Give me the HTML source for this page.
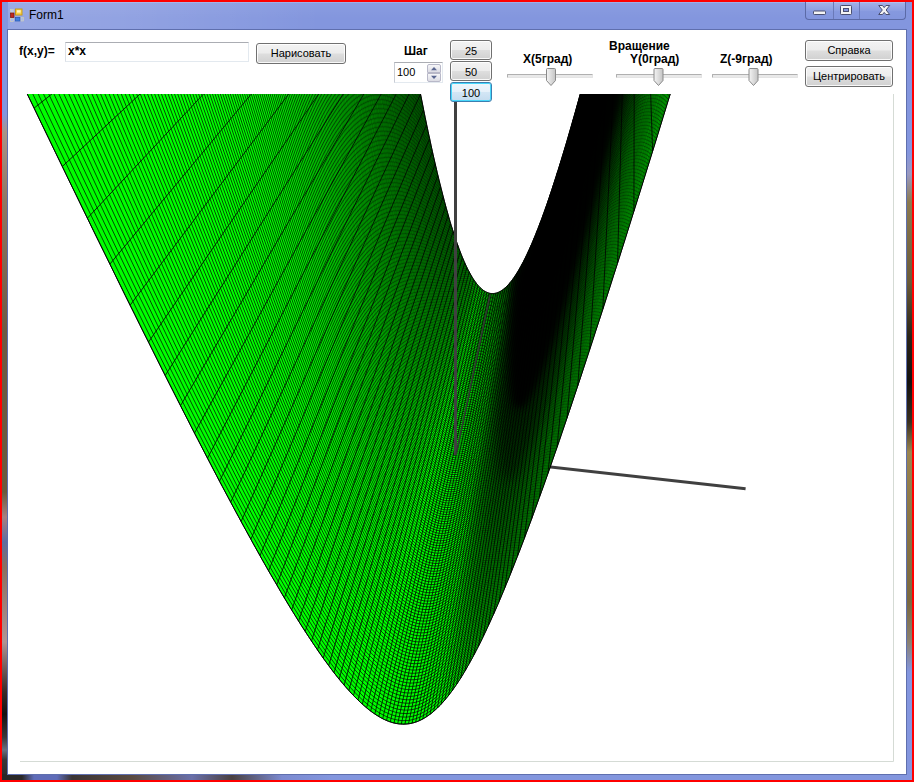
<!DOCTYPE html>
<html><head><meta charset="utf-8"><title>Form1</title>
<style>
html,body{margin:0;padding:0}
body{width:914px;height:782px;background:#ff0000;position:relative;overflow:hidden;font-family:"Liberation Sans",sans-serif;font-size:11px;color:#000}
div,span{position:absolute;box-sizing:border-box;white-space:nowrap}
#frame{left:2px;top:2px;width:910px;height:778px;background:#8396de;box-shadow:inset 0 0 0 1px rgba(255,255,255,.18)}
#fl{left:0;top:0;width:6px;height:778px;background:linear-gradient(180deg,#8396de 0,#8396de 112px,#a89488 130px,#8f7763 200px,#6d5a43 330px,#6a5a3c 490px,#a88080 515px,#5f6da0 540px,#8a7060 565px,#b09494 640px,#3a2a28 690px,#151010 712px,#3a3638 735px,#6a7080 748px,#3a3638 758px,#2a2828 778px)}
#fr{right:0;top:0;width:6px;height:778px;background:linear-gradient(180deg,#8396de 0,#8396de 150px,#9a9ac0 172px,#8c7a50 200px,#6a5a38 280px,#2a2418 335px,#141210 380px,#3a3020 420px,#9a8450 450px,#8a7444 520px,#7a6840 600px,#8a8070 640px,#8396de 670px,#8396de 778px)}
#fb{left:0;bottom:0;width:910px;height:6px;background:linear-gradient(90deg,#2a2828 0,#2a2828 20px,#5f6cb8 32px,#5f6cb8 55px,#3a3434 70px,#5a4a40 130px,#6a6fa8 190px,#4a4040 230px,#7c8ad0 280px,#8396de 330px,#8396de 910px)}
#tsh{left:0;top:0;width:910px;height:28px;background:linear-gradient(180deg,rgba(255,255,255,.06),rgba(255,255,255,0) 60%),linear-gradient(90deg,rgba(255,255,255,.16) 0,rgba(255,255,255,.12) 120px,rgba(255,255,255,0) 320px)}
#cb{left:6px;top:28px;width:898px;height:744px;background:#fff;outline:1px solid #5f6fae}
#title{left:27px;top:5px;font-size:12px;line-height:16px;color:#000}
.capg{left:803px;top:0;width:101px;height:18px;border:1px solid #5b6aa6;border-top:none;border-radius:0 0 4px 4px;background:linear-gradient(180deg,rgba(255,255,255,.22),rgba(255,255,255,.05) 50%,rgba(255,255,255,0) 52%)}
.capd{top:0;width:1px;height:17px;background:#6a79b8}
.btn{border:1px solid #707070;border-radius:3px;background:linear-gradient(180deg,#f3f3f3 0,#ececec 48%,#dedede 52%,#d0d0d0 100%);box-shadow:inset 0 0 0 1px rgba(255,255,255,.85);text-align:center;font-size:11px;line-height:19px}
.btn.f{border-color:#3c7fb1;box-shadow:inset 0 0 0 1px #48d8fb;background:linear-gradient(180deg,#f0f6fb 0,#e6f1fa 48%,#d3e6f5 52%,#c4dcef 100%)}
.b{font-weight:bold;font-size:12px;line-height:13px}
.track{height:4px;border:1px solid #b0b0b0;border-bottom-color:#e4e4e4;border-right-color:#e4e4e4;background:#e9e9e9;border-radius:1px}
</style></head><body>
<div id="frame"><div id="tsh"></div><div id="fl"></div><div id="fr"></div><div id="fb"></div>
<div id="cb"></div>
<svg style="position:absolute;left:8px;top:6px" width="14" height="14" viewBox="0 0 14 14"><rect x="0.5" y="1.5" width="3" height="3" fill="#b9c6f2" stroke="#d8d4b0" stroke-width=".6"/><rect x="0.5" y="5" width="3.5" height="4.5" fill="#c0281c" stroke="#7a1410" stroke-width=".7"/><rect x="0.5" y="10.5" width="3" height="3" fill="#a9b8ee" stroke="#d8d4b0" stroke-width=".6"/><rect x="5.5" y="1" width="6.5" height="6" fill="#f8d048" stroke="#c89a18" stroke-width="1"/><rect x="7" y="2.2" width="3.6" height="2.4" fill="#fff4c8"/><rect x="5.5" y="9.5" width="4.5" height="3.5" fill="#3f7ee0" stroke="#2a58b0" stroke-width=".7"/><rect x="11" y="9.5" width="2.5" height="3.5" fill="#a9b8ee" stroke="#d8d4b0" stroke-width=".6"/></svg>
<span id="title">Form1</span>
<div class="capg"></div><div class="capd" style="left:831px"></div><div class="capd" style="left:857px"></div>
<svg style="position:absolute;left:803px;top:0" width="102" height="18" viewBox="0 0 102 18">
<rect x="8.5" y="9" width="12" height="3.5" rx=".8" fill="#f4f4f4" stroke="#4a4f70" stroke-width="1"/>
<rect x="35.5" y="3.5" width="11" height="9" rx=".8" fill="#f4f4f4" stroke="#4a4f70" stroke-width="1"/><rect x="38.5" y="6.5" width="5" height="3" fill="#8396de" stroke="#4a4f70" stroke-width="1"/>
<path d="M73.70 3.50h3.8L79.20 5.62L80.90 3.50h3.8L81.10 8.00L84.70 12.50h-3.8L79.20 10.38L77.50 12.50h-3.8L77.30 8.00z" fill="#f4f4f4" stroke="#4a4f70" stroke-width="1" stroke-linejoin="round"/>
</svg>
</div>
<svg width="914" height="782" viewBox="0 0 914 782" style="position:absolute;left:0;top:0">
<defs><clipPath id="pb"><rect x="14" y="94" width="879" height="667"/></clipPath>
<clipPath id="sf"><path d="M-113.1 -200.7l12.6 26.6 12.1 25.5 11.6 24.5 11.2 23.6 10.7 22.6 10.4 21.8 10 21 9.6 20.2 9.3 19.4 9 18.8 8.7 18.2 8.4 17.5 8.1 16.9 7.8 16.4 7.7 15.8 7.3 15.3 7.2 14.8 6.9 14.4 6.8 13.9 6.5 13.6 6.4 13 6.2 12.8 6 12.3 5.8 12 5.7 11.6 5.6 11.3 5.4 11 5.2 10.7 5.1 10.4 5 10.2 4.9 9.8 4.8 9.6 4.6 9.4 4.5 9.1 4.5 8.8 4.3 8.7 4.2 8.4 4.1 8.2 4.1 8.1 3.9 7.8 3.9 7.6 3.8 7.5 3.7 7.3 3.6 7.1 3.6 6.9 3.4 6.8 3.4 6.6 3.4 6.5 3.3 6.4 3.2 6.2 3.1 6 3.1 5.9 3 5.8 3 5.7 2.9 5.6 2.9 5.4 2.8 5.3 2.8 5.2 2.7 5.1 2.7 5 2.6 4.9 2.6 4.7 2.5 4.7 2.5 4.6 2.5 4.5 2.4 4.4 2.4 4.3 2.3 4.3 2.3 4.1 2.3 4.1 2.2 3.9 2.2 4 2.2 3.8 2.1 3.7 2.1 3.7 2.1 3.6 2.1 3.6 2 3.4 2 3.4 1.9 3.4 1.9 3.3 1.9 3.2 1.9 3.1 1.9 3.1 1.8 3.1 1.8 2.9 1.8 3 1.8 2.8 1.7 2.8 1.7 2.8 1.7 2.7 1.7 2.7 1.6 2.6 1.7 2.5 1.6 2.5 1.6 2.5 1.6 2.4 1.5 2.4 1.6 2.3 1.5 2.3 1.5 2.2 1.5 2.2 1.5 2.2 1.4 2.1 1.5 2 1.4 2.1 1.4 2 1.4 1.9 1.4 1.9 1.4 1.9 1.3 1.8 1.4 1.9 1.3 1.7 1.3 1.8 1.3 1.7 1.3 1.6 1.3 1.7 1.3 1.6 1.2 1.5 1.3 1.6 1.2 1.5 1.3 1.4 1.2 1.5 1.2 1.4 1.2 1.4 1.2 1.3 1.2 1.3 1.1 1.3 1.2 1.3 1.1 1.2 1.2 1.2 1.1 1.2 1.1 1.1 1.2 1.1 1.1 1.1 1.1 1.1 1.1 1 1.1 1.1 1 .9 1.1 1 1.1 .9 1 .9 1.1 .9 1 .9 1.1 .8 1 .8 1 .8 1.1 .8 1 .7 1 .7 1 .7 1 .7 1 .6 1 .6 1 .6 1 .6 .9 .6 1 .5 1 .5 .9 .5 1 .4 1 .5 .9 .4 1 .4 .9 .3 .9 .4 1 .3 .9 .3 1 .3 .9 .3 .9 .2 .9 .2 1 .2 .9 .2 .9 .1 .9 .2 .9 .1 .9 0 .9 .1 .9 0 .9 .1 .9 0 .9-.1 .9 0 .9-.1 .9-.1 .9-.1 .9-.1 .9-.2 .9-.1 .9-.3 .9-.2 .9-.2 .9-.3 .9-.3 .9-.3 .9-.3 .9-.4 .9-.4 .9-.4 .8-.4 .9-.5 .9-.4 .9-.5 .9-.6 .9-.5 .9-.6 .9-.6 .9-.6 .9-.7 .9-.6 1-.7 .9-.7 .9-.8 .9-.8 .9-.8 .9-.8 .9-.9 1-.8 .9-.9 .9-1 1-.9 .9-1 .9-1 1-1.1 .9-1.1 1-1.1 .9-1.1 1-1.2 1-1.2 .9-1.2 1-1.3 1-1.3 1-1.3 .9-1.3 1-1.4 1-1.5 1-1.4 1.1-1.5 1-1.5 1-1.6 1-1.6 1.1-1.6 1-1.7 1.1-1.7 1-1.8 1.1-1.8 1.1-1.8 1-1.9 1.1-1.9 1.1-1.9 1.1-2 1.2-2.1 1.1-2 1.1-2.2 1.2-2.1 1.1-2.3 1.2-2.2 1.2-2.4 1.2-2.3 1.2-2.4 1.2-2.5 1.2-2.5 1.2-2.6 1.3-2.6 1.2-2.7 1.3-2.8 1.3-2.8 1.3-2.9 1.3-2.9 1.4-3 1.3-3 1.4-3.1 1.4-3.2 1.4-3.3 1.4-3.3 1.4-3.4 1.5-3.5 1.4-3.5 1.5-3.7 1.6-3.7 1.5-3.7 1.5-3.9 1.6-4 1.6-4 1.6-4.2 1.7-4.2 1.7-4.3 1.7-4.4 1.7-4.6 1.8-4.6 1.7-4.7 1.9-4.9 1.8-4.9 1.9-5.1 1.9-5.2 1.9-5.3 2-5.5 2-5.6 2.1-5.7 2.1-5.8 2.1-6 2.2-6.2 2.2-6.3 2.2-6.5 2.3-6.6 2.4-6.8 2.4-7 2.4-7.2 2.5-7.3 2.6-7.6 2.6-7.7 2.7-8 2.7-8.2 2.8-8.4 2.9-8.7 2.9-8.9 3-9.1 3.1-9.5 3.2-9.7 3.2-10 3.4-10.3 3.4-10.6 3.5-10.9 3.6-11.3 3.7-11.7 3.9-12 3.9-12.4 4.1-12.9 4.1-13.2 4.3-13.7 4.5-14.2 4.6-14.7 4.7-15.3 4.9-15.7 5.1-16.4 5.2-17 5.4-17.6 5.7-18.3 5.8-19.1 6-19.8 6.3-20.6 6.6-21.5 6.8-22.4 7.1-23.4 7.4-24.5 7.7-25.5 8-26.7 8.4-28.1 8.9-29.3-100.4-20.9-2.1 9.2-2.1 9-2 8.9-2.1 8.7-2 8.5-1.9 8.4-1.9 8.2-1.9 8-1.9 8-1.8 7.7-1.8 7.7-1.8 7.5-1.8 7.4-1.7 7.2-1.7 7.1-1.7 7-1.7 6.9-1.6 6.7-1.6 6.7-1.6 6.5-1.6 6.4-1.5 6.3-1.6 6.2-1.5 6.1-1.5 6-1.4 5.9-1.5 5.8-1.4 5.7-1.4 5.6-1.4 5.5-1.4 5.4-1.4 5.3-1.3 5.3-1.3 5.1-1.4 5.1-1.3 5-1.2 4.9-1.3 4.8-1.3 4.8-1.2 4.7-1.2 4.6-1.2 4.5-1.2 4.5-1.2 4.4-1.2 4.3-1.1 4.2-1.2 4.2-1.1 4.1-1.1 4.1-1.1 3.9-1.1 4-1.1 3.8-1.1 3.8-1.1 3.8-1 3.6-1.1 3.7-1 3.5-1 3.5-1 3.5-1 3.4-1 3.3-1 3.3-1 3.2-1 3.2-.9 3.2-1 3-.9 3.1-.9 3-1 2.9-.9 2.9-.9 2.8-.9 2.8-.9 2.8-.9 2.7-.8 2.7-.9 2.6-.9 2.6-.8 2.5-.9 2.5-.8 2.4-.8 2.4-.9 2.4-.8 2.3-.8 2.3-.8 2.3-.8 2.2-.8 2.2-.8 2.1-.8 2.1-.8 2-.8 2.1-.7 2-.8 1.9-.8 1.9-.7 1.9-.8 1.9-.7 1.8-.8 1.7-.7 1.8-.7 1.7-.7 1.7-.8 1.6-.7 1.6-.7 1.6-.7 1.6-.7 1.5-.7 1.5-.7 1.4-.7 1.5-.7 1.4-.7 1.3-.6 1.4-.7 1.3-.7 1.2-.7 1.3-.6 1.2-.7 1.2-.7 1.1-.6 1.2-.7 1.1-.6 1.1-.7 1-.6 1-.6 1-.7 1-.6 .9-.6 .9-.7 .9-.6 .9-.6 .8-.6 .8-.7 .8-.6 .7-.6 .8-.6 .7-.6 .6-.6 .7-.6 .6-.6 .6-.6 .6-.6 .5-.6 .5-.6 .5-.6 .5-.6 .5-.6 .4-.6 .4-.6 .4-.5 .3-.6 .3-.6 .3-.6 .3-.6 .3-.5 .2-.6 .2-.6 .2-.5 .1-.6 .1-.6 .1-.6 .1-.5 .1-.6 0-.5 0-.6 0-.6 0-.5-.1-.6-.1-.6-.1-.5-.1-.6-.2-.5-.2-.6-.2-.5-.2-.6-.3-.6-.2-.5-.3-.6-.4-.5-.3-.6-.4-.5-.4-.6-.4-.5-.5-.6-.4-.5-.5-.6-.6-.5-.5-.6-.6-.5-.6-.6-.6-.5-.7-.6-.6-.5-.7-.6-.8-.5-.7-.6-.8-.5-.8-.6-.8-.6-.9-.5-.8-.6-.9-.5-1-.6-.9-.5-1-.6-1-.5-1.1-.6-1-.6-1.1-.5-1.1-.6-1.2-.5-1.1-.6-1.2-.6-1.3-.5-1.2-.6-1.3-.6-1.3-.5-1.4-.6-1.3-.6-1.4-.6-1.5-.5-1.4-.6-1.5-.6-1.5-.6-1.6-.5-1.6-.6-1.6-.6-1.6-.6-1.7-.6-1.7-.6-1.8-.6-1.7-.6-1.8-.5-1.9-.6-1.8-.6-1.9-.6-2-.7-1.9-.6-2-.6-2.1-.6-2.1-.6-2.1-.6-2.1-.6-2.2-.6-2.2-.7-2.3-.6-2.3-.6-2.3-.7-2.4-.6-2.4-.6-2.4-.7-2.5-.6-2.6-.7-2.5-.6-2.6-.7-2.7-.7-2.7-.6-2.7-.7-2.8-.7-2.8-.6-2.9-.7-2.9-.7-3-.7-3-.7-3-.7-3.1-.7-3.2-.7-3.2-.7-3.2-.7-3.3-.7-3.4-.8-3.4-.7-3.4-.7-3.5-.8-3.6-.7-3.6-.8-3.7-.7-3.7-.8-3.8-.7-3.8-.8-3.9-.8-4-.8-4-.8-4.1-.8-4.1-.8-4.2-.8-4.3-.8-4.3-.9-4.4-.8-4.5-.8-4.6-.9-4.6-.9-4.7-.8-4.7-.9-4.9-.9-4.9-.9-5-.9-5-.9-5.2-.9-5.2-.9-5.3-1-5.4-.9-5.5-1-5.5-.9-5.7-1-5.7-1-5.9-1-5.9-1-6.1-1-6.1-1.1-6.2-1-6.4-1.1-6.4-1-6.5-1.1-6.7-1.1-6.8-1.1-6.8-1.1-7-1.2-7.2-1.1-7.2-1.2-7.4-1.2-7.4-1.2-7.7-1.2-7.7-1.2-7.9-1.3-8-1.2-8.2-1.3-8.3-1.3-8.5-1.3-8.6-1.3-8.7-1.4-9z"/></clipPath>
<filter id="bl" x="-30%" y="-10%" width="160%" height="120%"><feGaussianBlur stdDeviation="3.5"/></filter>
<filter id="bl2" x="-30%" y="-10%" width="160%" height="120%"><feGaussianBlur stdDeviation="6"/></filter></defs>
<path d="M20 761.5H893.5V94" fill="none" stroke="#d5dbd5" stroke-width="1"/>
<g clip-path="url(#pb)">
<path d="M456 456.5L745.6 488.7" stroke="#404040" stroke-width="3" fill="none"/>
<path d="M-113.1 -200.7l12.6 26.6 12.1 25.5 11.6 24.5 11.2 23.6 10.7 22.6 10.4 21.8 10 21 9.6 20.2 9.3 19.4 9 18.8 8.7 18.2 8.4 17.5 8.1 16.9 7.8 16.4 7.7 15.8 7.3 15.3 7.2 14.8 6.9 14.4 6.8 13.9 6.5 13.6 6.4 13 6.2 12.8 6 12.3 5.8 12 5.7 11.6 5.6 11.3 5.4 11 5.2 10.7 5.1 10.4 5 10.2 4.9 9.8 4.8 9.6 4.6 9.4 4.5 9.1 4.5 8.8 4.3 8.7 4.2 8.4 4.1 8.2 4.1 8.1 3.9 7.8 3.9 7.6 3.8 7.5 3.7 7.3 3.6 7.1 3.6 6.9 3.4 6.8 3.4 6.6 3.4 6.5 3.3 6.4 3.2 6.2 3.1 6 3.1 5.9 3 5.8 3 5.7 2.9 5.6 2.9 5.4 2.8 5.3 2.8 5.2 2.7 5.1 2.7 5 2.6 4.9 2.6 4.7 2.5 4.7 2.5 4.6 2.5 4.5 2.4 4.4 2.4 4.3 2.3 4.3 2.3 4.1 2.3 4.1 2.2 3.9 2.2 4 2.2 3.8 2.1 3.7 2.1 3.7 2.1 3.6 2.1 3.6 2 3.4 2 3.4 1.9 3.4 1.9 3.3 1.9 3.2 1.9 3.1 1.9 3.1 1.8 3.1 1.8 2.9 1.8 3 1.8 2.8 1.7 2.8 1.7 2.8 1.7 2.7 1.7 2.7 1.6 2.6 1.7 2.5 1.6 2.5 1.6 2.5 1.6 2.4 1.5 2.4 1.6 2.3 1.5 2.3 1.5 2.2 1.5 2.2 1.5 2.2 1.4 2.1 1.5 2 1.4 2.1 1.4 2 1.4 1.9 1.4 1.9 1.4 1.9 1.3 1.8 1.4 1.9 1.3 1.7 1.3 1.8 1.3 1.7 1.3 1.6 1.3 1.7 1.3 1.6 1.2 1.5 1.3 1.6 1.2 1.5 1.3 1.4 1.2 1.5 1.2 1.4 1.2 1.4 1.2 1.3 1.2 1.3 1.1 1.3 1.2 1.3 1.1 1.2 1.2 1.2 1.1 1.2 1.1 1.1 1.2 1.1 1.1 1.1 1.1 1.1 1.1 1 1.1 1.1 1 .9 1.1 1 1.1 .9 1 .9 1.1 .9 1 .9 1.1 .8 1 .8 1 .8 1.1 .8 1 .7 1 .7 1 .7 1 .7 1 .6 1 .6 1 .6 1 .6 .9 .6 1 .5 1 .5 .9 .5 1 .4 1 .5 .9 .4 1 .4 .9 .3 .9 .4 1 .3 .9 .3 1 .3 .9 .3 .9 .2 .9 .2 1 .2 .9 .2 .9 .1 .9 .2 .9 .1 .9 0 .9 .1 .9 0 .9 .1 .9 0 .9-.1 .9 0 .9-.1 .9-.1 .9-.1 .9-.1 .9-.2 .9-.1 .9-.3 .9-.2 .9-.2 .9-.3 .9-.3 .9-.3 .9-.3 .9-.4 .9-.4 .9-.4 .8-.4 .9-.5 .9-.4 .9-.5 .9-.6 .9-.5 .9-.6 .9-.6 .9-.6 .9-.7 .9-.6 1-.7 .9-.7 .9-.8 .9-.8 .9-.8 .9-.8 .9-.9 1-.8 .9-.9 .9-1 1-.9 .9-1 .9-1 1-1.1 .9-1.1 1-1.1 .9-1.1 1-1.2 1-1.2 .9-1.2 1-1.3 1-1.3 1-1.3 .9-1.3 1-1.4 1-1.5 1-1.4 1.1-1.5 1-1.5 1-1.6 1-1.6 1.1-1.6 1-1.7 1.1-1.7 1-1.8 1.1-1.8 1.1-1.8 1-1.9 1.1-1.9 1.1-1.9 1.1-2 1.2-2.1 1.1-2 1.1-2.2 1.2-2.1 1.1-2.3 1.2-2.2 1.2-2.4 1.2-2.3 1.2-2.4 1.2-2.5 1.2-2.5 1.2-2.6 1.3-2.6 1.2-2.7 1.3-2.8 1.3-2.8 1.3-2.9 1.3-2.9 1.4-3 1.3-3 1.4-3.1 1.4-3.2 1.4-3.3 1.4-3.3 1.4-3.4 1.5-3.5 1.4-3.5 1.5-3.7 1.6-3.7 1.5-3.7 1.5-3.9 1.6-4 1.6-4 1.6-4.2 1.7-4.2 1.7-4.3 1.7-4.4 1.7-4.6 1.8-4.6 1.7-4.7 1.9-4.9 1.8-4.9 1.9-5.1 1.9-5.2 1.9-5.3 2-5.5 2-5.6 2.1-5.7 2.1-5.8 2.1-6 2.2-6.2 2.2-6.3 2.2-6.5 2.3-6.6 2.4-6.8 2.4-7 2.4-7.2 2.5-7.3 2.6-7.6 2.6-7.7 2.7-8 2.7-8.2 2.8-8.4 2.9-8.7 2.9-8.9 3-9.1 3.1-9.5 3.2-9.7 3.2-10 3.4-10.3 3.4-10.6 3.5-10.9 3.6-11.3 3.7-11.7 3.9-12 3.9-12.4 4.1-12.9 4.1-13.2 4.3-13.7 4.5-14.2 4.6-14.7 4.7-15.3 4.9-15.7 5.1-16.4 5.2-17 5.4-17.6 5.7-18.3 5.8-19.1 6-19.8 6.3-20.6 6.6-21.5 6.8-22.4 7.1-23.4 7.4-24.5 7.7-25.5 8-26.7 8.4-28.1 8.9-29.3-100.4-20.9-2.1 9.2-2.1 9-2 8.9-2.1 8.7-2 8.5-1.9 8.4-1.9 8.2-1.9 8-1.9 8-1.8 7.7-1.8 7.7-1.8 7.5-1.8 7.4-1.7 7.2-1.7 7.1-1.7 7-1.7 6.9-1.6 6.7-1.6 6.7-1.6 6.5-1.6 6.4-1.5 6.3-1.6 6.2-1.5 6.1-1.5 6-1.4 5.9-1.5 5.8-1.4 5.7-1.4 5.6-1.4 5.5-1.4 5.4-1.4 5.3-1.3 5.3-1.3 5.1-1.4 5.1-1.3 5-1.2 4.9-1.3 4.8-1.3 4.8-1.2 4.7-1.2 4.6-1.2 4.5-1.2 4.5-1.2 4.4-1.2 4.3-1.1 4.2-1.2 4.2-1.1 4.1-1.1 4.1-1.1 3.9-1.1 4-1.1 3.8-1.1 3.8-1.1 3.8-1 3.6-1.1 3.7-1 3.5-1 3.5-1 3.5-1 3.4-1 3.3-1 3.3-1 3.2-1 3.2-.9 3.2-1 3-.9 3.1-.9 3-1 2.9-.9 2.9-.9 2.8-.9 2.8-.9 2.8-.9 2.7-.8 2.7-.9 2.6-.9 2.6-.8 2.5-.9 2.5-.8 2.4-.8 2.4-.9 2.4-.8 2.3-.8 2.3-.8 2.3-.8 2.2-.8 2.2-.8 2.1-.8 2.1-.8 2-.8 2.1-.7 2-.8 1.9-.8 1.9-.7 1.9-.8 1.9-.7 1.8-.8 1.7-.7 1.8-.7 1.7-.7 1.7-.8 1.6-.7 1.6-.7 1.6-.7 1.6-.7 1.5-.7 1.5-.7 1.4-.7 1.5-.7 1.4-.7 1.3-.6 1.4-.7 1.3-.7 1.2-.7 1.3-.6 1.2-.7 1.2-.7 1.1-.6 1.2-.7 1.1-.6 1.1-.7 1-.6 1-.6 1-.7 1-.6 .9-.6 .9-.7 .9-.6 .9-.6 .8-.6 .8-.7 .8-.6 .7-.6 .8-.6 .7-.6 .6-.6 .7-.6 .6-.6 .6-.6 .6-.6 .5-.6 .5-.6 .5-.6 .5-.6 .5-.6 .4-.6 .4-.6 .4-.5 .3-.6 .3-.6 .3-.6 .3-.6 .3-.5 .2-.6 .2-.6 .2-.5 .1-.6 .1-.6 .1-.6 .1-.5 .1-.6 0-.5 0-.6 0-.6 0-.5-.1-.6-.1-.6-.1-.5-.1-.6-.2-.5-.2-.6-.2-.5-.2-.6-.3-.6-.2-.5-.3-.6-.4-.5-.3-.6-.4-.5-.4-.6-.4-.5-.5-.6-.4-.5-.5-.6-.6-.5-.5-.6-.6-.5-.6-.6-.6-.5-.7-.6-.6-.5-.7-.6-.8-.5-.7-.6-.8-.5-.8-.6-.8-.6-.9-.5-.8-.6-.9-.5-1-.6-.9-.5-1-.6-1-.5-1.1-.6-1-.6-1.1-.5-1.1-.6-1.2-.5-1.1-.6-1.2-.6-1.3-.5-1.2-.6-1.3-.6-1.3-.5-1.4-.6-1.3-.6-1.4-.6-1.5-.5-1.4-.6-1.5-.6-1.5-.6-1.6-.5-1.6-.6-1.6-.6-1.6-.6-1.7-.6-1.7-.6-1.8-.6-1.7-.6-1.8-.5-1.9-.6-1.8-.6-1.9-.6-2-.7-1.9-.6-2-.6-2.1-.6-2.1-.6-2.1-.6-2.1-.6-2.2-.6-2.2-.7-2.3-.6-2.3-.6-2.3-.7-2.4-.6-2.4-.6-2.4-.7-2.5-.6-2.6-.7-2.5-.6-2.6-.7-2.7-.7-2.7-.6-2.7-.7-2.8-.7-2.8-.6-2.9-.7-2.9-.7-3-.7-3-.7-3-.7-3.1-.7-3.2-.7-3.2-.7-3.2-.7-3.3-.7-3.4-.8-3.4-.7-3.4-.7-3.5-.8-3.6-.7-3.6-.8-3.7-.7-3.7-.8-3.8-.7-3.8-.8-3.9-.8-4-.8-4-.8-4.1-.8-4.1-.8-4.2-.8-4.3-.8-4.3-.9-4.4-.8-4.5-.8-4.6-.9-4.6-.9-4.7-.8-4.7-.9-4.9-.9-4.9-.9-5-.9-5-.9-5.2-.9-5.2-.9-5.3-1-5.4-.9-5.5-1-5.5-.9-5.7-1-5.7-1-5.9-1-5.9-1-6.1-1-6.1-1.1-6.2-1-6.4-1.1-6.4-1-6.5-1.1-6.7-1.1-6.8-1.1-6.8-1.1-7-1.2-7.2-1.1-7.2-1.2-7.4-1.2-7.4-1.2-7.7-1.2-7.7-1.2-7.9-1.3-8-1.2-8.2-1.3-8.3-1.3-8.5-1.3-8.6-1.3-8.7-1.4-9z" fill="#00ff00" stroke="#000" stroke-width="1"/>
<path d="M26.3 92l7.8 16.1 28.2 58.4 25.1 51.7 22.5 45.9 20.2 41.1 18.4 36.9 16.7 33.4 15.3 30.2 14 27.4 13 25.1 12 23 11.2 21 10.4 19.3 9.8 17.8 9.1 16.4 8.6 15.2 8.2 14 7.6 13 7.3 12.1 6.9 11.1 6.6 10.3 6.3 9.6 6 8.9 5.7 8.2 5.5 7.5 5.3 7.1 5.1 6.4 5 6 4.8 5.4 4.6 5 4.5 4.5 4.3 4.1 4.3 3.7 4.1 3.3 4.1 2.9 4 2.5 3.9 2.2 3.8 1.8 3.8 1.4 3.7 1.1 3.7 .7 3.6 .4 3.6 0 3.6-.3 3.6-.7 3.6-1 3.6-1.4 3.5-1.7 3.6-2.2 3.6-2.5 3.7-3 3.7-3.3 3.7-3.8 3.8-4.3 3.8-4.7 3.9-5.2 4.1-5.8 4.1-6.3 4.2-7 4.3-7.5 4.5-8.3 4.7-9 4.8-9.7 5-10.7 5.3-11.6 5.5-12.6 5.7-13.7 6.1-15 6.5-16.4 6.9-17.9 7.3-19.6 7.8-21.6 8.5-23.7 9.1-26.2 9.9-29.1 10.8-32.3 11.9-36.2 13.2-40.6 14.7-45.9 16.4-52.2 18.7-59.9 18.2-59.2M31.9 92l6.1 13 27.9 58.2 24.8 51.5 22.2 45.8 20 41 18.1 36.9 16.6 33.3 15.1 30.2 13.9 27.4 12.9 25.1 11.9 22.9 11.1 21.1 10.3 19.3 9.7 17.8 9.1 16.5 8.5 15.1 8.1 14.1 7.6 13 7.2 12 6.9 11.2 6.5 10.3 6.2 9.6 6 8.9 5.7 8.2 5.5 7.6 5.3 7 5.1 6.5 4.9 6 4.7 5.4 4.6 5 4.5 4.6 4.3 4.1 4.3 3.7 4.1 3.3 4.1 2.9 3.9 2.5 3.9 2.2 3.8 1.8 3.8 1.4 3.7 1.1 3.7 .7 3.6 .4 3.6 0 3.6-.3 3.5-.7 3.6-1.1 3.6-1.4 3.5-1.7 3.6-2.2 3.6-2.5 3.7-3 3.6-3.4 3.8-3.8 3.7-4.3 3.9-4.7 3.9-5.3 4-5.8 4.1-6.3 4.2-7 4.3-7.6 4.5-8.2 4.7-9 4.8-9.9 5-10.6 5.2-11.7 5.5-12.6 5.8-13.8 6.1-15 6.4-16.4 6.9-17.9 7.3-19.7 7.8-21.6 8.4-23.7 9.1-26.3 9.9-29 10.7-32.3 11.9-36.2 13.1-40.5 14.6-45.9 16.3-52.1 18.6-59.7 17-55.4M37.3 92l4.6 9.9 27.5 58 24.5 51.3 21.9 45.7 19.8 41 18 36.8 16.4 33.2 14.9 30.2 13.8 27.4 12.8 25.1 11.8 22.9 11 21.1 10.2 19.3 9.6 17.8 9 16.5 8.5 15.2 8 14.1 7.5 13 7.2 12 6.8 11.2 6.5 10.4 6.2 9.6 5.9 8.9 5.7 8.2 5.5 7.6 5.2 7.1 5.1 6.4 4.9 6 4.7 5.5 4.6 5 4.4 4.5 4.3 4.2 4.3 3.7 4.1 3.3 4 2.9 3.9 2.5 3.9 2.2 3.8 1.7 3.8 1.5 3.7 1.1 3.6 .7 3.6 .3 3.6 .1 3.6-.4 3.6-.7 3.5-1 3.6-1.4 3.5-1.8 3.6-2.2 3.6-2.5 3.6-3 3.7-3.4 3.7-3.8 3.8-4.3 3.8-4.8 3.9-5.3 4-5.8 4.1-6.4 4.2-6.9 4.4-7.7 4.4-8.3 4.7-9 4.8-9.9 5-10.7 5.2-11.6 5.5-12.7 5.7-13.8 6.1-15.1 6.4-16.4 6.9-18 7.3-19.6 7.7-21.6 8.4-23.8 9.1-26.2 9.8-29.1 10.8-32.3 11.8-36.1 13-40.5 14.5-45.8 16.3-51.9 18.4-59.5 15.8-51.8M42.6 92l3.2 6.8 27.1 57.8 24.2 51.2 21.7 45.6 19.5 40.8 17.8 36.8 16.2 33.2 14.8 30.1 13.7 27.5 12.6 25 11.7 23 10.9 21 10.2 19.4 9.5 17.8 8.9 16.5 8.4 15.2 8 14.1 7.5 13 7.1 12.1 6.8 11.2 6.4 10.3 6.2 9.7 5.9 8.9 5.6 8.2 5.4 7.6 5.2 7.1 5.1 6.5 4.8 6 4.7 5.5 4.6 5 4.4 4.5 4.3 4.1 4.2 3.8 4.1 3.3 4 2.9 4 2.5 3.8 2.2 3.8 1.8 3.8 1.4 3.6 1.1 3.7 .7 3.6 .3 3.6 .1 3.5-.4 3.6-.7 3.5-1 3.6-1.5 3.5-1.8 3.6-2.1 3.6-2.6 3.6-3 3.7-3.4 3.7-3.9 3.7-4.3 3.9-4.8 3.9-5.3 4-5.8 4-6.4 4.2-7 4.4-7.6 4.4-8.4 4.7-9 4.8-9.9 5-10.8 5.2-11.6 5.4-12.8 5.8-13.8 6-15.1 6.5-16.4 6.8-18 7.2-19.7 7.8-21.7 8.4-23.7 9-26.3 9.8-29.1 10.7-32.3 11.7-36 13-40.5 14.4-45.6 16.2-51.9 18.2-59.3 14.7-48.1M47.8 92l1.8 3.8 26.8 57.6 23.9 51 21.4 45.5 19.3 40.8 17.6 36.7 16 33.1 14.7 30.1 13.6 27.4 12.5 25.1 11.6 22.9 10.7 21.1 10.1 19.3 9.5 17.9 8.8 16.5 8.4 15.2 7.8 14.1 7.5 13 7.1 12.1 6.7 11.2 6.4 10.4 6.1 9.7 5.9 8.9 5.6 8.2 5.4 7.7 5.2 7.1 5 6.5 4.8 6 4.7 5.4 4.5 5.1 4.4 4.5 4.3 4.2 4.2 3.7 4.1 3.3 4 2.9 3.9 2.5 3.8 2.2 3.8 1.8 3.7 1.4 3.7 1.1 3.6 .7 3.6 .4 3.6 0 3.6-.4 3.5-.7 3.5-1 3.6-1.5 3.5-1.8 3.6-2.2 3.6-2.6 3.6-3 3.6-3.4 3.7-3.9 3.8-4.3 3.8-4.8 3.9-5.3 4-5.9 4.1-6.4 4.2-7 4.3-7.7 4.4-8.4 4.6-9.1 4.8-9.9 5-10.7 5.2-11.7 5.5-12.8 5.7-13.9 6.1-15.1 6.4-16.5 6.8-18 7.2-19.7 7.8-21.6 8.3-23.8 9-26.3 9.7-29.1 10.7-32.3 11.7-36 12.9-40.4 14.3-45.5 16.1-51.7 18.1-59.1 13.5-44.6M53 92l.4 .8 26.4 57.4 23.6 50.9 21.2 45.4 19.1 40.6 17.4 36.7 15.8 33.1 14.6 30.1 13.4 27.4 12.4 25 11.5 22.9 10.7 21.1 10 19.4 9.3 17.8 8.8 16.5 8.3 15.2 7.8 14.1 7.4 13.1 7 12.1 6.7 11.2 6.4 10.4 6.1 9.7 5.8 8.9 5.6 8.3 5.3 7.7 5.2 7 5 6.6 4.8 6 4.6 5.5 4.5 5 4.4 4.6 4.3 4.1 4.2 3.7 4 3.3 4 3 3.9 2.5 3.8 2.2 3.8 1.7 3.7 1.5 3.7 1 3.6 .8 3.6 .3 3.5 0 3.6-.3 3.5-.7 3.5-1.1 3.6-1.5 3.5-1.8 3.6-2.2 3.5-2.6 3.6-3 3.7-3.5 3.7-3.8 3.7-4.4 3.8-4.8 3.9-5.4 4-5.8 4.1-6.5 4.2-7 4.3-7.7 4.4-8.4 4.6-9.1 4.8-10 5-10.8 5.2-11.7 5.4-12.8 5.8-13.9 6-15.1 6.4-16.5 6.8-18.1 7.2-19.7 7.7-21.7 8.3-23.8 9-26.3 9.7-29 10.6-32.3 11.6-36 12.9-40.3 14.2-45.5 16-51.6 18-58.9 12.4-41M58 92l25.2 55.1 23.3 50.7 20.9 45.2 18.9 40.6 17.2 36.6 15.7 33.1 14.4 30 13.3 27.4 12.3 25 11.4 23 10.6 21 9.9 19.4 9.3 17.9 8.7 16.5 8.2 15.2 7.8 14.1 7.3 13.1 7 12.1 6.6 11.3 6.4 10.4 6 9.6 5.8 9 5.5 8.3 5.4 7.7 5.1 7 5 6.6 4.7 6 4.7 5.5 4.5 5 4.3 4.6 4.3 4.2 4.1 3.7 4.1 3.3 3.9 2.9 3.9 2.6 3.8 2.1 3.8 1.8 3.7 1.5 3.6 1 3.6 .7 3.6 .4 3.6 0 3.5-.4 3.5-.7 3.5-1.1 3.6-1.4 3.5-1.9 3.5-2.2 3.6-2.6 3.6-3 3.6-3.5 3.7-3.9 3.8-4.4 3.8-4.8 3.8-5.4 4-5.9 4.1-6.4 4.2-7.1 4.3-7.7 4.4-8.4 4.6-9.2 4.8-9.9 5-10.9 5.1-11.7 5.5-12.8 5.7-14 6-15.1 6.4-16.6 6.7-18 7.2-19.8 7.7-21.7 8.3-23.8 9-26.3 9.6-29 10.6-32.3 11.6-36 12.7-40.2 14.2-45.4 15.9-51.4 17.9-58.7 11.3-37.6M63 92l23.5 52 23 50.5 20.7 45.2 18.7 40.5 17 36.5 15.6 33 14.2 30 13.2 27.4 12.1 25 11.3 22.9 10.6 21.1 9.8 19.4 9.2 17.8 8.7 16.6 8.1 15.2 7.7 14.2 7.3 13 7 12.2 6.5 11.2 6.3 10.5 6 9.6 5.8 9 5.5 8.3 5.3 7.7 5.1 7.1 4.9 6.5 4.8 6 4.6 5.6 4.5 5 4.3 4.6 4.2 4.1 4.2 3.8 4 3.3 3.9 2.9 3.9 2.6 3.8 2.1 3.8 1.8 3.6 1.5 3.7 1 3.6 .7 3.5 .4 3.6 0 3.5-.4 3.5-.7 3.5-1.1 3.5-1.5 3.6-1.8 3.5-2.2 3.6-2.7 3.5-3 3.7-3.5 3.7-3.9 3.7-4.4 3.8-4.9 3.9-5.3 3.9-6 4.1-6.5 4.2-7 4.3-7.8 4.4-8.4 4.6-9.2 4.8-10 4.9-10.8 5.2-11.8 5.4-12.9 5.7-13.9 6-15.2 6.4-16.6 6.7-18.1 7.2-19.8 7.7-21.7 8.2-23.8 8.9-26.3 9.7-29 10.5-32.3 11.5-35.9 12.7-40.2 14.1-45.3 15.8-51.3 17.8-58.5 10.2-34.1M67.9 92l21.9 48.9 22.7 50.4 20.5 45 18.5 40.4 16.8 36.5 15.4 33 14.1 30 13.1 27.3 12 25 11.2 22.9 10.4 21.1 9.8 19.4 9.1 17.9 8.6 16.5 8.1 15.3 7.7 14.1 7.2 13.1 6.9 12.1 6.5 11.3 6.3 10.5 6 9.6 5.7 9 5.5 8.3 5.2 7.7 5.1 7.1 4.9 6.6 4.7 6 4.6 5.5 4.5 5.1 4.3 4.6 4.2 4.2 4.1 3.7 4 3.3 4 2.9 3.8 2.6 3.8 2.2 3.7 1.7 3.7 1.5 3.6 1 3.6 .7 3.6 .4 3.5 0 3.5-.4 3.5-.7 3.5-1.1 3.5-1.5 3.5-1.8 3.6-2.3 3.5-2.6 3.6-3.1 3.6-3.5 3.7-3.9 3.7-4.4 3.8-4.9 3.9-5.4 3.9-5.9 4.1-6.6 4.2-7.1 4.2-7.7 4.5-8.5 4.6-9.2 4.7-10 5-10.9 5.1-11.8 5.5-12.9 5.6-13.9 6-15.3 6.4-16.6 6.7-18.1 7.2-19.8 7.6-21.7 8.2-23.8 8.9-26.3 9.6-29.1 10.5-32.2 11.5-35.9 12.6-40.1 14-45.2 15.7-51.1 17.7-58.3 9.2-30.8M72.7 92l20.3 45.9 22.5 50.2 20.2 44.9 18.3 40.4 16.7 36.3 15.2 33 14 29.9 12.9 27.4 12 24.9 11 23 10.4 21 9.7 19.4 9 17.9 8.6 16.5 8 15.3 7.6 14.2 7.2 13.1 6.8 12.1 6.5 11.3 6.2 10.5 6 9.7 5.7 9 5.4 8.3 5.2 7.7 5.1 7.1 4.9 6.6 4.7 6 4.5 5.6 4.5 5 4.3 4.6 4.2 4.2 4.1 3.7 4 3.4 3.9 2.9 3.8 2.5 3.8 2.2 3.7 1.8 3.7 1.4 3.6 1.1 3.5 .7 3.6 .3 3.5 0 3.5-.4 3.5-.7 3.5-1.1 3.5-1.5 3.5-1.9 3.5-2.2 3.6-2.7 3.5-3 3.7-3.5 3.6-4 3.7-4.4 3.8-4.9 3.9-5.4 3.9-6 4.1-6.5 4.1-7.2 4.3-7.8 4.4-8.4 4.6-9.3 4.8-10 4.9-10.9 5.2-11.9 5.4-12.8 5.7-14 5.9-15.3 6.4-16.6 6.7-18.1 7.1-19.9 7.7-21.7 8.2-23.8 8.8-26.3 9.6-29.1 10.4-32.1 11.4-35.9 12.6-40.1 13.9-45.1 15.6-51 17.5-58.1 8.2-27.4M77.4 92l18.9 42.9 22.2 50.1 19.9 44.8 18.1 40.2 16.5 36.3 15.1 32.9 13.9 29.9 12.7 27.3 11.9 25 11 22.9 10.2 21.1 9.6 19.4 9 17.9 8.5 16.5 8 15.3 7.5 14.2 7.2 13.1 6.8 12.2 6.4 11.2 6.2 10.5 5.9 9.7 5.6 9 5.4 8.4 5.3 7.7 5 7.1 4.8 6.6 4.7 6 4.6 5.6 4.4 5 4.3 4.7 4.1 4.1 4.1 3.8 4 3.3 3.9 2.9 3.8 2.6 3.8 2.2 3.7 1.8 3.6 1.4 3.6 1 3.6 .7 3.5 .4 3.5 0 3.5-.4 3.5-.8 3.5-1.1 3.5-1.5 3.5-1.8 3.5-2.3 3.5-2.7 3.6-3.1 3.6-3.5 3.6-4 3.8-4.4 3.7-4.9 3.9-5.4 3.9-6 4.1-6.6 4.1-7.1 4.3-7.8 4.4-8.6 4.6-9.2 4.7-10.1 5-10.9 5.1-11.9 5.4-12.9 5.7-14 5.9-15.3 6.4-16.6 6.6-18.2 7.2-19.8 7.6-21.8 8.2-23.8 8.8-26.3 9.5-29 10.4-32.2 11.4-35.8 12.5-40 13.8-45 15.5-50.8 17.4-57.9 7.2-24.2M82 92l17.4 39.9 22 50 19.7 44.6 17.9 40.2 16.4 36.2 14.9 32.9 13.7 29.9 12.7 27.3 11.7 24.9 10.9 22.9 10.2 21.1 9.5 19.4 8.9 17.9 8.4 16.5 7.9 15.3 7.5 14.2 7.1 13.1 6.8 12.2 6.4 11.3 6.1 10.5 5.9 9.7 5.6 9 5.4 8.4 5.2 7.7 5 7.1 4.8 6.6 4.6 6.1 4.6 5.5 4.4 5.1 4.2 4.6 4.2 4.2 4 3.8 4 3.3 3.9 2.9 3.8 2.6 3.7 2.1 3.7 1.8 3.6 1.5 3.6 1 3.6 .7 3.5 .4 3.5-.1 3.5-.3 3.5-.8 3.5-1.1 3.4-1.5 3.5-1.9 3.5-2.3 3.6-2.7 3.5-3.1 3.6-3.5 3.7-4 3.7-4.4 3.7-5 3.9-5.4 3.9-6 4.1-6.6 4.1-7.2 4.3-7.8 4.4-8.5 4.5-9.3 4.8-10.1 4.9-11 5.1-11.9 5.4-12.9 5.7-14 5.9-15.3 6.3-16.7 6.7-18.2 7.1-19.8 7.6-21.8 8.2-23.8 8.7-26.3 9.5-29 10.4-32.2 11.3-35.7 12.5-40 13.7-44.9 15.4-50.7 17.3-57.7 6.2-20.9M86.6 92l16 37 21.7 49.8 19.5 44.5 17.7 40.1 16.2 36.2 14.7 32.8 13.6 29.8 12.6 27.3 11.6 24.9 10.8 22.9 10.1 21.1 9.4 19.4 8.9 17.9 8.3 16.5 7.9 15.3 7.4 14.2 7.1 13.2 6.7 12.2 6.4 11.3 6 10.5 5.9 9.7 5.5 9 5.4 8.4 5.2 7.7 4.9 7.2 4.8 6.6 4.7 6 4.5 5.6 4.3 5.1 4.3 4.6 4.1 4.2 4.1 3.7 3.9 3.4 3.9 2.9 3.8 2.6 3.7 2.2 3.7 1.7 3.6 1.5 3.6 1 3.5 .7 3.5 .4 3.5-.1 3.5-.4 3.5-.7 3.4-1.2 3.5-1.5 3.5-1.9 3.5-2.2 3.5-2.7 3.5-3.2 3.6-3.5 3.7-4 3.7-4.5 3.8-4.9 3.8-5.5 3.9-6 4.1-6.6 4.1-7.2 4.2-7.9 4.4-8.5 4.6-9.3 4.7-10.1 4.9-11 5.2-11.9 5.3-13 5.7-14 5.9-15.4 6.3-16.6 6.7-18.2 7.1-19.9 7.5-21.8 8.1-23.8 8.8-26.3 9.5-29 10.3-32.1 11.2-35.7 12.4-39.9 13.7-44.8 15.3-50.6 17.2-57.5 5.3-17.7M91.1 92l14.6 34.1 21.4 49.6 19.3 44.5 17.5 39.9 16 36.2 14.7 32.7 13.4 29.8 12.5 27.3 11.5 24.9 10.7 22.9 10 21 9.4 19.4 8.7 17.9 8.3 16.6 7.8 15.3 7.4 14.2 7 13.2 6.7 12.2 6.3 11.3 6.1 10.5 5.7 9.7 5.6 9.1 5.3 8.4 5.1 7.7 5 7.2 4.8 6.6 4.6 6 4.5 5.6 4.3 5.1 4.2 4.6 4.2 4.2 4 3.8 3.9 3.3 3.9 3 3.7 2.5 3.8 2.2 3.6 1.8 3.6 1.4 3.6 1.1 3.5 .7 3.5 .3 3.5-.1 3.5-.4 3.4-.7 3.5-1.2 3.5-1.5 3.4-1.9 3.5-2.3 3.5-2.7 3.6-3.1 3.6-3.6 3.6-4 3.7-4.5 3.8-4.9 3.8-5.5 3.9-6.1 4-6.6 4.2-7.2 4.2-7.9 4.4-8.5 4.6-9.4 4.7-10.1 4.9-11 5.1-11.9 5.4-13 5.6-14.1 5.9-15.3 6.3-16.7 6.6-18.3 7.1-19.8 7.5-21.8 8.1-23.9 8.8-26.3 9.4-28.9 10.3-32.1 11.2-35.7 12.3-39.8 13.6-44.7 15.2-50.4 17.1-57.3 4.3-14.6M95.5 92l13.3 31.2 21.1 49.5 19.1 44.3 17.4 39.9 15.8 36.1 14.5 32.7 13.3 29.8 12.3 27.2 11.4 24.9 10.7 22.9 9.9 21 9.3 19.4 8.7 17.9 8.2 16.6 7.8 15.3 7.3 14.2 6.9 13.2 6.7 12.2 6.3 11.3 6 10.5 5.7 9.8 5.5 9 5.3 8.4 5.1 7.8 4.9 7.1 4.8 6.7 4.6 6 4.4 5.6 4.4 5.1 4.2 4.6 4.1 4.2 4 3.8 3.9 3.4 3.8 2.9 3.8 2.6 3.7 2.1 3.7 1.8 3.6 1.4 3.5 1.1 3.5 .7 3.5 .3 3.5 0 3.5-.4 3.4-.8 3.5-1.1 3.4-1.6 3.5-1.9 3.5-2.3 3.5-2.7 3.5-3.1 3.6-3.6 3.6-4 3.7-4.5 3.7-5 3.9-5.5 3.9-6.1 4-6.6 4.1-7.3 4.3-7.9 4.4-8.6 4.5-9.3 4.7-10.1 4.9-11.1 5.1-11.9 5.4-13 5.6-14.2 5.9-15.3 6.3-16.7 6.6-18.3 7-19.9 7.6-21.7 8-23.9 8.7-26.3 9.4-28.9 10.2-32.1 11.2-35.6 12.3-39.8 13.5-44.6 15.2-50.3 16.9-57.1 3.4-11.4M99.8 92l12 28.4 20.9 49.3 18.9 44.2 17.2 39.8 15.6 36 14.4 32.7 13.2 29.7 12.2 27.2 11.3 24.9 10.5 22.9 9.9 21 9.2 19.4 8.6 17.9 8.2 16.6 7.7 15.3 7.3 14.2 6.9 13.2 6.5 12.2 6.3 11.4 6 10.5 5.7 9.8 5.5 9 5.2 8.4 5.1 7.8 4.9 7.2 4.7 6.6 4.6 6.1 4.4 5.6 4.3 5.1 4.2 4.6 4.1 4.2 4 3.8 3.9 3.3 3.8 3 3.8 2.5 3.7 2.2 3.6 1.8 3.6 1.4 3.5 1.1 3.5 .7 3.5 .3 3.5-.1 3.4-.4 3.5-.8 3.4-1.1 3.5-1.5 3.4-2 3.5-2.3 3.5-2.7 3.5-3.2 3.6-3.6 3.6-4 3.7-4.5 3.7-5 3.9-5.5 3.9-6.1 4-6.6 4.1-7.3 4.2-7.9 4.4-8.6 4.5-9.4 4.7-10.2 4.9-11 5.1-12 5.4-13 5.6-14.2 5.9-15.3 6.2-16.8 6.6-18.2 7.1-19.9 7.5-21.8 8-23.9 8.7-26.3 9.3-28.9 10.2-32 11.1-35.6 12.2-39.7 13.5-44.5 15.1-50.1 16.8-56.9 2.5-8.4M104.1 92l10.7 25.6 20.7 49.2 18.7 44.1 16.9 39.7 15.5 35.9 14.2 32.6 13.1 29.7 12.1 27.2 11.2 24.9 10.5 22.8 9.7 21.1 9.2 19.3 8.6 18 8 16.5 7.7 15.4 7.2 14.2 6.9 13.2 6.5 12.2 6.2 11.4 6 10.5 5.6 9.8 5.5 9 5.2 8.4 5.1 7.8 4.8 7.2 4.7 6.6 4.6 6.1 4.4 5.6 4.3 5.1 4.2 4.7 4 4.2 4 3.7 3.9 3.4 3.8 3 3.7 2.5 3.7 2.2 3.6 1.8 3.6 1.4 3.5 1.1 3.5 .6 3.5 .4 3.5-.1 3.4-.4 3.4-.8 3.5-1.2 3.4-1.5 3.4-1.9 3.5-2.4 3.5-2.7 3.5-3.2 3.6-3.6 3.6-4 3.7-4.5 3.7-5.1 3.8-5.5 3.9-6.1 4-6.6 4.2-7.3 4.2-8 4.4-8.6 4.5-9.4 4.7-10.2 4.9-11 5-12.1 5.4-13 5.6-14.2 5.9-15.3 6.2-16.8 6.6-18.3 7-19.9 7.5-21.8 8-23.9 8.6-26.2 9.4-28.9 10.1-32 11.1-35.6 12.1-39.6 13.4-44.3 15-50.1 16.7-56.7 1.6-5.3M108.3 92l9.4 22.8 20.5 49.1 18.5 43.9 16.8 39.7 15.3 35.8 14.1 32.6 12.9 29.7 12 27.1 11.1 24.8 10.4 22.9 9.7 21 9.1 19.4 8.5 17.9 8 16.6 7.6 15.3 7.2 14.3 6.8 13.2 6.5 12.2 6.1 11.4 5.9 10.5 5.7 9.8 5.4 9.1 5.2 8.4 5 7.8 4.9 7.2 4.7 6.6 4.5 6.1 4.4 5.6 4.2 5.1 4.2 4.7 4 4.2 4 3.7 3.9 3.4 3.8 3 3.7 2.5 3.7 2.2 3.6 1.8 3.5 1.4 3.5 1.1 3.5 .6 3.5 .4 3.4-.1 3.5-.4 3.4-.8 3.4-1.2 3.4-1.5 3.5-2 3.4-2.3 3.5-2.8 3.5-3.1 3.6-3.6 3.6-4.1 3.7-4.5 3.7-5.1 3.8-5.5 3.9-6.1 4-6.7 4.1-7.3 4.2-8 4.4-8.6 4.5-9.4 4.7-10.3 4.9-11 5.1-12.1 5.3-13 5.6-14.2 5.8-15.4 6.2-16.8 6.6-18.3 7-19.9 7.5-21.8 8-23.9 8.6-26.2 9.3-28.9 10.1-32 11-35.5 12.1-39.5 13.3-44.3 14.9-49.8 16.6-56.6 .7-2.3M112.4 92l8.3 20.1 20.2 48.9 18.3 43.8 16.6 39.6 15.2 35.8 13.9 32.5 12.8 29.6 11.9 27.1 11.1 24.9 10.2 22.8 9.6 21 9 19.4 8.5 17.9 7.9 16.6 7.6 15.3 7.1 14.3 6.8 13.2 6.4 12.2 6.2 11.4 5.8 10.5 5.6 9.8 5.4 9.1 5.2 8.4 5 7.8 4.8 7.2 4.7 6.7 4.5 6.1 4.3 5.6 4.3 5.1 4.1 4.7 4.1 4.2 3.9 3.8 3.9 3.3 3.7 3 3.7 2.5 3.7 2.2 3.6 1.8 3.5 1.4 3.5 1.1 3.5 .7 3.5 .3 3.4-.1 3.4-.4 3.4-.8 3.5-1.2 3.4-1.5 3.4-2 3.5-2.3 3.4-2.8 3.6-3.2 3.5-3.6 3.6-4.1 3.7-4.5 3.7-5.1 3.8-5.6 3.9-6.1 4-6.7 4.1-7.3 4.2-8 4.3-8.7 4.5-9.4 4.7-10.2 4.9-11.1 5.1-12.1 5.3-13 5.5-14.2 5.9-15.5 6.2-16.7 6.6-18.3 6.9-20 7.5-21.8 7.9-23.9 8.6-26.2 9.3-28.9 10-31.9 11-35.4 12-39.5 13.3-44.2 14.8-49.7 16.3-55.7M116.5 92l7.1 17.4 20 48.7 18 43.8 16.5 39.4 15 35.7 13.8 32.5 12.7 29.6 11.8 27.1 10.9 24.8 10.2 22.8 9.6 21 8.9 19.4 8.4 17.9 7.9 16.6 7.5 15.3 7 14.3 6.8 13.2 6.4 12.3 6.1 11.3 5.8 10.6 5.6 9.8 5.3 9.1 5.2 8.4 5 7.8 4.7 7.2 4.7 6.7 4.5 6.1 4.3 5.6 4.2 5.1 4.1 4.7 4.1 4.2 3.9 3.8 3.8 3.4 3.8 2.9 3.7 2.6 3.6 2.2 3.6 1.8 3.5 1.4 3.5 1 3.5 .7 3.5 .3 3.4 0 3.4-.5 3.4-.8 3.4-1.2 3.4-1.5 3.4-2 3.5-2.4 3.5-2.7 3.5-3.2 3.5-3.7 3.6-4 3.7-4.6 3.7-5.1 3.8-5.6 3.8-6.1 4-6.7 4.1-7.4 4.2-7.9 4.4-8.7 4.5-9.5 4.6-10.2 4.9-11.2 5.1-12 5.3-13.1 5.5-14.2 5.9-15.5 6.1-16.8 6.6-18.3 6.9-19.9 7.5-21.8 7.9-23.9 8.5-26.2 9.3-28.9 10-31.9 10.9-35.4 12-39.4 13.2-44 14.7-49.6 15.4-52.6M120.5 92l5.9 14.7 19.8 48.6 17.9 43.6 16.3 39.4 14.8 35.6 13.7 32.4 12.6 29.6 11.7 27 10.8 24.9 10.1 22.8 9.5 21 8.8 19.3 8.4 18 7.8 16.5 7.4 15.4 7.1 14.2 6.6 13.2 6.4 12.3 6.1 11.4 5.8 10.6 5.5 9.8 5.3 9.1 5.2 8.4 4.9 7.8 4.8 7.3 4.6 6.6 4.4 6.1 4.4 5.7 4.2 5.1 4.1 4.7 4 4.2 3.9 3.8 3.8 3.3 3.7 3 3.7 2.6 3.7 2.1 3.5 1.8 3.6 1.4 3.4 1.1 3.5 .7 3.4 .3 3.4-.1 3.4-.4 3.4-.8 3.4-1.2 3.4-1.6 3.5-2 3.4-2.3 3.5-2.8 3.5-3.2 3.5-3.7 3.6-4.1 3.6-4.6 3.7-5 3.8-5.6 3.9-6.2 4-6.7 4.1-7.4 4.2-8 4.3-8.7 4.5-9.5 4.7-10.2 4.8-11.2 5.1-12.1 5.2-13.1 5.6-14.2 5.8-15.5 6.2-16.8 6.5-18.3 7-19.9 7.4-21.9 7.9-23.8 8.5-26.2 9.2-28.9 10-31.8 10.8-35.4 12-39.3 13.1-44 14.6-49.4 14.4-49.5M124.4 92l4.9 12.1 19.5 48.4 17.7 43.5 16.1 39.3 14.7 35.6 13.6 32.3 12.5 29.5 11.5 27.1 10.8 24.7 10 22.8 9.4 21 8.8 19.4 8.2 17.9 7.8 16.6 7.4 15.4 7 14.2 6.6 13.2 6.3 12.3 6.1 11.4 5.7 10.6 5.5 9.8 5.3 9.1 5.1 8.5 4.9 7.8 4.8 7.2 4.6 6.7 4.4 6.1 4.3 5.6 4.2 5.2 4.1 4.6 4 4.3 3.9 3.7 3.8 3.4 3.7 3 3.7 2.5 3.6 2.2 3.5 1.8 3.6 1.4 3.4 1.1 3.5 .6 3.4 .3 3.4 0 3.4-.5 3.4-.8 3.4-1.2 3.4-1.6 3.4-1.9 3.4-2.4 3.5-2.8 3.5-3.2 3.5-3.7 3.6-4.1 3.6-4.6 3.7-5.1 3.8-5.6 3.9-6.2 3.9-6.7 4.1-7.4 4.2-8 4.3-8.7 4.5-9.5 4.7-10.3 4.8-11.2 5-12.1 5.3-13.1 5.6-14.3 5.8-15.4 6.1-16.9 6.5-18.3 7-19.9 7.3-21.8 7.9-23.9 8.5-26.2 9.2-28.8 9.9-31.9 10.8-35.2 11.9-39.3 13.1-43.8 14.5-49.3 13.5-46.5M128.3 92l3.8 9.5 19.3 48.3 17.5 43.3 15.9 39.2 14.6 35.5 13.4 32.3 12.4 29.5 11.5 27 10.6 24.8 10 22.7 9.3 21 8.7 19.4 8.2 17.9 7.7 16.6 7.3 15.4 7 14.2 6.6 13.2 6.3 12.3 5.9 11.4 5.8 10.6 5.5 9.8 5.2 9.1 5.1 8.5 4.9 7.8 4.7 7.3 4.5 6.6 4.5 6.2 4.3 5.6 4.1 5.1 4.1 4.7 4 4.2 3.8 3.8 3.8 3.4 3.7 3 3.7 2.5 3.6 2.2 3.5 1.8 3.5 1.4 3.5 1.1 3.5 .6 3.4 .3 3.4 0 3.3-.5 3.4-.8 3.4-1.2 3.4-1.6 3.4-2 3.4-2.4 3.5-2.8 3.4-3.2 3.6-3.7 3.5-4.1 3.7-4.6 3.7-5.1 3.8-5.6 3.8-6.2 4-6.8 4-7.4 4.2-8 4.4-8.8 4.4-9.5 4.7-10.3 4.8-11.1 5-12.2 5.3-13.1 5.5-14.3 5.8-15.5 6.2-16.8 6.5-18.3 6.9-20 7.3-21.8 7.9-23.9 8.5-26.2 9.1-28.8 9.9-31.7 10.8-35.3 11.8-39.1 13-43.8 14.4-49.1 12.6-43.5M132.1 92l2.7 6.9 19.1 48.1 17.4 43.3 15.7 39.1 14.5 35.4 13.3 32.3 12.2 29.4 11.4 27 10.6 24.7 9.8 22.8 9.2 20.9 8.7 19.4 8.1 17.9 7.7 16.6 7.3 15.4 6.9 14.2 6.5 13.3 6.3 12.2 5.9 11.5 5.7 10.5 5.5 9.9 5.2 9.1 5 8.5 4.9 7.8 4.7 7.2 4.5 6.7 4.4 6.2 4.3 5.6 4.1 5.1 4.1 4.7 3.9 4.3 3.9 3.8 3.8 3.3 3.7 3 3.6 2.6 3.6 2.1 3.5 1.8 3.5 1.5 3.5 1 3.4 .7 3.4 .3 3.4-.1 3.4-.5 3.4-.8 3.3-1.2 3.4-1.6 3.4-2 3.4-2.4 3.5-2.8 3.4-3.2 3.6-3.7 3.5-4.2 3.6-4.6 3.7-5.1 3.8-5.7 3.9-6.2 3.9-6.7 4.1-7.4 4.2-8.1 4.3-8.8 4.4-9.5 4.7-10.3 4.8-11.2 5-12.1 5.3-13.2 5.5-14.3 5.8-15.5 6.1-16.8 6.5-18.3 6.9-20 7.3-21.8 7.8-23.9 8.5-26.2 9.1-28.7 9.8-31.8 10.8-35.2 11.7-39 13-43.7 14.3-49 11.7-40.5M135.9 92l1.7 4.3 18.9 48 17.1 43.2 15.6 39 14.3 35.3 13.2 32.2 12.1 29.4 11.3 27 10.5 24.7 9.8 22.7 9.1 21 8.6 19.3 8.1 18 7.6 16.5 7.2 15.4 6.9 14.3 6.5 13.2 6.2 12.3 5.9 11.4 5.6 10.6 5.5 9.9 5.2 9.1 5 8.5 4.8 7.8 4.7 7.2 4.5 6.7 4.4 6.2 4.2 5.6 4.2 5.2 4 4.7 3.9 4.2 3.9 3.8 3.7 3.4 3.7 2.9 3.6 2.6 3.6 2.2 3.5 1.8 3.5 1.4 3.5 1 3.4 .7 3.4 .3 3.4-.1 3.3-.4 3.4-.9 3.4-1.2 3.3-1.6 3.4-2 3.4-2.4 3.5-2.8 3.4-3.3 3.5-3.7 3.6-4.1 3.6-4.7 3.7-5.1 3.8-5.6 3.8-6.3 4-6.8 4-7.4 4.2-8 4.3-8.8 4.4-9.6 4.7-10.3 4.8-11.2 5-12.2 5.2-13.1 5.6-14.3 5.7-15.5 6.1-16.9 6.5-18.3 6.9-20 7.3-21.8 7.8-23.9 8.4-26.1 9.1-28.8 9.8-31.7 10.7-35.1 11.7-39 12.9-43.6 14.2-48.8 10.9-37.6M139.6 92l.7 1.8 18.7 47.8 16.9 43.1 15.5 38.9 14.2 35.3 13 32.1 12 29.4 11.2 26.9 10.4 24.7 9.7 22.7 9.1 21 8.5 19.3 8 17.9 7.6 16.6 7.2 15.4 6.8 14.2 6.4 13.3 6.2 12.3 5.9 11.4 5.6 10.6 5.4 9.9 5.1 9.1 5 8.5 4.8 7.8 4.7 7.3 4.5 6.7 4.3 6.1 4.3 5.7 4.1 5.1 4 4.7 3.9 4.2 3.8 3.8 3.8 3.4 3.7 3 3.6 2.6 3.5 2.2 3.5 1.7 3.5 1.5 3.4 1 3.5 .7 3.3 .2 3.4 0 3.4-.5 3.3-.8 3.4-1.3 3.3-1.6 3.4-2 3.4-2.4 3.4-2.8 3.5-3.3 3.5-3.7 3.6-4.2 3.6-4.6 3.7-5.1 3.7-5.7 3.9-6.2 3.9-6.9 4-7.4 4.2-8.1 4.3-8.8 4.5-9.5 4.6-10.4 4.8-11.2 5-12.2 5.2-13.2 5.5-14.3 5.8-15.5 6.1-16.9 6.4-18.3 6.9-20 7.3-21.8 7.8-23.9 8.3-26.1 9.1-28.7 9.7-31.7 10.7-35 11.6-39 12.8-43.4 14.2-48.7 10-34.7M143.2 92l18.3 47 16.7 42.9 15.3 38.8 14.1 35.3 12.9 32 11.9 29.4 11.1 26.8 10.3 24.7 9.6 22.7 9 21 8.5 19.3 7.9 17.9 7.6 16.6 7.1 15.4 6.7 14.2 6.4 13.3 6.2 12.3 5.8 11.4 5.6 10.6 5.4 9.9 5.1 9.1 5 8.5 4.7 7.8 4.7 7.3 4.4 6.7 4.4 6.2 4.2 5.6 4.1 5.2 4 4.7 3.9 4.2 3.8 3.8 3.7 3.4 3.7 3 3.6 2.5 3.5 2.2 3.5 1.8 3.5 1.4 3.4 1.1 3.4 .6 3.4 .3 3.3-.1 3.4-.4 3.3-.9 3.4-1.2 3.3-1.6 3.4-2 3.4-2.5 3.4-2.8 3.5-3.3 3.5-3.7 3.5-4.2 3.6-4.6 3.7-5.2 3.8-5.7 3.8-6.2 3.9-6.8 4.1-7.5 4.1-8.1 4.3-8.8 4.5-9.6 4.6-10.3 4.8-11.3 5-12.2 5.2-13.2 5.5-14.3 5.7-15.5 6.1-16.9 6.4-18.4 6.9-19.9 7.2-21.8 7.8-23.9 8.3-26.1 9-28.7 9.8-31.6 10.6-35 11.6-38.9 12.7-43.3 14.1-48.6 9.2-31.8M146.8 92l17.1 44.4 16.6 42.8 15.2 38.7 13.9 35.2 12.7 32 11.9 29.3 10.9 26.8 10.3 24.6 9.5 22.7 8.9 21 8.4 19.3 7.9 17.9 7.5 16.6 7.1 15.4 6.7 14.2 6.4 13.3 6 12.3 5.9 11.4 5.5 10.6 5.3 9.9 5.2 9.2 4.9 8.4 4.8 7.9 4.5 7.3 4.5 6.7 4.3 6.1 4.2 5.7 4.1 5.2 4 4.7 3.8 4.2 3.8 3.8 3.7 3.4 3.7 3 3.6 2.5 3.5 2.2 3.5 1.8 3.5 1.4 3.4 1.1 3.4 .6 3.3 .3 3.4-.1 3.3-.5 3.4-.8 3.3-1.2 3.3-1.7 3.4-2 3.4-2.4 3.4-2.9 3.5-3.3 3.4-3.7 3.6-4.2 3.6-4.6 3.7-5.2 3.7-5.7 3.8-6.3 3.9-6.8 4.1-7.5 4.1-8.1 4.3-8.8 4.5-9.6 4.6-10.4 4.7-11.2 5-12.2 5.2-13.2 5.5-14.4 5.8-15.5 6-16.9 6.4-18.4 6.8-20 7.3-21.8 7.7-23.8 8.4-26.1 8.9-28.7 9.7-31.6 10.6-34.9 11.5-38.8 12.7-43.2 14-48.4 8.3-29M150.4 92l15.9 41.8 16.5 42.7 15 38.6 13.7 35.1 12.7 32 11.7 29.2 10.9 26.8 10.1 24.6 9.5 22.7 8.9 20.9 8.3 19.4 7.8 17.8 7.5 16.6 7 15.4 6.6 14.3 6.4 13.2 6 12.3 5.8 11.5 5.5 10.6 5.3 9.9 5.1 9.1 4.9 8.5 4.7 7.9 4.6 7.2 4.4 6.8 4.3 6.1 4.2 5.7 4.1 5.2 3.9 4.7 3.9 4.2 3.8 3.8 3.7 3.4 3.6 3 3.6 2.6 3.5 2.1 3.5 1.8 3.4 1.4 3.4 1.1 3.4 .6 3.4 .3 3.3-.1 3.3-.5 3.4-.8 3.3-1.3 3.3-1.6 3.4-2 3.4-2.5 3.4-2.8 3.4-3.3 3.5-3.7 3.5-4.2 3.6-4.7 3.7-5.2 3.7-5.7 3.9-6.3 3.9-6.8 4-7.5 4.1-8.1 4.3-8.9 4.4-9.6 4.6-10.4 4.8-11.2 5-12.3 5.2-13.2 5.5-14.3 5.7-15.6 6-16.9 6.4-18.4 6.8-19.9 7.3-21.8 7.7-23.9 8.3-26 8.9-28.7 9.7-31.6 10.5-34.8 11.5-38.7 12.6-43.1 13.9-48.3 7.5-26.2M153.9 92l14.8 39.2 16.3 42.6 14.8 38.5 13.7 35 12.5 32 11.7 29.2 10.7 26.7 10.1 24.6 9.4 22.7 8.8 20.9 8.2 19.3 7.8 17.9 7.4 16.6 7 15.3 6.6 14.3 6.3 13.3 6 12.3 5.7 11.4 5.5 10.7 5.3 9.8 5.1 9.2 4.8 8.5 4.7 7.9 4.6 7.2 4.4 6.8 4.3 6.1 4.1 5.7 4.1 5.2 3.9 4.7 3.9 4.2 3.7 3.8 3.7 3.4 3.6 3 3.6 2.6 3.5 2.2 3.5 1.8 3.4 1.4 3.4 1 3.4 .7 3.3 .2 3.3-.1 3.4-.5 3.3-.8 3.3-1.3 3.3-1.6 3.4-2 3.4-2.5 3.4-2.8 3.4-3.3 3.5-3.8 3.5-4.2 3.6-4.7 3.6-5.2 3.8-5.7 3.8-6.3 3.9-6.9 4-7.4 4.1-8.2 4.3-8.8 4.4-9.7 4.6-10.4 4.8-11.3 5-12.2 5.2-13.2 5.4-14.4 5.7-15.5 6.1-16.9 6.3-18.4 6.8-20 7.2-21.8 7.7-23.8 8.3-26.1 8.9-28.6 9.6-31.5 10.5-34.8 11.4-38.6 12.6-43.1 13.9-48.1 6.6-23.4M157.3 92l13.8 36.7 16.1 42.4 14.7 38.5 13.5 34.9 12.5 31.9 11.5 29.1 10.7 26.8 9.9 24.5 9.3 22.7 8.8 20.9 8.2 19.3 7.7 17.9 7.3 16.5 6.9 15.4 6.6 14.3 6.3 13.2 5.9 12.4 5.8 11.4 5.4 10.7 5.3 9.8 5 9.2 4.8 8.5 4.7 7.9 4.6 7.3 4.3 6.7 4.3 6.2 4.1 5.6 4 5.2 4 4.7 3.8 4.3 3.8 3.8 3.6 3.4 3.6 3 3.6 2.5 3.5 2.2 3.5 1.8 3.4 1.4 3.4 1 3.3 .7 3.3 .3 3.4-.1 3.3-.5 3.3-.9 3.3-1.2 3.3-1.7 3.4-2 3.3-2.5 3.4-2.9 3.5-3.3 3.4-3.7 3.5-4.2 3.6-4.7 3.7-5.2 3.7-5.8 3.8-6.3 3.9-6.9 4-7.5 4.2-8.1 4.2-8.9 4.4-9.6 4.6-10.4 4.8-11.3 4.9-12.3 5.2-13.2 5.4-14.4 5.7-15.6 6.1-16.9 6.3-18.3 6.8-20 7.2-21.8 7.7-23.8 8.2-26.1 8.9-28.6 9.6-31.4 10.4-34.8 11.4-38.5 12.5-42.9 13.8-48.1 5.8-20.6M160.7 92l12.8 34.2 15.9 42.3 14.6 38.4 13.3 34.8 12.4 31.8 11.4 29.1 10.6 26.7 9.9 24.6 9.2 22.6 8.7 20.9 8.1 19.3 7.7 17.9 7.2 16.5 6.9 15.4 6.6 14.3 6.2 13.2 5.9 12.4 5.7 11.4 5.4 10.7 5.2 9.9 5 9.1 4.8 8.5 4.7 7.9 4.5 7.3 4.4 6.7 4.2 6.2 4.1 5.7 4 5.2 3.9 4.7 3.9 4.2 3.7 3.9 3.7 3.4 3.6 2.9 3.5 2.6 3.5 2.2 3.4 1.8 3.4 1.4 3.4 1 3.3 .7 3.4 .2 3.3-.1 3.3-.5 3.3-.8 3.3-1.3 3.3-1.6 3.4-2.1 3.3-2.5 3.4-2.8 3.4-3.4 3.5-3.7 3.5-4.3 3.6-4.7 3.6-5.2 3.7-5.7 3.8-6.3 3.9-6.9 4-7.5 4.2-8.2 4.2-8.9 4.4-9.6 4.6-10.5 4.7-11.3 5-12.2 5.1-13.3 5.5-14.4 5.7-15.6 6-16.9 6.3-18.4 6.8-19.9 7.1-21.8 7.7-23.8 8.2-26 8.8-28.6 9.6-31.4 10.4-34.7 11.3-38.5 12.4-42.8 13.8-47.9 5.1-17.9M164.1 92l11.7 31.7 15.8 42.2 14.4 38.3 13.2 34.8 12.2 31.7 11.4 29.1 10.5 26.6 9.8 24.6 9.1 22.6 8.6 20.8 8.1 19.3 7.6 17.9 7.3 16.6 6.8 15.3 6.5 14.3 6.2 13.3 5.8 12.3 5.7 11.5 5.4 10.6 5.2 9.9 4.9 9.2 4.8 8.5 4.7 7.9 4.5 7.3 4.3 6.7 4.2 6.2 4.1 5.7 4 5.1 3.9 4.8 3.8 4.2 3.7 3.8 3.7 3.4 3.6 3 3.5 2.6 3.5 2.2 3.4 1.8 3.4 1.4 3.3 1 3.4 .6 3.3 .3 3.3-.1 3.3-.5 3.3-.9 3.3-1.2 3.3-1.7 3.3-2.1 3.4-2.4 3.4-2.9 3.4-3.3 3.4-3.8 3.5-4.3 3.6-4.7 3.6-5.2 3.7-5.8 3.8-6.3 3.9-6.9 4-7.5 4.1-8.2 4.3-8.9 4.4-9.6 4.6-10.5 4.7-11.3 4.9-12.3 5.2-13.3 5.4-14.3 5.7-15.6 6-17 6.3-18.3 6.7-20 7.2-21.8 7.6-23.8 8.2-26 8.8-28.5 9.5-31.4 10.4-34.6 11.2-38.4 12.4-42.7 13.7-47.7 4.3-15.3M167.4 92l10.7 29.2 15.6 42.1 14.3 38.2 13.1 34.7 12.1 31.7 11.2 29 10.5 26.7 9.7 24.5 9.1 22.5 8.5 20.9 8 19.3 7.6 17.8 7.2 16.6 6.7 15.4 6.5 14.2 6.1 13.3 5.9 12.3 5.6 11.5 5.4 10.6 5.1 9.9 5 9.2 4.7 8.5 4.7 7.9 4.4 7.3 4.3 6.8 4.2 6.2 4.1 5.6 4 5.2 3.8 4.7 3.8 4.3 3.7 3.8 3.7 3.4 3.6 3 3.5 2.6 3.4 2.2 3.5 1.8 3.3 1.4 3.4 1 3.3 .6 3.3 .3 3.3-.1 3.3-.5 3.3-.9 3.3-1.3 3.3-1.6 3.3-2.1 3.3-2.5 3.4-2.9 3.4-3.3 3.5-3.8 3.5-4.2 3.5-4.8 3.7-5.2 3.7-5.8 3.8-6.3 3.8-6.9 4-7.6 4.1-8.2 4.3-8.9 4.4-9.6 4.5-10.5 4.8-11.3 4.9-12.3 5.1-13.3 5.4-14.4 5.7-15.6 6-16.9 6.3-18.4 6.7-20 7.1-21.7 7.6-23.8 8.2-26 8.8-28.5 9.5-31.3 10.2-34.6 11.3-38.3 12.3-42.6 13.6-47.6 3.5-12.6M170.6 92l9.8 26.8 15.4 42 14.2 38 13 34.7 12 31.6 11.1 29 10.3 26.6 9.7 24.5 9 22.5 8.5 20.9 7.9 19.3 7.5 17.8 7.2 16.6 6.7 15.3 6.4 14.3 6.1 13.3 5.8 12.3 5.6 11.5 5.3 10.6 5.1 9.9 5 9.2 4.7 8.5 4.6 7.9 4.5 7.3 4.3 6.8 4.1 6.2 4.1 5.6 3.9 5.2 3.9 4.8 3.8 4.2 3.7 3.9 3.6 3.4 3.5 2.9 3.5 2.6 3.5 2.2 3.4 1.8 3.4 1.4 3.3 1 3.3 .6 3.3 .3 3.3-.1 3.3-.5 3.3-.9 3.3-1.3 3.3-1.6 3.3-2.1 3.3-2.5 3.4-2.9 3.4-3.3 3.4-3.8 3.5-4.3 3.6-4.7 3.6-5.3 3.7-5.8 3.8-6.3 3.8-6.9 4-7.6 4.1-8.2 4.3-8.9 4.3-9.7 4.6-10.5 4.7-11.3 4.9-12.3 5.2-13.3 5.4-14.4 5.6-15.6 6-16.9 6.3-18.4 6.7-20 7.1-21.8 7.6-23.7 8.1-26 8.7-28.4 9.5-31.3 10.2-34.6 11.2-38.2 12.3-42.5 13.5-47.4 2.8-10M173.8 92l8.8 24.3 15.3 41.9 14 38 12.9 34.6 11.9 31.6 11 28.9 10.3 26.6 9.5 24.4 9 22.6 8.4 20.8 7.9 19.2 7.5 17.9 7 16.5 6.7 15.4 6.4 14.3 6.1 13.3 5.7 12.3 5.6 11.4 5.3 10.7 5.1 9.9 4.9 9.2 4.7 8.5 4.6 7.9 4.4 7.3 4.3 6.8 4.1 6.2 4.1 5.7 3.9 5.2 3.8 4.7 3.8 4.3 3.7 3.8 3.6 3.4 3.5 3 3.5 2.6 3.5 2.1 3.4 1.8 3.3 1.4 3.4 1 3.3 .7 3.3 .2 3.2-.1 3.3-.5 3.3-.9 3.3-1.3 3.2-1.6 3.3-2.1 3.4-2.5 3.3-2.9 3.4-3.4 3.5-3.8 3.4-4.2 3.6-4.8 3.6-5.3 3.7-5.8 3.8-6.3 3.8-6.9 4-7.6 4.1-8.2 4.2-9 4.4-9.6 4.5-10.5 4.8-11.4 4.9-12.3 5.1-13.3 5.4-14.4 5.6-15.6 6-16.9 6.3-18.4 6.6-20 7.1-21.8 7.6-23.7 8.1-25.9 8.7-28.5 9.4-31.2 10.2-34.5 11.2-38.1 12.1-42.4 13.5-47.3 2.1-7.4M177 92l7.9 22 15.1 41.7 13.9 37.9 12.7 34.5 11.8 31.6 11 28.8 10.1 26.6 9.5 24.4 8.9 22.5 8.3 20.8 7.9 19.3 7.4 17.8 7 16.6 6.7 15.3 6.3 14.3 6 13.3 5.8 12.3 5.5 11.5 5.2 10.6 5.1 9.9 4.9 9.2 4.7 8.5 4.5 8 4.4 7.3 4.3 6.7 4.1 6.2 4 5.7 4 5.2 3.8 4.7 3.7 4.3 3.7 3.8 3.6 3.4 3.5 3 3.5 2.6 3.4 2.2 3.4 1.8 3.4 1.4 3.3 1 3.3 .6 3.3 .3 3.2-.1 3.3-.6 3.3-.8 3.2-1.3 3.3-1.7 3.3-2.1 3.3-2.5 3.4-2.9 3.4-3.4 3.4-3.8 3.5-4.3 3.5-4.7 3.6-5.3 3.7-5.8 3.8-6.4 3.8-6.9 4-7.6 4.1-8.2 4.2-9 4.4-9.7 4.5-10.5 4.7-11.3 4.9-12.3 5.1-13.4 5.4-14.4 5.6-15.6 6-16.9 6.2-18.4 6.7-20 7.1-21.7 7.5-23.7 8.1-26 8.7-28.4 9.3-31.2 10.2-34.4 11.1-38 12.1-42.3 13.4-47.1 1.4-4.9M180.1 92l7 19.6 15 41.6 13.7 37.8 12.7 34.5 11.6 31.5 10.9 28.8 10.1 26.5 9.4 24.4 8.8 22.5 8.3 20.8 7.8 19.2 7.3 17.8 7 16.6 6.6 15.3 6.3 14.3 6 13.3 5.7 12.3 5.4 11.5 5.3 10.6 5 10 4.9 9.2 4.7 8.5 4.5 7.9 4.3 7.3 4.3 6.8 4.1 6.2 4 5.7 3.9 5.2 3.8 4.7 3.8 4.3 3.6 3.8 3.6 3.4 3.5 3 3.5 2.6 3.4 2.2 3.4 1.7 3.3 1.4 3.3 1.1 3.3 .6 3.3 .2 3.2-.1 3.3-.5 3.2-.9 3.3-1.3 3.3-1.7 3.3-2.1 3.3-2.5 3.3-2.9 3.4-3.4 3.4-3.8 3.5-4.3 3.5-4.8 3.6-5.2 3.7-5.8 3.8-6.4 3.8-7 4-7.6 4.1-8.2 4.2-9 4.3-9.7 4.6-10.5 4.7-11.4 4.9-12.3 5.1-13.3 5.3-14.4 5.6-15.7 6-16.9 6.2-18.4 6.6-19.9 7.1-21.8 7.5-23.7 8.1-25.9 8.6-28.3 9.4-31.2 10.1-34.3 11-38 12.1-42.2 13.3-47 .7-2.3M183.2 92l6.1 17.2 14.8 41.6 13.6 37.7 12.6 34.4 11.5 31.4 10.8 28.8 10 26.4 9.3 24.4 8.8 22.5 8.2 20.7 7.7 19.3 7.3 17.8 6.9 16.5 6.6 15.4 6.2 14.2 6 13.3 5.7 12.3 5.4 11.5 5.2 10.7 5 9.9 4.9 9.2 4.6 8.5 4.5 8 4.4 7.3 4.2 6.7 4.1 6.2 4 5.7 3.9 5.2 3.8 4.8 3.7 4.3 3.6 3.8 3.6 3.4 3.5 3 3.4 2.6 3.4 2.1 3.4 1.8 3.3 1.4 3.3 1 3.3 .7 3.3 .2 3.2-.1 3.3-.5 3.2-.9 3.3-1.3 3.2-1.7 3.3-2.1 3.3-2.5 3.4-3 3.3-3.3 3.5-3.9 3.4-4.3 3.6-4.8 3.5-5.2 3.7-5.9 3.8-6.4 3.8-6.9 4-7.6 4.1-8.3 4.2-8.9 4.3-9.8 4.5-10.5 4.7-11.4 4.9-12.3 5.1-13.3 5.3-14.5 5.6-15.6 5.9-16.9 6.3-18.4 6.6-20 7-21.7 7.5-23.7 8-25.8 8.7-28.4 9.3-31.1 10.1-34.3 11-37.9 12-42 13.2-46.7M186.2 92l5.3 14.9 14.7 41.4 13.4 37.7 12.4 34.3 11.5 31.3 10.7 28.8 9.9 26.4 9.3 24.3 8.6 22.5 8.2 20.7 7.7 19.2 7.2 17.9 6.9 16.5 6.5 15.3 6.2 14.3 5.9 13.3 5.7 12.3 5.4 11.5 5.2 10.7 5 9.9 4.8 9.2 4.6 8.5 4.5 7.9 4.3 7.4 4.2 6.7 4.1 6.2 3.9 5.7 3.9 5.2 3.8 4.8 3.7 4.2 3.6 3.9 3.6 3.4 3.5 3 3.4 2.6 3.4 2.1 3.3 1.8 3.4 1.4 3.3 1 3.2 .7 3.3 .2 3.2-.1 3.3-.5 3.2-1 3.3-1.3 3.2-1.7 3.3-2.1 3.3-2.5 3.3-2.9 3.4-3.4 3.4-3.8 3.4-4.3 3.6-4.8 3.6-5.3 3.6-5.9 3.8-6.4 3.8-6.9 4-7.7 4-8.2 4.2-9 4.4-9.7 4.5-10.6 4.6-11.4 4.9-12.3 5.1-13.3 5.3-14.5 5.6-15.6 5.9-16.9 6.3-18.4 6.5-20 7.1-21.7 7.4-23.7 8-25.8 8.6-28.3 9.3-31.1 10-34.2 11-37.8 12-41.9 12.4-44.1M189.2 92l4.4 12.6 14.6 41.3 13.3 37.6 12.3 34.2 11.4 31.3 10.6 28.7 9.8 26.4 9.2 24.3 8.6 22.4 8.1 20.7 7.6 19.2 7.2 17.8 6.8 16.6 6.5 15.3 6.2 14.3 5.9 13.3 5.6 12.3 5.3 11.5 5.2 10.6 5 10 4.7 9.2 4.6 8.5 4.5 7.9 4.3 7.4 4.2 6.7 4 6.2 4 5.7 3.8 5.2 3.8 4.8 3.7 4.3 3.6 3.8 3.5 3.4 3.5 3 3.5 2.6 3.3 2.2 3.4 1.7 3.3 1.4 3.3 1.1 3.2 .6 3.3 .2 3.2-.1 3.2-.5 3.3-1 3.2-1.3 3.3-1.7 3.2-2.1 3.3-2.5 3.3-3 3.4-3.3 3.4-3.9 3.5-4.3 3.5-4.8 3.6-5.3 3.6-5.9 3.8-6.4 3.8-7 3.9-7.6 4.1-8.3 4.2-8.9 4.3-9.8 4.5-10.5 4.7-11.4 4.8-12.4 5.1-13.3 5.3-14.4 5.6-15.7 5.9-16.9 6.2-18.4 6.6-20 7-21.7 7.4-23.6 8-25.8 8.6-28.3 9.2-31 10-34.2 10.9-37.7 11.9-41.8 11.7-41.5M192.2 92l3.5 10.3 14.5 41.2 13.2 37.5 12.2 34.1 11.2 31.3 10.5 28.6 9.8 26.4 9.1 24.2 8.5 22.5 8.1 20.7 7.5 19.2 7.2 17.8 6.8 16.5 6.4 15.3 6.1 14.3 5.9 13.2 5.6 12.4 5.3 11.5 5.1 10.6 5 10 4.7 9.2 4.6 8.5 4.4 7.9 4.3 7.4 4.2 6.7 4 6.2 3.9 5.8 3.9 5.2 3.7 4.7 3.7 4.3 3.6 3.8 3.5 3.4 3.5 3 3.4 2.6 3.4 2.2 3.3 1.8 3.3 1.4 3.3 1 3.2 .6 3.3 .2 3.2-.1 3.2-.5 3.2-.9 3.3-1.4 3.2-1.7 3.3-2.1 3.3-2.5 3.3-3 3.3-3.4 3.4-3.8 3.5-4.3 3.5-4.8 3.6-5.4 3.6-5.8 3.7-6.4 3.9-7 3.9-7.7 4.1-8.3 4.1-9 4.4-9.7 4.5-10.5 4.6-11.5 4.9-12.3 5-13.4 5.4-14.4 5.5-15.6 5.9-17 6.2-18.4 6.5-19.9 7-21.7 7.4-23.6 8-25.8 8.5-28.3 9.2-30.9 10-34.1 10.8-37.6 11.9-41.8 10.9-38.9M195.1 92l2.7 8.1 14.3 41.1 13.1 37.3 12.1 34.1 11.2 31.2 10.4 28.6 9.6 26.3 9.1 24.2 8.5 22.4 7.9 20.7 7.6 19.2 7.1 17.8 6.7 16.5 6.4 15.3 6.1 14.3 5.8 13.3 5.5 12.3 5.3 11.5 5.1 10.7 4.9 9.9 4.8 9.2 4.5 8.5 4.4 8 4.3 7.3 4.1 6.8 4.1 6.2 3.9 5.7 3.8 5.2 3.7 4.8 3.7 4.2 3.6 3.9 3.5 3.4 3.5 3 3.4 2.6 3.3 2.1 3.3 1.8 3.3 1.4 3.3 1 3.2 .6 3.3 .3 3.2-.2 3.2-.5 3.2-.9 3.2-1.3 3.3-1.7 3.2-2.2 3.3-2.5 3.3-3 3.4-3.4 3.3-3.8 3.5-4.4 3.5-4.8 3.6-5.3 3.6-5.9 3.7-6.4 3.9-7 3.9-7.6 4-8.3 4.2-9 4.3-9.8 4.5-10.6 4.7-11.4 4.8-12.3 5.1-13.4 5.3-14.4 5.5-15.7 5.9-16.9 6.1-18.4 6.6-19.9 6.9-21.7 7.4-23.6 8-25.8 8.5-28.2 9.1-30.9 10-34 10.8-37.6 11.8-41.6 10.1-36.4M197.9 92l2 5.8 14.2 41 13 37.3 11.9 34 11.1 31.1 10.3 28.6 9.6 26.2 9 24.3 8.4 22.3 7.9 20.7 7.5 19.2 7 17.7 6.7 16.5 6.4 15.4 6 14.2 5.8 13.3 5.5 12.3 5.3 11.5 5.1 10.7 4.8 9.9 4.7 9.2 4.6 8.6 4.4 7.9 4.2 7.3 4.1 6.8 4 6.2 3.9 5.8 3.8 5.2 3.8 4.7 3.6 4.3 3.6 3.8 3.5 3.5 3.4 3 3.4 2.5 3.4 2.2 3.3 1.8 3.3 1.4 3.2 1 3.2 .6 3.3 .2 3.2-.1 3.2-.5 3.2-1 3.2-1.3 3.2-1.7 3.3-2.1 3.2-2.6 3.3-2.9 3.4-3.5 3.4-3.8 3.4-4.4 3.5-4.8 3.6-5.3 3.6-5.9 3.7-6.4 3.8-7.1 4-7.6 4-8.3 4.2-9 4.3-9.8 4.4-10.6 4.7-11.4 4.8-12.3 5.1-13.4 5.3-14.5 5.5-15.6 5.8-17 6.2-18.3 6.5-19.9 7-21.7 7.3-23.6 7.9-25.8 8.5-28.1 9.2-30.9 9.8-33.9 10.8-37.5 11.7-41.5 9.5-33.9M200.8 92l1.2 3.6 14 40.9 12.9 37.2 11.8 33.9 11 31.1 10.2 28.5 9.6 26.2 8.9 24.2 8.3 22.3 7.9 20.7 7.4 19.2 7 17.7 6.6 16.5 6.3 15.3 6.1 14.3 5.7 13.3 5.5 12.3 5.2 11.5 5.1 10.6 4.8 10 4.7 9.2 4.5 8.5 4.4 8 4.2 7.3 4.1 6.8 4 6.2 3.9 5.7 3.8 5.2 3.7 4.8 3.6 4.3 3.5 3.8 3.5 3.4 3.5 3 3.4 2.6 3.3 2.2 3.3 1.8 3.3 1.4 3.2 1 3.2 .6 3.2 .2 3.2-.1 3.2-.6 3.2-.9 3.2-1.3 3.3-1.8 3.2-2.1 3.3-2.5 3.3-3 3.3-3.4 3.4-3.9 3.4-4.4 3.5-4.8 3.5-5.3 3.7-5.9 3.7-6.5 3.8-7 3.9-7.6 4.1-8.4 4.1-9 4.3-9.8 4.5-10.5 4.6-11.5 4.8-12.3 5.1-13.4 5.2-14.5 5.6-15.6 5.8-17 6.2-18.3 6.5-19.9 6.9-21.7 7.3-23.6 7.9-25.7 8.5-28.1 9.1-30.8 9.8-33.9 10.7-37.4 11.7-41.4 8.8-31.4M203.6 92l.5 1.4 13.8 40.8 12.8 37.1 11.7 33.8 10.9 31 10.1 28.5 9.5 26.2 8.8 24.2 8.3 22.3 7.8 20.6 7.4 19.2 6.9 17.7 6.6 16.5 6.3 15.3 6 14.3 5.7 13.2 5.4 12.4 5.3 11.4 5 10.7 4.8 9.9 4.6 9.3 4.5 8.5 4.4 8 4.2 7.3 4.1 6.8 3.9 6.2 3.9 5.7 3.8 5.2 3.7 4.8 3.6 4.3 3.5 3.8 3.5 3.4 3.4 3 3.4 2.6 3.3 2.2 3.3 1.8 3.3 1.4 3.2 1 3.2 .6 3.2 .2 3.2-.1 3.2-.6 3.2-.9 3.2-1.4 3.2-1.7 3.2-2.1 3.3-2.6 3.3-3 3.3-3.4 3.4-3.9 3.4-4.3 3.5-4.9 3.5-5.3 3.7-5.9 3.7-6.5 3.8-7 3.9-7.7 4-8.3 4.2-9 4.3-9.8 4.4-10.6 4.6-11.4 4.8-12.4 5.1-13.4 5.2-14.4 5.6-15.7 5.8-16.9 6.1-18.4 6.5-19.9 6.9-21.6 7.3-23.6 7.9-25.7 8.4-28.1 9.1-30.7 9.8-33.9 10.6-37.3 11.7-41.3 8-28.9M206.3 92l13.5 39.9 12.6 37 11.7 33.8 10.8 30.9 10 28.5 9.4 26.1 8.8 24.1 8.2 22.3 7.8 20.7 7.3 19.1 6.9 17.7 6.5 16.5 6.3 15.3 5.9 14.3 5.7 13.2 5.4 12.3 5.2 11.5 5 10.7 4.8 9.9 4.6 9.3 4.5 8.5 4.3 8 4.2 7.3 4 6.8 4 6.2 3.8 5.7 3.8 5.2 3.7 4.8 3.6 4.3 3.5 3.8 3.5 3.4 3.4 3 3.3 2.6 3.3 2.2 3.3 1.8 3.3 1.4 3.2 1 3.2 .6 3.2 .2 3.2-.1 3.2-.6 3.1-.9 3.2-1.4 3.2-1.7 3.3-2.1 3.2-2.6 3.3-3 3.3-3.4 3.4-3.9 3.4-4.4 3.5-4.8 3.5-5.4 3.6-5.9 3.7-6.4 3.8-7.1 3.9-7.7 4.1-8.3 4.1-9 4.3-9.8 4.4-10.6 4.7-11.5 4.8-12.4 5-13.3 5.2-14.5 5.5-15.6 5.8-17 6.2-18.3 6.4-19.9 6.9-21.7 7.3-23.5 7.9-25.7 8.3-28 9.1-30.7 9.8-33.8 10.6-37.2 11.5-41.2 7.4-26.5M209.1 92l12.6 37.6 12.5 37 11.6 33.7 10.7 30.9 9.9 28.3 9.3 26.1 8.7 24.1 8.2 22.3 7.7 20.6 7.2 19.1 6.9 17.7 6.5 16.5 6.2 15.3 5.9 14.3 5.6 13.2 5.4 12.4 5.2 11.4 5 10.7 4.7 9.9 4.6 9.3 4.5 8.5 4.3 8 4.1 7.3 4.1 6.8 3.9 6.2 3.9 5.7 3.7 5.3 3.7 4.7 3.5 4.3 3.6 3.9 3.4 3.4 3.4 3 3.4 2.6 3.3 2.1 3.2 1.8 3.3 1.4 3.2 1 3.2 .6 3.2 .2 3.2-.1 3.1-.6 3.2-.9 3.2-1.4 3.2-1.7 3.2-2.2 3.2-2.5 3.3-3 3.3-3.5 3.4-3.9 3.4-4.3 3.5-4.9 3.5-5.3 3.6-6 3.7-6.4 3.8-7.1 3.9-7.7 4-8.3 4.1-9.1 4.3-9.7 4.5-10.6 4.6-11.5 4.8-12.4 5-13.4 5.2-14.4 5.5-15.7 5.8-16.9 6.1-18.4 6.5-19.9 6.8-21.6 7.3-23.5 7.8-25.6 8.4-28 9-30.7 9.7-33.7 10.6-37.1 11.5-41.1 6.7-24.1M211.8 92l11.8 35.4 12.4 36.8 11.4 33.7 10.6 30.8 9.9 28.3 9.2 26.1 8.7 24 8.1 22.3 7.6 20.6 7.2 19.1 6.8 17.7 6.5 16.5 6.2 15.3 5.8 14.2 5.6 13.2 5.4 12.4 5.1 11.5 4.9 10.6 4.8 10 4.6 9.2 4.4 8.6 4.3 7.9 4.1 7.3 4 6.8 4 6.3 3.8 5.7 3.7 5.2 3.6 4.8 3.6 4.3 3.5 3.8 3.5 3.4 3.3 3 3.4 2.6 3.3 2.2 3.2 1.8 3.3 1.3 3.2 1 3.2 .6 3.1 .3 3.2-.2 3.2-.6 3.1-.9 3.2-1.3 3.2-1.8 3.2-2.1 3.3-2.6 3.2-3 3.3-3.5 3.4-3.9 3.4-4.3 3.5-4.9 3.5-5.4 3.6-5.9 3.7-6.5 3.8-7 3.9-7.7 4-8.4 4.1-9 4.3-9.8 4.4-10.6 4.6-11.5 4.8-12.4 5-13.4 5.2-14.5 5.5-15.6 5.8-16.9 6-18.4 6.5-19.9 6.8-21.6 7.3-23.5 7.8-25.6 8.3-27.9 9-30.6 9.7-33.7 10.5-37 11.5-41 6-21.7M214.4 92l11 33.2 12.3 36.7 11.3 33.6 10.6 30.7 9.8 28.3 9.1 26.1 8.6 24 8 22.2 7.6 20.6 7.2 19.1 6.8 17.7 6.4 16.4 6.1 15.3 5.8 14.2 5.6 13.3 5.3 12.3 5.1 11.5 4.9 10.7 4.7 9.9 4.6 9.2 4.4 8.6 4.3 7.9 4.1 7.4 4 6.8 3.9 6.2 3.8 5.7 3.7 5.3 3.6 4.7 3.6 4.3 3.5 3.9 3.4 3.4 3.4 3 3.3 2.6 3.3 2.1 3.2 1.8 3.3 1.4 3.2 1 3.1 .6 3.2 .2 3.2-.2 3.1-.5 3.2-1 3.2-1.3 3.1-1.8 3.2-2.1 3.3-2.6 3.2-3 3.3-3.5 3.4-3.9 3.4-4.3 3.4-4.9 3.6-5.4 3.6-5.9 3.6-6.5 3.8-7.1 3.9-7.7 4-8.3 4.1-9.1 4.3-9.8 4.4-10.6 4.6-11.5 4.8-12.4 5-13.4 5.2-14.5 5.5-15.6 5.7-16.9 6.1-18.4 6.4-19.8 6.8-21.6 7.3-23.5 7.7-25.6 8.3-27.9 9-30.6 9.6-33.5 10.5-37 11.4-40.9 5.4-19.3M217.1 92l10.1 31 12.2 36.6 11.3 33.5 10.4 30.7 9.7 28.2 9.1 26 8.5 24 8 22.2 7.5 20.6 7.1 19 6.8 17.7 6.3 16.5 6.1 15.3 5.8 14.2 5.5 13.2 5.3 12.4 5.1 11.5 4.9 10.6 4.7 10 4.5 9.2 4.4 8.6 4.2 7.9 4.1 7.3 4 6.8 3.9 6.3 3.8 5.7 3.7 5.2 3.6 4.8 3.6 4.3 3.4 3.8 3.5 3.4 3.3 3 3.3 2.6 3.3 2.2 3.3 1.8 3.2 1.4 3.2 1 3.1 .6 3.2 .2 3.1-.2 3.2-.6 3.1-.9 3.2-1.4 3.2-1.7 3.2-2.2 3.2-2.6 3.2-3 3.3-3.4 3.4-4 3.4-4.3 3.4-4.9 3.5-5.4 3.6-5.9 3.7-6.5 3.8-7.1 3.9-7.7 3.9-8.4 4.2-9.1 4.2-9.8 4.4-10.6 4.6-11.5 4.8-12.4 5-13.4 5.2-14.4 5.4-15.7 5.8-16.9 6-18.3 6.4-19.9 6.8-21.6 7.3-23.4 7.7-25.6 8.3-27.8 8.9-30.6 9.6-33.5 10.4-36.9 11.4-40.7 4.7-17M219.7 92l9.4 28.8 12 36.5 11.2 33.5 10.3 30.6 9.7 28.2 9 26 8.4 23.9 7.9 22.2 7.5 20.5 7.1 19.1 6.7 17.6 6.3 16.5 6 15.3 5.8 14.2 5.5 13.2 5.3 12.3 5 11.5 4.9 10.7 4.6 9.9 4.5 9.3 4.4 8.5 4.2 8 4.1 7.3 4 6.8 3.8 6.3 3.8 5.7 3.7 5.2 3.6 4.8 3.5 4.3 3.5 3.8 3.4 3.4 3.3 3 3.4 2.6 3.2 2.2 3.2 1.8 3.3 1.3 3.1 1 3.2 .6 3.1 .3 3.2-.2 3.1-.6 3.2-.9 3.1-1.4 3.2-1.8 3.2-2.1 3.2-2.6 3.3-3 3.2-3.5 3.4-3.9 3.4-4.4 3.4-4.9 3.5-5.4 3.6-5.9 3.7-6.5 3.7-7.1 3.9-7.7 4-8.4 4.1-9.1 4.2-9.8 4.4-10.6 4.6-11.5 4.8-12.4 4.9-13.4 5.2-14.5 5.5-15.6 5.7-17 6.1-18.3 6.4-19.8 6.7-21.6 7.3-23.4 7.7-25.5 8.2-27.9 8.9-30.4 9.6-33.5 10.4-36.8 11.3-40.6 4-14.7M222.2 92l8.7 26.6 11.9 36.5 11.1 33.3 10.2 30.6 9.6 28.2 8.9 25.9 8.4 23.9 7.9 22.2 7.4 20.5 7 19 6.7 17.7 6.3 16.4 6 15.3 5.7 14.2 5.4 13.2 5.3 12.3 5 11.5 4.8 10.7 4.7 9.9 4.5 9.3 4.3 8.5 4.2 8 4.1 7.3 3.9 6.8 3.9 6.3 3.7 5.7 3.7 5.2 3.6 4.8 3.5 4.3 3.4 3.8 3.4 3.4 3.4 3 3.3 2.6 3.2 2.2 3.2 1.8 3.2 1.3 3.2 1 3.2 .6 3.1 .2 3.1-.1 3.2-.6 3.1-1 3.2-1.3 3.1-1.8 3.2-2.2 3.2-2.5 3.3-3.1 3.2-3.4 3.4-4 3.3-4.4 3.5-4.9 3.5-5.4 3.6-5.9 3.6-6.5 3.8-7.1 3.8-7.7 4-8.4 4.1-9.1 4.3-9.8 4.4-10.7 4.5-11.4 4.8-12.5 4.9-13.4 5.2-14.4 5.5-15.7 5.7-16.9 6-18.3 6.4-19.8 6.7-21.6 7.2-23.4 7.7-25.5 8.2-27.8 8.9-30.4 9.5-33.4 10.4-36.7 11.2-40.5 3.4-12.4M224.7 92l7.9 24.5 11.9 36.4 11 33.2 10.1 30.6 9.5 28 8.9 25.9 8.3 23.9 7.8 22.1 7.4 20.5 6.9 19 6.6 17.7 6.3 16.4 6 15.3 5.6 14.2 5.5 13.2 5.2 12.3 5 11.5 4.8 10.7 4.6 9.9 4.5 9.3 4.3 8.5 4.2 8 4 7.3 3.9 6.8 3.9 6.3 3.7 5.7 3.7 5.2 3.5 4.8 3.5 4.3 3.5 3.8 3.4 3.5 3.3 3 3.3 2.5 3.2 2.2 3.2 1.8 3.2 1.4 3.2 .9 3.1 .6 3.2 .3 3.1-.2 3.1-.6 3.1-1 3.2-1.3 3.1-1.8 3.2-2.2 3.2-2.6 3.3-3 3.2-3.5 3.3-3.9 3.4-4.4 3.5-4.9 3.4-5.4 3.6-6 3.7-6.5 3.7-7.1 3.9-7.7 4-8.4 4-9.1 4.3-9.8 4.4-10.7 4.5-11.5 4.8-12.4 4.9-13.4 5.2-14.4 5.4-15.7 5.7-16.9 6-18.3 6.4-19.8 6.7-21.6 7.2-23.3 7.7-25.5 8.2-27.8 8.8-30.3 9.5-33.3 10.3-36.7 11.2-40.4 2.8-10.1M227.2 92l7.2 22.4 11.8 36.2 10.8 33.2 10.1 30.5 9.4 28 8.8 25.9 8.3 23.9 7.7 22.1 7.4 20.4 6.9 19 6.5 17.7 6.2 16.4 6 15.2 5.6 14.2 5.4 13.3 5.2 12.3 5 11.4 4.7 10.7 4.6 9.9 4.5 9.3 4.3 8.6 4.1 7.9 4.1 7.4 3.9 6.7 3.8 6.3 3.7 5.7 3.7 5.3 3.5 4.7 3.5 4.3 3.4 3.9 3.4 3.4 3.3 3 3.3 2.6 3.2 2.1 3.2 1.8 3.2 1.4 3.1 1 3.2 .6 3.1 .2 3.1-.2 3.1-.6 3.2-.9 3.1-1.4 3.2-1.8 3.1-2.2 3.2-2.6 3.2-3 3.3-3.5 3.3-3.9 3.4-4.4 3.4-5 3.5-5.4 3.6-5.9 3.6-6.5 3.8-7.2 3.8-7.7 4-8.4 4.1-9.1 4.2-9.8 4.4-10.7 4.5-11.5 4.8-12.4 4.9-13.4 5.2-14.4 5.4-15.7 5.7-16.9 6-18.3 6.3-19.8 6.7-21.5 7.2-23.4 7.6-25.4 8.2-27.7 8.8-30.3 9.4-33.3 10.3-36.5 11.2-40.4 2.1-7.8M229.7 92l6.5 20.3 11.6 36.1 10.8 33.2 10 30.4 9.3 28 8.8 25.8 8.1 23.8 7.7 22.1 7.3 20.4 6.9 19 6.5 17.6 6.2 16.4 5.9 15.3 5.6 14.2 5.3 13.2 5.2 12.3 4.9 11.5 4.8 10.7 4.6 9.9 4.4 9.2 4.2 8.6 4.2 7.9 4 7.4 3.9 6.8 3.8 6.2 3.7 5.8 3.6 5.2 3.6 4.8 3.5 4.3 3.4 3.8 3.3 3.4 3.3 3 3.3 2.6 3.2 2.2 3.2 1.8 3.2 1.3 3.1 1 3.1 .6 3.2 .2 3.1-.2 3.1-.5 3.1-1 3.1-1.4 3.2-1.8 3.1-2.2 3.2-2.6 3.2-3 3.3-3.5 3.3-3.9 3.4-4.5 3.4-4.9 3.5-5.4 3.5-6 3.7-6.5 3.7-7.1 3.9-7.7 3.9-8.4 4.1-9.1 4.2-9.9 4.4-10.6 4.5-11.5 4.7-12.5 5-13.4 5.1-14.4 5.4-15.7 5.7-16.9 6-18.3 6.3-19.8 6.7-21.4 7.1-23.4 7.7-25.4 8.1-27.7 8.8-30.2 9.4-33.2 10.2-36.5 11.1-40.2 1.6-5.6M232.2 92l5.7 18.2 11.5 36.1 10.7 33 10 30.4 9.2 27.9 8.7 25.8 8.1 23.8 7.7 22 7.2 20.4 6.8 19 6.5 17.6 6.1 16.4 5.8 15.2 5.6 14.2 5.4 13.3 5.1 12.3 4.9 11.4 4.7 10.7 4.6 9.9 4.4 9.3 4.2 8.5 4.1 8 4 7.3 3.9 6.8 3.8 6.3 3.7 5.7 3.6 5.3 3.5 4.7 3.5 4.3 3.4 3.9 3.3 3.4 3.3 3 3.3 2.6 3.2 2.1 3.2 1.8 3.1 1.4 3.2 1 3.1 .6 3.1 .2 3.1-.2 3.1-.6 3.1-1 3.1-1.4 3.2-1.7 3.1-2.2 3.2-2.6 3.2-3.1 3.3-3.5 3.3-3.9 3.3-4.5 3.5-4.9 3.4-5.4 3.6-6 3.6-6.5 3.8-7.1 3.8-7.8 3.9-8.4 4.1-9.1 4.2-9.8 4.4-10.7 4.5-11.5 4.7-12.4 4.9-13.4 5.2-14.5 5.4-15.6 5.6-16.9 6-18.3 6.3-19.8 6.7-21.5 7.1-23.3 7.6-25.3 8.1-27.7 8.7-30.2 9.4-33.1 10.2-36.4 11.1-40.1 .9-3.4M234.6 92l5 16.1 11.5 36 10.6 33 9.8 30.3 9.2 27.9 8.6 25.7 8.1 23.8 7.5 22 7.2 20.4 6.8 18.9 6.4 17.6 6.1 16.4 5.8 15.2 5.6 14.2 5.3 13.2 5.1 12.3 4.9 11.5 4.7 10.7 4.5 9.9 4.4 9.2 4.2 8.6 4.1 8 4 7.3 3.8 6.8 3.8 6.3 3.7 5.7 3.6 5.2 3.5 4.8 3.4 4.3 3.4 3.8 3.4 3.5 3.2 3 3.3 2.5 3.2 2.2 3.2 1.8 3.1 1.4 3.1 .9 3.1 .6 3.1 .2 3.1-.2 3.1-.5 3.1-1 3.2-1.4 3.1-1.8 3.1-2.2 3.2-2.6 3.2-3.1 3.3-3.5 3.3-3.9 3.3-4.4 3.4-5 3.5-5.4 3.5-6 3.7-6.5 3.7-7.1 3.8-7.8 4-8.4 4-9.1 4.2-9.9 4.4-10.6 4.5-11.5 4.7-12.5 4.9-13.4 5.1-14.4 5.4-15.7 5.7-16.9 5.9-18.2 6.3-19.8 6.7-21.5 7.1-23.2 7.5-25.4 8.1-27.6 8.7-30.1 9.4-33.1 10.1-36.3 11.1-40 .3-1.2M236.9 92l4.4 14 11.4 36 10.5 32.9 9.7 30.2 9.2 27.9 8.5 25.6 8 23.8 7.5 22 7.1 20.3 6.8 19 6.4 17.6 6 16.3 5.8 15.2 5.5 14.2 5.3 13.2 5.1 12.3 4.8 11.5 4.7 10.7 4.5 9.9 4.3 9.2 4.3 8.6 4 7.9 4 7.4 3.8 6.8 3.8 6.2 3.7 5.8 3.5 5.2 3.5 4.8 3.5 4.3 3.4 3.8 3.3 3.5 3.3 2.9 3.2 2.6 3.2 2.2 3.1 1.8 3.2 1.3 3.1 1 3.1 .6 3.1 .2 3.1-.2 3.1-.6 3.1-1 3.1-1.3 3.1-1.8 3.1-2.2 3.2-2.7 3.2-3 3.2-3.5 3.3-4 3.4-4.4 3.4-4.9 3.4-5.5 3.6-6 3.6-6.5 3.7-7.1 3.8-7.8 4-8.4 4-9.1 4.2-9.9 4.4-10.7 4.5-11.5 4.7-12.4 4.9-13.4 5.1-14.5 5.4-15.6 5.6-16.9 6-18.2 6.2-19.8 6.7-21.4 7.1-23.3 7.5-25.3 8.1-27.6 8.6-30.1 9.3-32.9 10.1-36.3 10.8-38.9M239.3 92l3.7 12 11.3 35.9 10.4 32.8 9.7 30.2 9 27.7 8.5 25.7 7.9 23.7 7.5 22 7.1 20.3 6.7 18.9 6.3 17.6 6 16.3 5.8 15.3 5.5 14.1 5.2 13.2 5 12.3 4.9 11.5 4.6 10.7 4.5 9.9 4.3 9.2 4.2 8.6 4.1 7.9 3.9 7.4 3.9 6.8 3.7 6.2 3.6 5.8 3.6 5.2 3.5 4.8 3.4 4.3 3.4 3.8 3.3 3.5 3.3 3 3.2 2.5 3.2 2.2 3.1 1.8 3.1 1.3 3.1 1 3.1 .6 3.1 .2 3.1-.2 3.1-.6 3.1-1 3.1-1.4 3.1-1.7 3.1-2.3 3.2-2.6 3.2-3 3.2-3.6 3.3-3.9 3.3-4.5 3.4-4.9 3.5-5.5 3.5-5.9 3.6-6.6 3.8-7.1 3.8-7.8 3.9-8.4 4-9.1 4.2-9.9 4.4-10.7 4.5-11.5 4.7-12.4 4.8-13.4 5.2-14.5 5.3-15.6 5.6-16.9 6-18.2 6.2-19.8 6.7-21.4 7-23.2 7.5-25.3 8.1-27.5 8.6-30.1 9.3-32.9 10.1-36.1 10-36.7M241.6 92l3.1 10 11.1 35.7 10.4 32.8 9.6 30.1 9 27.8 8.4 25.6 7.9 23.6 7.4 22 7 20.3 6.6 18.9 6.3 17.6 6 16.3 5.7 15.2 5.5 14.2 5.2 13.2 5 12.3 4.8 11.4 4.6 10.7 4.5 9.9 4.3 9.2 4.2 8.6 4 8 3.9 7.3 3.9 6.8 3.7 6.3 3.6 5.7 3.6 5.2 3.4 4.8 3.5 4.3 3.3 3.9 3.3 3.4 3.3 3 3.2 2.5 3.1 2.2 3.2 1.8 3.1 1.4 3.1 .9 3.1 .6 3.1 .2 3-.2 3.1-.6 3.1-1 3.1-1.4 3.1-1.8 3.1-2.2 3.2-2.6 3.2-3.1 3.2-3.5 3.3-4 3.3-4.4 3.4-4.9 3.4-5.5 3.6-6 3.6-6.6 3.7-7.1 3.8-7.8 3.9-8.4 4.1-9.1 4.1-9.9 4.4-10.7 4.5-11.5 4.6-12.4 4.9-13.4 5.1-14.5 5.4-15.6 5.6-16.9 5.9-18.2 6.2-19.7 6.6-21.4 7.1-23.2 7.5-25.3 8-27.4 8.6-30 9.2-32.9 10.1-36 9.4-34.5M243.9 92l2.5 8 11 35.7 10.3 32.7 9.5 30 8.9 27.7 8.3 25.6 7.9 23.6 7.3 21.9 7 20.3 6.6 18.9 6.3 17.5 5.9 16.3 5.7 15.2 5.4 14.2 5.2 13.2 5 12.3 4.7 11.4 4.6 10.7 4.5 9.9 4.3 9.3 4.1 8.5 4 8 4 7.3 3.8 6.8 3.7 6.3 3.6 5.7 3.5 5.3 3.5 4.7 3.4 4.3 3.3 3.9 3.3 3.4 3.2 3 3.2 2.6 3.2 2.1 3.1 1.8 3.2 1.4 3 1 3.1 .5 3.1 .2 3.1-.2 3-.6 3.1-1 3.1-1.4 3.1-1.8 3.1-2.2 3.2-2.6 3.1-3.1 3.3-3.5 3.2-4 3.4-4.4 3.3-5 3.5-5.4 3.5-6 3.6-6.6 3.7-7.2 3.8-7.7 3.9-8.5 4.1-9.1 4.1-9.9 4.4-10.6 4.4-11.5 4.7-12.5 4.9-13.4 5.1-14.4 5.3-15.7 5.6-16.8 5.9-18.3 6.2-19.7 6.6-21.3 7-23.2 7.5-25.2 8-27.5 8.6-29.9 9.2-32.8 10-36 8.8-32.2M246.2 92l1.8 6 11 35.6 10.1 32.6 9.5 30 8.8 27.6 8.3 25.6 7.8 23.6 7.3 21.8 6.9 20.3 6.6 18.9 6.2 17.5 5.9 16.3 5.6 15.2 5.4 14.2 5.2 13.2 4.9 12.2 4.8 11.5 4.6 10.6 4.4 10 4.2 9.2 4.2 8.6 4 7.9 3.9 7.4 3.8 6.8 3.6 6.2 3.6 5.8 3.6 5.2 3.4 4.8 3.4 4.3 3.3 3.8 3.3 3.4 3.2 3 3.2 2.6 3.2 2.2 3.1 1.7 3.1 1.4 3.1 1 3.1 .6 3 .2 3.1-.2 3-.6 3.1-1 3.1-1.4 3.1-1.8 3.1-2.3 3.1-2.6 3.2-3.1 3.2-3.5 3.3-4 3.3-4.4 3.4-5 3.4-5.5 3.5-6 3.6-6.5 3.7-7.2 3.8-7.8 3.9-8.4 4.1-9.1 4.1-9.9 4.3-10.7 4.5-11.5 4.7-12.4 4.8-13.4 5.1-14.5 5.3-15.6 5.6-16.9 5.9-18.2 6.2-19.7 6.6-21.3 7-23.2 7.4-25.2 8-27.4 8.5-29.9 9.2-32.7 10-35.9 8.2-30M248.4 92l1.2 4 10.9 35.5 10.1 32.6 9.4 29.9 8.7 27.6 8.2 25.5 7.8 23.6 7.2 21.8 6.9 20.3 6.5 18.8 6.2 17.5 5.9 16.3 5.6 15.2 5.3 14.1 5.2 13.2 4.9 12.3 4.7 11.4 4.6 10.7 4.4 9.9 4.2 9.3 4.1 8.5 4 8 3.9 7.3 3.7 6.8 3.7 6.3 3.6 5.7 3.5 5.3 3.5 4.7 3.3 4.3 3.3 3.9 3.3 3.4 3.2 3 3.2 2.6 3.2 2.1 3.1 1.8 3.1 1.4 3 .9 3.1 .6 3 .2 3.1-.2 3-.6 3.1-1 3.1-1.4 3.1-1.8 3.1-2.2 3.1-2.7 3.2-3.1 3.2-3.5 3.3-4 3.3-4.4 3.3-5 3.5-5.5 3.5-6 3.6-6.5 3.7-7.2 3.7-7.8 3.9-8.4 4.1-9.2 4.1-9.9 4.3-10.6 4.5-11.6 4.6-12.4 4.9-13.4 5.1-14.4 5.3-15.6 5.5-16.9 5.9-18.2 6.2-19.7 6.6-21.3 6.9-23.2 7.5-25.1 7.9-27.3 8.5-29.9 9.2-32.6 9.9-35.8 7.6-27.9M250.6 92l.7 2.1 10.7 35.4 10 32.5 9.3 29.9 8.7 27.5 8.2 25.4 7.7 23.6 7.2 21.8 6.8 20.2 6.5 18.8 6.1 17.5 5.8 16.3 5.6 15.2 5.3 14.1 5.1 13.2 4.9 12.3 4.7 11.4 4.6 10.7 4.3 9.9 4.3 9.2 4.1 8.6 3.9 7.9 3.9 7.4 3.7 6.8 3.7 6.2 3.6 5.8 3.5 5.2 3.4 4.8 3.3 4.3 3.4 3.9 3.2 3.4 3.2 3 3.2 2.5 3.1 2.2 3.1 1.8 3.1 1.3 3.1 1 3 .6 3.1 .2 3-.2 3.1-.7 3-1 3.1-1.4 3-1.8 3.2-2.2 3.1-2.6 3.1-3.1 3.3-3.6 3.2-4 3.3-4.4 3.4-5 3.4-5.5 3.5-6 3.6-6.6 3.7-7.1 3.8-7.8 3.8-8.5 4.1-9.1 4.1-9.9 4.3-10.7 4.5-11.5 4.6-12.4 4.8-13.4 5.1-14.5 5.3-15.6 5.6-16.8 5.8-18.2 6.2-19.7 6.5-21.3 7-23.1 7.4-25.1 7.9-27.3 8.5-29.8 9.1-32.6 9.9-35.7 7-25.7M252.8 92l.1 .2 10.6 35.3 10 32.4 9.2 29.8 8.6 27.5 8.1 25.4 7.6 23.5 7.2 21.8 6.8 20.2 6.4 18.8 6.1 17.5 5.8 16.3 5.6 15.1 5.2 14.1 5.1 13.2 4.9 12.3 4.7 11.4 4.5 10.7 4.3 9.9 4.2 9.2 4.1 8.6 3.9 7.9 3.9 7.4 3.7 6.8 3.7 6.2 3.5 5.8 3.5 5.2 3.4 4.8 3.4 4.3 3.3 3.8 3.2 3.5 3.2 2.9 3.2 2.6 3.1 2.2 3.1 1.7 3.1 1.4 3 1 3.1 .6 3 .1 3-.2 3.1-.6 3-1 3.1-1.4 3-1.8 3.1-2.2 3.2-2.7 3.1-3.1 3.2-3.5 3.3-4 3.3-4.5 3.3-5 3.4-5.4 3.5-6.1 3.6-6.5 3.7-7.2 3.8-7.8 3.8-8.5 4.1-9.1 4.1-9.9 4.3-10.7 4.4-11.5 4.7-12.4 4.8-13.4 5-14.5 5.3-15.6 5.6-16.8 5.8-18.2 6.2-19.6 6.5-21.3 6.9-23.1 7.4-25.1 7.9-27.2 8.5-29.8 9.1-32.5 9.8-35.6 6.4-23.6M255 92l10.1 33.5 9.8 32.3 9.1 29.8 8.6 27.4 8 25.4 7.6 23.4 7.1 21.8 6.8 20.2 6.3 18.8 6.1 17.4 5.8 16.3 5.5 15.1 5.2 14.2 5.1 13.1 4.8 12.3 4.7 11.4 4.5 10.7 4.3 9.9 4.2 9.2 4 8.6 4 7.9 3.8 7.4 3.7 6.8 3.6 6.2 3.6 5.8 3.4 5.2 3.4 4.8 3.4 4.3 3.3 3.8 3.2 3.4 3.2 3 3.1 2.6 3.1 2.2 3.1 1.7 3.1 1.4 3 1 3.1 .5 3 .2 3-.2 3.1-.6 3-1 3-1.4 3.1-1.8 3.1-2.3 3.1-2.6 3.2-3.1 3.2-3.6 3.2-4 3.3-4.4 3.4-5 3.4-5.5 3.5-6 3.5-6.6 3.7-7.2 3.8-7.8 3.8-8.4 4-9.2 4.2-9.9 4.3-10.7 4.4-11.5 4.6-12.4 4.9-13.4 5-14.5 5.3-15.5 5.5-16.9 5.8-18.1 6.2-19.7 6.5-21.2 6.9-23.1 7.4-25 7.8-27.3 8.4-29.6 9.1-32.5 9.8-35.5 5.8-21.5M257.1 92l9.4 31.5 9.8 32.2 9.1 29.7 8.5 27.4 8 25.4 7.5 23.4 7 21.7 6.7 20.2 6.4 18.8 6 17.4 5.7 16.3 5.5 15.1 5.2 14.1 5 13.2 4.9 12.2 4.6 11.4 4.4 10.7 4.4 9.9 4.1 9.2 4 8.6 4 7.9 3.8 7.4 3.7 6.8 3.6 6.2 3.5 5.8 3.5 5.2 3.4 4.8 3.3 4.3 3.3 3.8 3.2 3.5 3.1 2.9 3.2 2.6 3.1 2.2 3.1 1.7 3 1.4 3.1 1 3 .5 3 .2 3-.2 3.1-.6 3-1 3-1.4 3.1-1.9 3.1-2.2 3.1-2.7 3.1-3.1 3.2-3.5 3.3-4 3.2-4.5 3.4-5 3.4-5.5 3.5-6 3.6-6.6 3.6-7.2 3.8-7.8 3.8-8.4 4-9.2 4.2-9.9 4.2-10.6 4.5-11.6 4.6-12.4 4.8-13.4 5-14.4 5.3-15.6 5.5-16.8 5.8-18.2 6.2-19.6 6.5-21.3 6.8-23 7.4-25 7.8-27.2 8.4-29.6 9-32.4 9.8-35.4 5.2-19.4M259.3 92l8.7 29.5 9.7 32.2 9 29.6 8.5 27.4 7.9 25.3 7.4 23.4 7 21.7 6.7 20.1 6.3 18.8 6 17.4 5.7 16.2 5.4 15.1 5.2 14.1 5 13.2 4.8 12.3 4.6 11.4 4.4 10.6 4.3 9.9 4.2 9.2 4 8.6 3.9 8 3.8 7.3 3.6 6.8 3.6 6.3 3.6 5.7 3.4 5.2 3.4 4.8 3.3 4.3 3.2 3.9 3.3 3.4 3.1 3 3.2 2.5 3 2.2 3.1 1.8 3.1 1.3 3 1 3 .6 3 .1 3-.2 3.1-.6 3-1 3-1.4 3.1-1.9 3-2.2 3.2-2.7 3.1-3.1 3.2-3.5 3.2-4 3.3-4.5 3.3-5 3.4-5.5 3.5-6 3.6-6.6 3.6-7.2 3.8-7.8 3.8-8.5 4-9.1 4.1-9.9 4.3-10.7 4.4-11.5 4.6-12.5 4.8-13.3 5.1-14.5 5.2-15.6 5.5-16.8 5.8-18.1 6.1-19.6 6.5-21.2 6.9-23 7.3-25 7.8-27.1 8.4-29.6 9-32.3 9.7-35.4 4.7-17.3M261.4 92l8.1 27.6 9.6 32.1 8.9 29.6 8.4 27.2 7.9 25.3 7.4 23.3 6.9 21.7 6.6 20.2 6.3 18.7 5.9 17.4 5.7 16.2 5.4 15.1 5.2 14.1 5 13.2 4.7 12.2 4.6 11.4 4.4 10.7 4.3 9.9 4.1 9.2 4 8.6 3.9 7.9 3.7 7.3 3.7 6.8 3.6 6.3 3.5 5.7 3.4 5.3 3.4 4.7 3.3 4.3 3.2 3.9 3.2 3.4 3.2 3 3.1 2.6 3.1 2.1 3.1 1.8 3 1.3 3 1 3 .6 3 .2 3-.3 3.1-.6 3-1 3-1.4 3-1.8 3.1-2.3 3.1-2.7 3.2-3.1 3.1-3.5 3.2-4 3.3-4.5 3.4-5 3.4-5.5 3.4-6 3.6-6.6 3.6-7.2 3.8-7.8 3.8-8.5 4-9.2 4.1-9.9 4.3-10.7 4.4-11.5 4.6-12.4 4.8-13.4 5-14.4 5.2-15.6 5.5-16.8 5.8-18.1 6.1-19.6 6.5-21.2 6.8-23 7.3-24.9 7.8-27.1 8.3-29.5 9-32.3 9.7-35.3 4.1-15.2M263.4 92l7.6 25.6 9.5 32.1 8.8 29.5 8.4 27.2 7.8 25.2 7.3 23.4 6.9 21.6 6.6 20.1 6.2 18.7 5.9 17.4 5.6 16.2 5.4 15.1 5.2 14.1 4.9 13.1 4.7 12.3 4.6 11.4 4.4 10.6 4.2 9.9 4.1 9.2 4 8.6 3.9 7.9 3.7 7.4 3.7 6.8 3.5 6.2 3.5 5.8 3.5 5.2 3.3 4.8 3.3 4.3 3.2 3.8 3.2 3.5 3.2 2.9 3.1 2.6 3 2.2 3.1 1.7 3 1.4 3 1 3.1 .5 2.9 .2 3-.2 3-.7 3.1-1 3-1.4 3-1.8 3.1-2.3 3.1-2.6 3.1-3.2 3.2-3.5 3.2-4 3.3-4.5 3.3-5 3.4-5.5 3.4-6.1 3.6-6.6 3.6-7.2 3.8-7.8 3.8-8.4 4-9.2 4.1-9.9 4.3-10.7 4.4-11.5 4.5-12.4 4.8-13.4 5-14.5 5.3-15.5 5.4-16.8 5.8-18.1 6.1-19.6 6.4-21.2 6.9-22.9 7.2-24.9 7.8-27.1 8.3-29.4 8.9-32.2 9.7-35.2 3.5-13.2M265.5 92l6.9 23.7 9.4 32 8.8 29.4 8.3 27.2 7.7 25.2 7.3 23.3 6.9 21.6 6.5 20.1 6.2 18.6 5.9 17.4 5.6 16.2 5.3 15.1 5.1 14.1 4.9 13.1 4.7 12.3 4.6 11.4 4.3 10.6 4.3 9.9 4.1 9.2 3.9 8.6 3.9 7.9 3.7 7.4 3.6 6.8 3.6 6.2 3.5 5.7 3.4 5.3 3.3 4.7 3.3 4.4 3.2 3.8 3.2 3.4 3.1 3 3.1 2.6 3.1 2.1 3 1.8 3.1 1.3 3 1 3 .6 3 .1 2.9-.2 3-.6 3-1 3.1-1.5 3-1.8 3-2.2 3.1-2.7 3.2-3.1 3.1-3.6 3.2-4 3.3-4.5 3.3-5 3.4-5.5 3.5-6.1 3.5-6.6 3.6-7.2 3.8-7.8 3.8-8.5 4-9.1 4.1-9.9 4.2-10.7 4.4-11.5 4.6-12.4 4.8-13.4 5-14.5 5.2-15.5 5.4-16.8 5.8-18.1 6.1-19.6 6.4-21.1 6.8-22.9 7.3-24.9 7.7-27 8.3-29.4 8.9-32.1 9.6-35.1 3-11.2M267.5 92l6.3 21.8 9.4 31.9 8.7 29.4 8.2 27.1 7.7 25.1 7.3 23.3 6.8 21.6 6.5 20 6.1 18.7 5.8 17.4 5.6 16.2 5.3 15 5.1 14.1 4.9 13.1 4.7 12.2 4.5 11.5 4.3 10.6 4.2 9.9 4.1 9.2 3.9 8.5 3.8 8 3.8 7.3 3.6 6.8 3.5 6.3 3.5 5.7 3.4 5.3 3.3 4.7 3.3 4.3 3.2 3.9 3.2 3.4 3.1 3 3.1 2.5 3 2.2 3.1 1.8 3 1.3 3 1 3 .5 3 .2 2.9-.2 3-.7 3-1 3-1.4 3.1-1.8 3-2.3 3.1-2.7 3.1-3.1 3.2-3.6 3.2-4 3.2-4.5 3.3-5 3.4-5.5 3.5-6 3.5-6.7 3.6-7.2 3.8-7.8 3.8-8.4 4-9.2 4-9.9 4.3-10.7 4.4-11.5 4.5-12.4 4.8-13.4 5-14.5 5.2-15.5 5.4-16.8 5.8-18.1 6.1-19.5 6.4-21.1 6.8-22.9 7.2-24.8 7.7-27 8.2-29.4 8.9-32 9.6-35.1 2.4-9.1M269.5 92l5.8 19.9 9.2 31.8 8.7 29.4 8.1 27.1 7.7 25 7.2 23.3 6.8 21.5 6.4 20 6.1 18.7 5.8 17.3 5.5 16.2 5.3 15.1 5.1 14 4.8 13.1 4.7 12.3 4.4 11.4 4.4 10.6 4.2 9.9 4 9.2 3.9 8.5 3.8 8 3.7 7.3 3.7 6.8 3.5 6.3 3.4 5.7 3.4 5.2 3.3 4.8 3.3 4.3 3.2 3.9 3.1 3.4 3.1 3 3.1 2.5 3.1 2.2 3 1.7 3 1.4 3 .9 3 .6 3 .2 2.9-.3 3-.6 3-1 3-1.4 3-1.9 3.1-2.2 3-2.7 3.1-3.1 3.2-3.6 3.2-4 3.2-4.5 3.4-5 3.3-5.6 3.5-6 3.5-6.6 3.6-7.2 3.8-7.9 3.8-8.4 3.9-9.2 4.1-9.9 4.2-10.7 4.4-11.5 4.6-12.4 4.7-13.4 5-14.4 5.2-15.6 5.4-16.7 5.8-18.1 6-19.5 6.4-21.1 6.8-22.9 7.2-24.8 7.7-26.9 8.2-29.3 8.8-32 9.6-35 1.9-7.1M271.5 92l5.2 18 9.2 31.8 8.6 29.3 8.1 27 7.5 25 7.2 23.2 6.7 21.5 6.4 20.1 6.1 18.6 5.7 17.3 5.5 16.2 5.3 15 5 14.1 4.8 13.1 4.7 12.2 4.4 11.4 4.3 10.6 4.2 9.9 4 9.2 3.9 8.5 3.8 8 3.7 7.3 3.6 6.8 3.5 6.3 3.4 5.7 3.4 5.2 3.3 4.8 3.3 4.3 3.1 3.9 3.2 3.4 3.1 3 3.1 2.5 3 2.2 3 1.7 3 1.4 3 .9 3 .6 2.9 .2 3-.3 3-.6 3-1 3-1.5 3-1.8 3-2.3 3.1-2.7 3.1-3.1 3.1-3.6 3.2-4 3.3-4.5 3.3-5 3.3-5.5 3.5-6.1 3.5-6.6 3.6-7.2 3.7-7.8 3.9-8.5 3.9-9.2 4.1-9.9 4.2-10.7 4.4-11.5 4.5-12.4 4.8-13.4 4.9-14.4 5.2-15.5 5.4-16.8 5.8-18 6-19.5 6.4-21.1 6.7-22.9 7.2-24.7 7.7-26.9 8.2-29.2 8.8-31.9 9.5-34.9 1.4-5.2M273.5 92l4.6 16.1 9.1 31.7 8.6 29.3 8 27 7.5 24.9 7.1 23.2 6.7 21.5 6.3 20 6 18.6 5.8 17.3 5.4 16.1 5.3 15.1 5 14 4.7 13.1 4.7 12.2 4.4 11.4 4.3 10.6 4.1 9.9 4 9.2 3.9 8.6 3.8 7.9 3.7 7.3 3.5 6.8 3.5 6.3 3.5 5.7 3.3 5.3 3.3 4.7 3.2 4.3 3.2 3.9 3.2 3.4 3 3 3.1 2.5 3 2.2 3.1 1.7 2.9 1.4 3 .9 3 .6 2.9 .2 3-.3 3-.6 2.9-1 3-1.5 3-1.8 3.1-2.3 3-2.7 3.1-3.1 3.2-3.6 3.2-4 3.2-4.5 3.3-5 3.4-5.6 3.4-6 3.5-6.6 3.6-7.3 3.7-7.8 3.8-8.5 4-9.1 4-9.9 4.3-10.7 4.3-11.5 4.6-12.5 4.7-13.3 4.9-14.4 5.2-15.6 5.4-16.7 5.7-18 6.1-19.5 6.3-21.1 6.8-22.8 7.1-24.7 7.7-26.8 8.1-29.2 8.8-31.9 9.5-34.8 .8-3.2M275.4 92l4.1 14.3 9 31.6 8.5 29.2 8 26.9 7.4 25 7.1 23.1 6.6 21.5 6.3 19.9 6 18.6 5.7 17.3 5.4 16.1 5.2 15 5 14.1 4.8 13.1 4.5 12.2 4.5 11.3 4.2 10.7 4.1 9.8 4 9.2 3.9 8.6 3.8 7.9 3.6 7.4 3.6 6.8 3.5 6.2 3.4 5.7 3.3 5.3 3.3 4.7 3.2 4.3 3.2 3.9 3.1 3.4 3.1 3 3 2.6 3.1 2.1 3 1.8 3 1.3 2.9 1 3 .5 2.9 .2 3-.3 2.9-.6 3-1 3-1.5 3-1.8 3-2.3 3.1-2.7 3.1-3.1 3.1-3.6 3.2-4 3.2-4.6 3.3-5 3.4-5.5 3.4-6.1 3.5-6.6 3.6-7.2 3.7-7.8 3.8-8.5 4-9.2 4-9.9 4.2-10.7 4.4-11.5 4.5-12.4 4.7-13.4 5-14.4 5.1-15.5 5.4-16.7 5.7-18 6-19.5 6.4-21.1 6.7-22.7 7.1-24.7 7.6-26.8 8.2-29.1 8.7-31.8 9.5-34.7 .3-1.3M277.3 92l3.5 12.5 9 31.5 8.4 29.1 7.9 26.9 7.5 24.9 6.9 23.1 6.7 21.4 6.2 20 6 18.5 5.6 17.3 5.4 16.1 5.2 15 4.9 14.1 4.8 13 4.5 12.2 4.4 11.4 4.3 10.6 4.1 9.9 3.9 9.2 3.9 8.5 3.7 8 3.7 7.3 3.5 6.8 3.5 6.2 3.4 5.8 3.3 5.2 3.3 4.8 3.2 4.3 3.2 3.8 3.1 3.4 3 3 3.1 2.6 3 2.1 3 1.8 3 1.3 2.9 1 3 .5 2.9 .2 3-.3 2.9-.6 3-1 3-1.5 3-1.8 3-2.3 3-2.7 3.1-3.1 3.1-3.6 3.2-4 3.2-4.6 3.3-5 3.4-5.5 3.4-6.1 3.5-6.6 3.6-7.2 3.7-7.9 3.8-8.4 3.9-9.2 4.1-9.9 4.2-10.7 4.3-11.5 4.5-12.4 4.8-13.4 4.9-14.4 5.1-15.5 5.4-16.7 5.7-18 6-19.5 6.3-21 6.7-22.7 7.1-24.7 7.6-26.7 8.2-29.1 8.7-31.7 9.2-34M279.2 92l3 10.6 8.9 31.5 8.4 29.1 7.8 26.8 7.4 24.9 6.9 23 6.6 21.4 6.2 19.9 5.9 18.6 5.6 17.2 5.4 16.1 5.1 15 5 14 4.7 13.1 4.5 12.2 4.4 11.4 4.2 10.6 4.1 9.9 3.9 9.1 3.9 8.6 3.7 7.9 3.6 7.4 3.6 6.7 3.4 6.3 3.4 5.7 3.3 5.3 3.3 4.7 3.2 4.3 3.1 3.9 3.1 3.4 3.1 3 3 2.5 3 2.2 3 1.7 3 1.4 2.9 .9 3 .6 2.9 .1 2.9-.2 3-.7 2.9-1 3-1.4 3-1.9 3-2.3 3.1-2.7 3-3.1 3.2-3.6 3.1-4 3.3-4.6 3.2-5 3.4-5.5 3.4-6.1 3.5-6.6 3.6-7.2 3.7-7.9 3.8-8.5 3.9-9.1 4-9.9 4.2-10.7 4.4-11.5 4.5-12.4 4.7-13.4 4.9-14.4 5.1-15.5 5.4-16.7 5.7-18 6-19.4 6.3-21 6.6-22.7 7.1-24.6 7.6-26.7 8.1-29.1 8.7-31.6 8.6-32M281.1 92l2.5 8.8 8.8 31.4 8.3 29 7.8 26.8 7.3 24.8 6.9 23.1 6.5 21.3 6.2 19.9 5.9 18.5 5.6 17.3 5.3 16.1 5.1 15 4.9 13.9 4.7 13.1 4.5 12.2 4.3 11.4 4.2 10.6 4.1 9.8 3.9 9.2 3.9 8.6 3.7 7.9 3.6 7.3 3.5 6.8 3.4 6.3 3.4 5.7 3.3 5.2 3.3 4.8 3.1 4.3 3.2 3.8 3.1 3.4 3 3 3.1 2.6 2.9 2.1 3 1.8 3 1.3 2.9 1 3 .5 2.9 .2 2.9-.3 3-.6 2.9-1.1 3-1.4 3-1.9 3-2.2 3-2.7 3.1-3.2 3.1-3.6 3.1-4 3.3-4.5 3.2-5.1 3.4-5.5 3.4-6.1 3.5-6.6 3.6-7.2 3.7-7.9 3.7-8.5 3.9-9.1 4.1-9.9 4.2-10.7 4.3-11.5 4.5-12.4 4.7-13.4 4.9-14.4 5.1-15.5 5.4-16.6 5.7-18 5.9-19.5 6.3-20.9 6.7-22.7 7.1-24.6 7.5-26.6 8.1-29 8.6-31.6 8.1-30M283 92l1.9 7 8.8 31.4 8.2 28.9 7.7 26.7 7.3 24.8 6.9 23 6.4 21.4 6.2 19.8 5.8 18.5 5.6 17.2 5.3 16.1 5 15 4.9 14 4.7 13 4.5 12.2 4.3 11.4 4.2 10.5 4 9.9 3.9 9.2 3.8 8.5 3.7 8 3.6 7.3 3.5 6.8 3.5 6.2 3.3 5.8 3.3 5.2 3.2 4.8 3.2 4.2 3.1 3.9 3.1 3.4 3.1 3 3 2.5 3 2.2 2.9 1.7 3 1.4 2.9 .9 2.9 .6 3 .1 2.9-.2 2.9-.7 3-1 2.9-1.5 3-1.8 3-2.3 3-2.7 3.1-3.1 3.1-3.6 3.2-4.1 3.2-4.5 3.2-5 3.4-5.6 3.4-6.1 3.5-6.6 3.5-7.2 3.7-7.9 3.8-8.4 3.9-9.2 4-9.9 4.2-10.7 4.3-11.5 4.5-12.4 4.7-13.4 4.9-14.3 5.1-15.5 5.4-16.7 5.6-18 6-19.4 6.3-20.9 6.6-22.7 7.1-24.5 7.5-26.6 8-28.9 8.6-31.5 7.6-28.1M284.8 92l1.4 5.2 8.8 31.3 8.1 28.9 7.7 26.7 7.2 24.7 6.8 23 6.4 21.3 6.1 19.8 5.8 18.5 5.6 17.2 5.2 16.1 5.1 14.9 4.8 14 4.7 13 4.4 12.2 4.3 11.4 4.2 10.5 4 9.9 3.9 9.2 3.8 8.5 3.7 8 3.6 7.3 3.5 6.8 3.4 6.2 3.3 5.7 3.3 5.3 3.2 4.7 3.2 4.3 3.1 3.9 3.1 3.4 3 3 3 2.5 3 2.2 2.9 1.7 3 1.4 2.9 .9 2.9 .5 2.9 .2 3-.3 2.9-.6 2.9-1 3-1.5 2.9-1.9 3-2.2 3.1-2.7 3-3.2 3.1-3.6 3.2-4 3.2-4.6 3.2-5 3.4-5.5 3.4-6.1 3.5-6.7 3.5-7.2 3.7-7.8 3.8-8.5 3.9-9.2 4-9.9 4.2-10.7 4.3-11.5 4.5-12.4 4.6-13.3 4.9-14.4 5.1-15.5 5.4-16.6 5.6-18 5.9-19.4 6.3-20.9 6.6-22.6 7.1-24.5 7.5-26.6 8-28.8 8.6-31.5 7-26.1M286.6 92l1 3.5 8.6 31.2 8.1 28.8 7.6 26.6 7.2 24.7 6.8 22.9 6.4 21.3 6 19.8 5.8 18.5 5.5 17.2 5.2 16 5 15 4.8 13.9 4.7 13.1 4.4 12.1 4.3 11.4 4.1 10.6 4 9.8 3.9 9.2 3.8 8.5 3.6 8 3.6 7.3 3.5 6.8 3.4 6.2 3.3 5.7 3.3 5.3 3.2 4.7 3.1 4.3 3.1 3.9 3.1 3.4 3 3 3 2.5 3 2.2 2.9 1.7 3 1.3 2.9 1 2.9 .5 2.9 .2 2.9-.3 3-.6 2.9-1.1 2.9-1.4 3-1.9 3-2.3 3-2.7 3.1-3.1 3.1-3.6 3.1-4.1 3.2-4.5 3.2-5.1 3.4-5.5 3.4-6.1 3.4-6.6 3.6-7.2 3.7-7.9 3.7-8.5 3.9-9.2 4-9.9 4.2-10.7 4.3-11.5 4.5-12.4 4.7-13.3 4.8-14.3 5.1-15.5 5.4-16.7 5.6-17.9 5.9-19.4 6.2-20.9 6.6-22.5 7.1-24.5 7.4-26.5 8-28.8 8.6-31.4 6.5-24.2M288.4 92l.5 1.7 8.6 31.2 8 28.7 7.6 26.6 7.1 24.7 6.7 22.8 6.3 21.3 6.1 19.8 5.7 18.4 5.5 17.2 5.2 16 5 14.9 4.7 14 4.6 13 4.5 12.2 4.2 11.3 4.1 10.6 4 9.9 3.9 9.1 3.7 8.6 3.7 7.9 3.5 7.3 3.5 6.8 3.4 6.2 3.3 5.7 3.3 5.3 3.2 4.7 3.1 4.3 3.1 3.9 3 3.4 3.1 3 2.9 2.5 3 2.2 3 1.7 2.9 1.3 2.9 1 2.9 .5 2.9 .2 2.9-.3 2.9-.6 2.9-1.1 3-1.4 2.9-1.9 3-2.3 3-2.7 3.1-3.2 3.1-3.6 3.1-4 3.2-4.6 3.2-5 3.4-5.5 3.4-6.1 3.4-6.7 3.6-7.2 3.6-7.8 3.8-8.5 3.9-9.2 4-9.9 4.1-10.7 4.3-11.5 4.5-12.4 4.7-13.3 4.8-14.4 5.1-15.4 5.3-16.7 5.6-17.9 5.9-19.3 6.3-20.9 6.6-22.6 7-24.4 7.4-26.5 8-28.7 8.5-31.3 6-22.3M290.2 92l8.5 31.1 8 28.6 7.5 26.6 7.1 24.6 6.6 22.8 6.3 21.3 6 19.7 5.7 18.4 5.4 17.2 5.2 16 5 14.9 4.7 14 4.6 13 4.4 12.1 4.3 11.4 4 10.5 4 9.9 3.9 9.2 3.7 8.5 3.6 7.9 3.6 7.3 3.4 6.8 3.4 6.2 3.3 5.8 3.2 5.2 3.2 4.8 3.1 4.2 3.1 3.9 3.1 3.4 3 3 3 2.5 2.9 2.2 3 1.7 2.9 1.3 2.9 1 2.9 .5 2.9 .2 2.9-.3 2.9-.6 2.9-1.1 2.9-1.4 3-1.9 2.9-2.3 3.1-2.7 3-3.2 3.1-3.6 3.1-4 3.2-4.6 3.2-5 3.4-5.6 3.3-6.1 3.5-6.6 3.6-7.2 3.6-7.9 3.8-8.5 3.8-9.2 4-9.9 4.2-10.6 4.3-11.5 4.4-12.4 4.7-13.4 4.8-14.3 5.1-15.4 5.3-16.7 5.6-17.9 5.9-19.3 6.2-20.8 6.6-22.6 7-24.3 7.4-26.5 7.9-28.7 8.5-31.2 5.5-20.4M292 92l8 29.3 7.9 28.6 7.4 26.5 7 24.6 6.7 22.8 6.2 21.2 6 19.7 5.6 18.4 5.4 17.1 5.2 16 4.9 14.9 4.7 13.9 4.6 13.1 4.4 12.1 4.2 11.3 4.1 10.6 3.9 9.8 3.8 9.2 3.7 8.5 3.7 7.9 3.5 7.4 3.4 6.7 3.4 6.3 3.3 5.7 3.2 5.2 3.2 4.8 3.1 4.3 3.1 3.8 3 3.4 3 3 3 2.5 2.9 2.2 3 1.7 2.9 1.4 2.9 .9 2.8 .5 2.9 .2 2.9-.3 2.9-.6 2.9-1.1 3-1.4 2.9-1.9 3-2.3 3-2.7 3-3.2 3.1-3.6 3.1-4.1 3.2-4.5 3.2-5 3.3-5.6 3.4-6.1 3.5-6.6 3.5-7.3 3.7-7.8 3.7-8.5 3.9-9.2 4-9.9 4.1-10.7 4.3-11.5 4.5-12.3 4.6-13.4 4.8-14.3 5.1-15.4 5.3-16.6 5.6-17.9 5.8-19.3 6.2-20.8 6.6-22.5 7-24.4 7.4-26.4 7.9-28.6 8.4-31.2 5-18.5M293.7 92l7.5 27.5 7.8 28.5 7.4 26.5 7 24.5 6.6 22.8 6.2 21.2 5.9 19.7 5.6 18.3 5.4 17.1 5.1 16 4.9 14.9 4.7 13.9 4.6 13 4.3 12.2 4.2 11.3 4.1 10.6 3.9 9.8 3.8 9.2 3.7 8.5 3.6 7.9 3.5 7.3 3.4 6.8 3.4 6.2 3.3 5.7 3.2 5.3 3.1 4.7 3.2 4.3 3 3.9 3 3.4 3 2.9 3 2.6 2.9 2.1 2.9 1.8 2.9 1.3 2.9 .9 2.9 .6 2.9 .1 2.9-.3 2.9-.6 2.9-1.1 2.9-1.4 2.9-1.9 3-2.3 3-2.7 3-3.2 3.1-3.6 3.1-4.1 3.2-4.5 3.2-5 3.3-5.6 3.4-6.1 3.5-6.6 3.5-7.3 3.6-7.8 3.8-8.5 3.8-9.2 4-9.9 4.2-10.7 4.2-11.5 4.5-12.3 4.6-13.4 4.8-14.3 5.1-15.4 5.3-16.6 5.5-17.9 5.9-19.3 6.2-20.7 6.5-22.5 7-24.3 7.3-26.4 7.9-28.6 8.5-31.1 4.4-16.6M295.4 92l7 25.7 7.8 28.5 7.3 26.4 7 24.5 6.5 22.7 6.2 21.2 5.9 19.7 5.5 18.3 5.4 17.1 5.1 15.9 4.8 14.9 4.7 14 4.5 12.9 4.3 12.2 4.2 11.3 4.1 10.5 3.9 9.9 3.8 9.1 3.7 8.5 3.5 7.9 3.5 7.4 3.4 6.7 3.4 6.3 3.2 5.7 3.3 5.2 3.1 4.8 3.1 4.3 3.1 3.8 3 3.4 3 3 2.9 2.5 2.9 2.2 2.9 1.7 2.9 1.3 2.9 1 2.9 .5 2.9 .1 2.8-.2 2.9-.7 2.9-1 2.9-1.5 3-1.9 2.9-2.3 3-2.7 3-3.2 3.1-3.6 3.1-4 3.2-4.6 3.2-5 3.3-5.6 3.4-6.1 3.4-6.6 3.6-7.3 3.6-7.8 3.7-8.5 3.9-9.2 4-9.9 4.1-10.7 4.3-11.5 4.4-12.3 4.6-13.3 4.8-14.4 5.1-15.4 5.3-16.5 5.5-17.9 5.8-19.3 6.2-20.7 6.5-22.5 6.9-24.2 7.4-26.3 7.9-28.6 8.4-31 3.9-14.8M297.2 92l6.4 23.9 7.7 28.5 7.3 26.4 6.9 24.4 6.5 22.7 6.1 21.1 5.9 19.7 5.5 18.3 5.3 17.1 5.1 15.9 4.9 14.9 4.6 13.9 4.5 12.9 4.3 12.2 4.1 11.3 4.1 10.5 3.9 9.9 3.7 9.1 3.7 8.5 3.6 7.9 3.4 7.3 3.4 6.8 3.4 6.2 3.2 5.8 3.2 5.2 3.2 4.7 3 4.3 3.1 3.9 3 3.4 3 2.9 2.9 2.6 2.9 2.1 2.9 1.8 2.9 1.3 2.9 .9 2.9 .6 2.8 .1 2.9-.3 2.9-.6 2.9-1.1 2.9-1.5 2.9-1.8 3-2.3 2.9-2.8 3.1-3.1 3-3.6 3.1-4.1 3.2-4.6 3.2-5 3.3-5.6 3.4-6.1 3.4-6.6 3.5-7.3 3.7-7.8 3.7-8.5 3.8-9.2 4-9.9 4.1-10.7 4.3-11.4 4.4-12.4 4.6-13.3 4.8-14.3 5.1-15.4 5.2-16.6 5.6-17.8 5.8-19.3 6.1-20.7 6.5-22.4 6.9-24.3 7.4-26.2 7.8-28.5 8.4-31 3.5-12.9M298.9 92l5.9 22.2 7.7 28.4 7.2 26.3 6.8 24.4 6.5 22.7 6.1 21 5.8 19.7 5.5 18.3 5.3 17 5 16 4.9 14.8 4.6 13.9 4.4 13 4.3 12.1 4.2 11.3 4 10.5 3.8 9.8 3.8 9.2 3.6 8.5 3.6 7.9 3.5 7.3 3.3 6.8 3.4 6.2 3.2 5.7 3.2 5.3 3.1 4.7 3.1 4.3 3 3.8 3 3.4 3 3 2.9 2.5 2.9 2.2 2.9 1.7 2.9 1.3 2.9 1 2.8 .5 2.9 .1 2.8-.2 2.9-.7 2.9-1 2.9-1.5 2.9-1.9 3-2.3 3-2.7 3-3.2 3-3.6 3.1-4.1 3.2-4.5 3.2-5.1 3.3-5.5 3.3-6.1 3.5-6.7 3.5-7.2 3.6-7.9 3.7-8.5 3.9-9.2 3.9-9.9 4.1-10.6 4.3-11.5 4.4-12.4 4.6-13.3 4.8-14.3 5-15.4 5.3-16.5 5.5-17.8 5.8-19.2 6.2-20.8 6.4-22.3 6.9-24.2 7.4-26.2 7.8-28.5 8.3-30.9 3-11.1M300.5 92l5.5 20.5 7.6 28.3 7.2 26.3 6.8 24.3 6.4 22.6 6.1 21.1 5.7 19.6 5.5 18.3 5.3 17 5 15.9 4.8 14.9 4.6 13.8 4.4 13 4.2 12.1 4.2 11.3 3.9 10.5 3.9 9.9 3.7 9.1 3.7 8.5 3.5 7.9 3.5 7.3 3.3 6.8 3.3 6.2 3.3 5.7 3.1 5.2 3.2 4.8 3 4.3 3.1 3.8 2.9 3.4 3 3 2.9 2.5 2.9 2.2 2.9 1.7 2.9 1.3 2.8 1 2.9 .5 2.8 .1 2.9-.2 2.9-.7 2.8-1.1 2.9-1.4 3-1.9 2.9-2.3 3-2.8 3-3.1 3-3.7 3.1-4 3.2-4.6 3.2-5 3.3-5.6 3.3-6.1 3.4-6.7 3.6-7.2 3.6-7.8 3.7-8.5 3.8-9.2 4-9.9 4.1-10.7 4.2-11.5 4.4-12.3 4.6-13.3 4.8-14.3 5-15.4 5.3-16.5 5.5-17.8 5.8-19.2 6.1-20.7 6.5-22.4 6.8-24.1 7.3-26.2 7.8-28.4 8.3-30.8 2.5-9.3M302.2 92l5 18.8 7.5 28.2 7.2 26.2 6.7 24.3 6.4 22.6 6 21.1 5.7 19.5 5.5 18.3 5.2 17 5 15.9 4.7 14.8 4.6 13.9 4.4 12.9 4.3 12.1 4.1 11.3 3.9 10.6 3.9 9.8 3.7 9.1 3.6 8.5 3.5 7.9 3.5 7.3 3.3 6.8 3.3 6.2 3.2 5.7 3.2 5.2 3.1 4.8 3.1 4.3 3 3.8 3 3.4 2.9 3 2.9 2.5 2.9 2.2 2.9 1.7 2.8 1.3 2.9 .9 2.8 .6 2.9 .1 2.8-.3 2.9-.6 2.9-1.1 2.9-1.5 2.9-1.9 2.9-2.3 3-2.7 3-3.2 3-3.6 3.1-4.1 3.2-4.5 3.2-5.1 3.2-5.5 3.4-6.1 3.4-6.7 3.5-7.2 3.6-7.9 3.7-8.5 3.9-9.2 3.9-9.9 4.1-10.6 4.2-11.5 4.4-12.4 4.6-13.2 4.8-14.3 5-15.4 5.2-16.5 5.5-17.8 5.8-19.2 6.1-20.6 6.5-22.4 6.8-24.1 7.3-26.1 7.7-28.3 8.3-30.8 2-7.5M303.8 92l4.5 17 7.6 28.3 7 26.1 6.7 24.3 6.4 22.5 5.9 21 5.7 19.6 5.5 18.2 5.1 17 5 15.9 4.7 14.8 4.6 13.9 4.4 12.9 4.2 12.1 4.1 11.3 3.9 10.5 3.8 9.8 3.7 9.1 3.6 8.5 3.6 7.9 3.4 7.3 3.3 6.8 3.3 6.2 3.2 5.7 3.2 5.3 3 4.7 3.1 4.3 3 3.8 3 3.4 2.9 3 2.9 2.5 2.9 2.1 2.9 1.8 2.8 1.3 2.9 .9 2.8 .6 2.8 .1 2.9-.3 2.8-.6 2.9-1.1 2.9-1.5 2.9-1.9 2.9-2.3 3-2.7 3-3.2 3-3.6 3.1-4.1 3.1-4.6 3.2-5 3.3-5.6 3.3-6.1 3.5-6.6 3.5-7.3 3.6-7.8 3.7-8.5 3.8-9.2 3.9-9.9 4.1-10.7 4.2-11.4 4.4-12.4 4.6-13.3 4.8-14.2 5-15.4 5.2-16.5 5.5-17.8 5.8-19.1 6-20.7 6.5-22.2 6.8-24.1 7.3-26.1 7.7-28.3 8.3-30.7 1.5-5.7M305.5 92l4 15.3 7.5 28.2 7 26.1 6.6 24.2 6.3 22.6 6 20.9 5.6 19.6 5.4 18.2 5.2 16.9 4.9 15.9 4.7 14.8 4.6 13.8 4.3 13 4.2 12 4.1 11.3 3.9 10.5 3.8 9.8 3.7 9.2 3.6 8.5 3.5 7.9 3.4 7.3 3.3 6.7 3.3 6.2 3.2 5.8 3.1 5.2 3.1 4.7 3 4.3 3 3.8 3 3.4 2.9 3 2.9 2.5 2.9 2.2 2.8 1.7 2.9 1.3 2.8 .9 2.9 .6 2.8 .1 2.8-.3 2.9-.7 2.8-1 2.9-1.5 2.9-1.9 2.9-2.3 3-2.7 3-3.2 3-3.6 3.1-4.1 3.1-4.6 3.2-5 3.3-5.6 3.3-6.1 3.4-6.7 3.5-7.2 3.6-7.9 3.7-8.5 3.8-9.1 4-9.9 4-10.7 4.3-11.5 4.3-12.3 4.6-13.3 4.8-14.2 5-15.4 5.2-16.5 5.4-17.7 5.8-19.2 6.1-20.6 6.4-22.2 6.8-24.1 7.2-26 7.7-28.2 8.3-30.7 1-3.9M307.1 92l3.5 13.7 7.5 28.1 7 26 6.6 24.2 6.2 22.5 5.9 20.9 5.6 19.5 5.4 18.2 5.1 17 4.9 15.8 4.7 14.8 4.5 13.8 4.3 13 4.2 12 4.1 11.3 3.9 10.5 3.8 9.8 3.6 9.1 3.6 8.5 3.5 7.9 3.4 7.3 3.3 6.8 3.2 6.2 3.2 5.7 3.2 5.2 3 4.7 3.1 4.3 2.9 3.8 3 3.4 2.9 3 2.9 2.5 2.9 2.2 2.8 1.7 2.9 1.3 2.8 .9 2.8 .6 2.8 .1 2.9-.3 2.8-.6 2.9-1.1 2.8-1.5 2.9-1.9 2.9-2.3 3-2.7 3-3.2 3-3.6 3.1-4.1 3.1-4.6 3.2-5.1 3.3-5.5 3.3-6.1 3.4-6.7 3.5-7.2 3.6-7.9 3.7-8.5 3.8-9.1 3.9-9.9 4.1-10.7 4.2-11.5 4.4-12.3 4.5-13.3 4.8-14.2 4.9-15.3 5.2-16.5 5.5-17.8 5.7-19.1 6.1-20.6 6.4-22.2 6.8-24 7.2-26 7.7-28.1 8.2-30.6 .6-2.2M308.7 92l3.1 12 7.4 28 6.9 26.1 6.6 24.1 6.2 22.4 5.8 20.9 5.6 19.5 5.4 18.2 5 16.9 4.9 15.8 4.7 14.8 4.5 13.8 4.3 12.9 4.1 12.1 4.1 11.3 3.8 10.5 3.8 9.8 3.7 9.1 3.5 8.5 3.5 7.8 3.4 7.4 3.3 6.7 3.2 6.2 3.2 5.7 3.1 5.2 3.1 4.8 3 4.3 3 3.8 2.9 3.4 2.9 2.9 2.9 2.6 2.9 2.1 2.8 1.7 2.8 1.3 2.9 1 2.8 .5 2.8 .1 2.8-.3 2.8-.6 2.9-1.1 2.9-1.5 2.8-1.9 3-2.3 2.9-2.7 3-3.2 3-3.6 3.1-4.1 3.1-4.6 3.2-5.1 3.2-5.5 3.3-6.1 3.4-6.7 3.5-7.2 3.6-7.9 3.7-8.5 3.8-9.1 3.9-9.9 4.1-10.7 4.2-11.4 4.4-12.4 4.5-13.2 4.7-14.3 5-15.3 5.2-16.5 5.4-17.7 5.8-19.1 6-20.5 6.4-22.2 6.8-24 7.1-25.9 7.7-28.1 8.2-30.6 .1-.4M310.3 92l2.6 10.3 7.4 28 6.8 26 6.6 24.1 6.1 22.4 5.9 20.9 5.5 19.4 5.3 18.1 5.1 17 4.8 15.8 4.6 14.8 4.5 13.8 4.3 12.8 4.1 12.1 4 11.2 3.9 10.5 3.8 9.8 3.6 9.2 3.5 8.4 3.5 7.9 3.4 7.3 3.3 6.8 3.2 6.2 3.1 5.7 3.1 5.2 3.1 4.7 3 4.3 3 3.8 2.9 3.4 2.9 3 2.9 2.5 2.8 2.1 2.9 1.8 2.8 1.3 2.8 .9 2.8 .5 2.8 .1 2.9-.2 2.8-.7 2.8-1.1 2.9-1.5 2.9-1.9 2.9-2.3 2.9-2.7 3-3.2 3-3.6 3.1-4.1 3.1-4.6 3.2-5 3.2-5.6 3.3-6.1 3.4-6.7 3.5-7.2 3.6-7.9 3.6-8.5 3.8-9.1 3.9-9.9 4.1-10.7 4.2-11.4 4.4-12.4 4.5-13.2 4.7-14.2 5-15.3 5.1-16.5 5.5-17.7 5.7-19.1 6-20.5 6.4-22.2 6.7-23.9 7.2-25.9 7.6-28 7.9-29.2M311.8 92l2.3 8.7 7.2 27.9 6.9 25.9 6.4 24.1 6.2 22.4 5.8 20.8 5.5 19.4 5.3 18.1 5 16.9 4.8 15.8 4.6 14.8 4.5 13.8 4.2 12.9 4.1 12 4 11.2 3.9 10.5 3.7 9.8 3.6 9.1 3.6 8.5 3.4 7.9 3.4 7.3 3.2 6.7 3.2 6.2 3.2 5.7 3.1 5.2 3 4.8 3 4.3 3 3.8 2.9 3.4 2.9 2.9 2.9 2.6 2.8 2.1 2.8 1.7 2.9 1.3 2.8 .9 2.8 .6 2.8 .1 2.8-.3 2.8-.7 2.8-1 2.9-1.5 2.9-1.9 2.9-2.3 2.9-2.8 3-3.2 3-3.6 3-4.1 3.2-4.6 3.1-5 3.3-5.6 3.3-6.1 3.4-6.7 3.4-7.2 3.6-7.9 3.7-8.4 3.7-9.2 4-9.9 4-10.6 4.2-11.5 4.4-12.3 4.5-13.3 4.7-14.2 4.9-15.3 5.2-16.4 5.4-17.7 5.7-19 6-20.6 6.4-22.1 6.7-23.9 7.2-25.8 7.6-28 7.3-27.4M313.4 92l1.8 7 7.2 27.9 6.8 25.9 6.4 24 6.1 22.3 5.8 20.9 5.5 19.3 5.2 18.1 5 16.9 4.8 15.8 4.6 14.7 4.4 13.8 4.2 12.9 4.1 12 4 11.3 3.8 10.4 3.7 9.8 3.7 9.1 3.5 8.5 3.4 7.9 3.3 7.3 3.3 6.7 3.2 6.2 3.1 5.7 3.1 5.2 3.1 4.7 2.9 4.3 3 3.8 2.9 3.4 2.9 3 2.8 2.5 2.9 2.2 2.8 1.7 2.8 1.3 2.8 .9 2.8 .5 2.8 .1 2.8-.2 2.8-.7 2.9-1.1 2.8-1.5 2.9-1.9 2.9-2.3 2.9-2.7 3-3.2 3-3.7 3-4.1 3.1-4.5 3.2-5.1 3.2-5.6 3.3-6.1 3.4-6.6 3.5-7.3 3.5-7.8 3.7-8.5 3.8-9.2 3.9-9.9 4-10.6 4.2-11.5 4.3-12.3 4.6-13.2 4.7-14.2 4.9-15.3 5.2-16.4 5.4-17.7 5.7-19 5.9-20.5 6.4-22.1 6.7-23.8 7.1-25.8 7.6-28 6.9-25.6M314.9 92l1.4 5.4 7.2 27.8 6.7 25.9 6.4 23.9 6 22.3 5.8 20.8 5.4 19.4 5.2 18 5 16.9 4.8 15.8 4.5 14.7 4.4 13.8 4.3 12.8 4 12 4 11.3 3.8 10.4 3.7 9.8 3.6 9.1 3.5 8.5 3.4 7.9 3.3 7.2 3.3 6.8 3.2 6.2 3.1 5.7 3.1 5.2 3 4.7 3 4.3 2.9 3.8 2.9 3.4 2.9 3 2.8 2.5 2.9 2.1 2.8 1.7 2.8 1.4 2.8 .9 2.8 .5 2.8 .1 2.7-.3 2.9-.7 2.8-1 2.8-1.5 2.9-1.9 2.9-2.3 2.9-2.8 2.9-3.2 3-3.6 3.1-4.1 3.1-4.6 3.2-5 3.2-5.6 3.3-6.1 3.4-6.7 3.4-7.2 3.6-7.9 3.6-8.5 3.8-9.1 3.9-9.9 4-10.7 4.2-11.4 4.3-12.3 4.6-13.2 4.7-14.2 4.9-15.3 5.1-16.4 5.4-17.7 5.7-19 6-20.4 6.3-22.1 6.7-23.8 7.1-25.8 7.5-27.8 6.4-23.9M316.4 92l1 3.8 7.1 27.8 6.7 25.7 6.4 24 6 22.2 5.7 20.8 5.4 19.3 5.2 18.1 4.9 16.8 4.7 15.8 4.6 14.7 4.4 13.7 4.2 12.9 4 12 3.9 11.2 3.8 10.5 3.7 9.7 3.6 9.1 3.5 8.5 3.4 7.9 3.3 7.3 3.2 6.7 3.2 6.2 3.1 5.7 3.1 5.2 3 4.7 3 4.3 2.9 3.8 2.9 3.4 2.9 2.9 2.8 2.6 2.8 2.1 2.8 1.7 2.8 1.3 2.8 .9 2.8 .6 2.8 .1 2.8-.3 2.8-.7 2.8-1.1 2.8-1.5 2.9-1.9 2.9-2.3 2.9-2.7 2.9-3.2 3-3.7 3.1-4.1 3.1-4.5 3.1-5.1 3.2-5.6 3.3-6.1 3.4-6.6 3.5-7.3 3.5-7.8 3.7-8.5 3.7-9.2 3.9-9.9 4-10.6 4.2-11.4 4.3-12.3 4.5-13.2 4.7-14.2 4.9-15.3 5.2-16.4 5.4-17.6 5.6-19 6-20.4 6.3-22.1 6.6-23.7 7.1-25.8 7.6-27.8 5.9-22.1M318 92l.5 2.2 7.1 27.7 6.6 25.7 6.3 23.9 6 22.3 5.7 20.7 5.4 19.3 5.1 18 4.9 16.8 4.7 15.8 4.5 14.7 4.4 13.7 4.2 12.8 4 12 3.9 11.2 3.8 10.5 3.7 9.8 3.5 9.1 3.5 8.4 3.4 7.9 3.3 7.3 3.2 6.7 3.2 6.2 3.1 5.7 3 5.2 3 4.7 3 4.3 2.9 3.8 2.9 3.4 2.8 2.9 2.9 2.6 2.8 2.1 2.8 1.7 2.8 1.3 2.8 .9 2.7 .5 2.8 .2 2.8-.3 2.8-.7 2.8-1.1 2.8-1.5 2.9-1.9 2.9-2.3 2.9-2.8 2.9-3.2 3-3.6 3-4.1 3.1-4.6 3.2-5 3.2-5.6 3.3-6.1 3.3-6.7 3.5-7.2 3.5-7.9 3.7-8.5 3.7-9.1 3.9-9.9 4-10.6 4.2-11.5 4.3-12.2 4.5-13.2 4.7-14.2 4.9-15.3 5.1-16.4 5.4-17.6 5.6-18.9 6-20.4 6.3-22 6.6-23.8 7.1-25.6 7.5-27.8 5.4-20.4M319.4 92l.2 .6 7 27.7 6.6 25.6 6.3 23.9 5.9 22.2 5.6 20.7 5.4 19.3 5.1 18 4.9 16.8 4.7 15.7 4.5 14.6 4.3 13.8 4.2 12.8 4 12 3.9 11.2 3.7 10.5 3.7 9.7 3.5 9.1 3.5 8.5 3.4 7.8 3.2 7.3 3.3 6.7 3.1 6.2 3.1 5.7 3 5.2 3 4.7 3 4.3 2.9 3.8 2.9 3.4 2.8 2.9 2.9 2.6 2.8 2.1 2.7 1.7 2.8 1.3 2.8 .9 2.8 .5 2.7 .2 2.8-.3 2.8-.7 2.8-1.1 2.8-1.5 2.9-1.9 2.9-2.3 2.9-2.8 2.9-3.2 3-3.6 3-4.1 3.1-4.6 3.1-5.1 3.3-5.5 3.2-6.1 3.4-6.7 3.4-7.2 3.6-7.9 3.6-8.5 3.8-9.1 3.8-9.9 4-10.6 4.2-11.5 4.3-12.2 4.5-13.2 4.7-14.2 4.9-15.3 5.1-16.3 5.3-17.6 5.7-18.9 5.9-20.4 6.3-22 6.6-23.7 7-25.6 7.5-27.7 5-18.7M320.9 92l6.8 26.6 6.5 25.6 6.2 23.9 5.9 22.1 5.6 20.7 5.4 19.2 5 18 4.9 16.8 4.7 15.7 4.4 14.7 4.3 13.7 4.2 12.8 4 12 3.8 11.2 3.8 10.4 3.6 9.8 3.5 9 3.5 8.5 3.3 7.8 3.3 7.3 3.2 6.7 3.2 6.2 3 5.7 3.1 5.2 3 4.7 2.9 4.3 2.9 3.8 2.9 3.4 2.8 3 2.8 2.5 2.8 2.1 2.8 1.7 2.8 1.3 2.7 .9 2.8 .5 2.8 .2 2.7-.3 2.8-.7 2.8-1.1 2.8-1.5 2.9-1.9 2.9-2.3 2.9-2.8 2.9-3.2 3-3.6 3-4.1 3.1-4.6 3.1-5.1 3.2-5.6 3.3-6.1 3.3-6.6 3.5-7.3 3.5-7.8 3.6-8.5 3.8-9.2 3.8-9.8 4-10.6 4.2-11.5 4.3-12.2 4.5-13.2 4.6-14.2 4.9-15.2 5.1-16.4 5.4-17.5 5.6-18.9 5.9-20.4 6.3-21.9 6.6-23.7 7-25.6 7.5-27.6 4.5-17M322.4 92l6.3 25 6.5 25.6 6.2 23.7 5.8 22.2 5.6 20.6 5.3 19.2 5 18 4.9 16.7 4.6 15.7 4.5 14.7 4.2 13.7 4.2 12.8 3.9 11.9 3.9 11.2 3.7 10.5 3.6 9.7 3.6 9.1 3.4 8.4 3.3 7.9 3.3 7.3 3.2 6.7 3.1 6.2 3.1 5.7 3 5.2 3 4.7 2.9 4.2 2.9 3.8 2.8 3.4 2.9 3 2.8 2.5 2.8 2.1 2.8 1.7 2.7 1.3 2.8 .9 2.7 .6 2.8 .1 2.8-.3 2.7-.7 2.8-1.1 2.8-1.5 2.9-1.9 2.8-2.3 2.9-2.8 3-3.2 2.9-3.6 3.1-4.1 3-4.6 3.2-5.1 3.2-5.6 3.2-6.1 3.4-6.6 3.4-7.3 3.5-7.8 3.7-8.5 3.7-9.2 3.9-9.8 4-10.6 4.1-11.5 4.3-12.2 4.5-13.2 4.6-14.2 4.9-15.2 5.1-16.3 5.3-17.6 5.6-18.8 5.9-20.4 6.2-21.9 6.6-23.6 7-25.5 7.5-27.6 4.1-15.3M323.9 92l5.8 23.4 6.5 25.5 6.1 23.7 5.8 22.1 5.6 20.6 5.2 19.2 5.1 18 4.8 16.7 4.6 15.7 4.4 14.6 4.2 13.7 4.1 12.8 4 11.9 3.8 11.2 3.8 10.4 3.6 9.8 3.5 9.1 3.4 8.4 3.3 7.8 3.2 7.3 3.2 6.7 3.1 6.2 3.1 5.7 3 5.2 3 4.7 2.9 4.3 2.9 3.8 2.8 3.4 2.9 2.9 2.8 2.5 2.7 2.2 2.8 1.7 2.8 1.3 2.7 .9 2.8 .5 2.7 .1 2.8-.3 2.8-.7 2.7-1.1 2.8-1.5 2.9-1.9 2.8-2.3 2.9-2.8 2.9-3.2 3-3.6 3-4.1 3.1-4.6 3.1-5.1 3.2-5.6 3.3-6.1 3.3-6.6 3.4-7.3 3.6-7.8 3.6-8.5 3.7-9.1 3.9-9.9 4-10.6 4.1-11.4 4.3-12.3 4.4-13.2 4.7-14.1 4.8-15.2 5.1-16.3 5.3-17.6 5.6-18.8 5.9-20.3 6.2-21.9 6.6-23.6 7-25.5 7.4-27.5 3.6-13.6M325.3 92l5.4 21.8 6.5 25.5 6.1 23.6 5.7 22.1 5.5 20.6 5.3 19.1 5 17.9 4.7 16.8 4.6 15.6 4.4 14.6 4.3 13.7 4 12.8 4 11.9 3.8 11.2 3.7 10.4 3.6 9.8 3.5 9 3.4 8.5 3.3 7.8 3.2 7.3 3.2 6.7 3.1 6.2 3 5.7 3 5.1 3 4.8 2.9 4.2 2.9 3.8 2.8 3.4 2.8 2.9 2.8 2.6 2.8 2.1 2.8 1.7 2.7 1.3 2.8 .9 2.7 .5 2.7 .1 2.8-.3 2.8-.7 2.7-1.1 2.8-1.5 2.9-1.9 2.8-2.3 2.9-2.8 2.9-3.2 3-3.6 3-4.1 3.1-4.6 3.1-5.1 3.2-5.5 3.2-6.1 3.3-6.7 3.5-7.3 3.5-7.8 3.6-8.5 3.7-9.1 3.9-9.9 3.9-10.6 4.2-11.4 4.3-12.2 4.4-13.2 4.6-14.1 4.9-15.2 5.1-16.3 5.3-17.5 5.5-18.9 5.9-20.3 6.2-21.8 6.6-23.5 6.9-25.5 7.5-27.5 3.1-11.9M326.7 92l5 20.2 6.4 25.4 6.1 23.7 5.7 22 5.5 20.5 5.2 19.2 5 17.8 4.7 16.8 4.6 15.6 4.3 14.6 4.3 13.6 4 12.8 3.9 12 3.8 11.1 3.7 10.4 3.6 9.8 3.5 9 3.3 8.4 3.3 7.9 3.3 7.2 3.1 6.8 3.1 6.1 3.1 5.7 2.9 5.2 3 4.7 2.9 4.3 2.9 3.8 2.8 3.4 2.8 2.9 2.8 2.5 2.7 2.1 2.8 1.7 2.7 1.3 2.8 .9 2.7 .6 2.8 .1 2.7-.3 2.8-.7 2.7-1.1 2.8-1.5 2.9-1.9 2.8-2.4 2.9-2.7 2.9-3.2 2.9-3.7 3.1-4.1 3-4.6 3.1-5 3.2-5.6 3.3-6.1 3.3-6.7 3.4-7.2 3.5-7.9 3.6-8.4 3.7-9.2 3.9-9.8 3.9-10.6 4.2-11.4 4.2-12.3 4.5-13.1 4.6-14.2 4.8-15.1 5.1-16.3 5.3-17.5 5.6-18.8 5.8-20.3 6.2-21.8 6.6-23.5 6.9-25.4 7.4-27.5 2.7-10.2M328.1 92l4.6 18.6 6.4 25.4 6 23.6 5.7 22 5.4 20.5 5.2 19.1 4.9 17.9 4.8 16.6 4.5 15.6 4.4 14.6 4.2 13.7 4 12.7 3.9 12 3.8 11.1 3.6 10.4 3.6 9.8 3.5 9 3.3 8.4 3.3 7.9 3.2 7.2 3.2 6.7 3.1 6.2 3 5.7 3 5.2 2.9 4.7 2.9 4.2 2.8 3.8 2.9 3.4 2.8 3 2.7 2.5 2.8 2.1 2.7 1.7 2.8 1.3 2.7 .9 2.8 .5 2.7 .1 2.7-.3 2.8-.7 2.7-1.1 2.8-1.5 2.8-1.9 2.9-2.3 2.9-2.8 2.9-3.2 2.9-3.6 3-4.1 3.1-4.6 3.1-5.1 3.1-5.6 3.3-6.1 3.3-6.7 3.4-7.2 3.5-7.8 3.6-8.5 3.7-9.1 3.9-9.9 3.9-10.6 4.1-11.4 4.3-12.2 4.4-13.2 4.7-14.1 4.8-15.1 5-16.3 5.3-17.5 5.6-18.8 5.8-20.2 6.2-21.8 6.5-23.5 6.9-25.3 7.4-27.4 2.3-8.6M329.5 92l4.2 17 6.3 25.4 6 23.5 5.7 22 5.4 20.4 5.1 19.1 4.9 17.9 4.7 16.6 4.5 15.6 4.4 14.6 4.1 13.6 4.1 12.8 3.9 11.9 3.7 11.1 3.7 10.5 3.5 9.7 3.4 9 3.4 8.4 3.3 7.9 3.2 7.2 3.1 6.7 3.1 6.2 3 5.7 3 5.2 2.9 4.7 2.9 4.2 2.8 3.8 2.8 3.4 2.8 2.9 2.8 2.6 2.8 2.1 2.7 1.7 2.7 1.3 2.7 .9 2.8 .5 2.7 .1 2.7-.3 2.8-.7 2.7-1.1 2.8-1.5 2.8-1.9 2.9-2.4 2.8-2.7 2.9-3.2 3-3.7 3-4.1 3-4.6 3.1-5.1 3.2-5.5 3.2-6.1 3.4-6.7 3.4-7.2 3.4-7.9 3.6-8.5 3.8-9.1 3.8-9.8 3.9-10.6 4.1-11.4 4.3-12.3 4.4-13.1 4.6-14.1 4.8-15.1 5.1-16.3 5.2-17.4 5.6-18.8 5.8-20.2 6.2-21.7 6.5-23.5 6.9-25.3 7.3-27.3 1.9-7M330.9 92l3.8 15.5 6.3 25.3 5.9 23.5 5.7 21.9 5.3 20.4 5.1 19.1 4.9 17.8 4.7 16.7 4.5 15.5 4.3 14.6 4.1 13.6 4 12.7 3.9 12 3.8 11.1 3.6 10.4 3.5 9.7 3.4 9 3.4 8.4 3.2 7.9 3.2 7.2 3.1 6.7 3.1 6.2 3 5.7 3 5.1 2.9 4.7 2.9 4.3 2.8 3.8 2.8 3.4 2.8 2.9 2.8 2.5 2.7 2.1 2.7 1.7 2.8 1.3 2.7 .9 2.7 .5 2.7 .1 2.7-.3 2.8-.7 2.7-1.1 2.8-1.5 2.8-1.9 2.8-2.3 2.9-2.8 2.9-3.2 2.9-3.6 3-4.1 3.1-4.6 3.1-5.1 3.1-5.6 3.3-6.1 3.3-6.7 3.4-7.2 3.5-7.8 3.6-8.5 3.7-9.1 3.8-9.9 3.9-10.6 4.1-11.3 4.3-12.3 4.4-13.1 4.6-14.1 4.8-15.1 5-16.2 5.3-17.5 5.5-18.7 5.8-20.2 6.2-21.7 6.5-23.4 6.8-25.3 7.4-27.3 1.4-5.3M332.3 92l3.4 13.9 6.2 25.3 5.9 23.4 5.6 21.9 5.4 20.4 5 19.1 4.9 17.7 4.6 16.7 4.5 15.5 4.3 14.6 4.1 13.6 4 12.7 3.9 11.9 3.7 11.1 3.6 10.4 3.5 9.7 3.4 9.1 3.3 8.4 3.3 7.8 3.2 7.2 3.1 6.7 3 6.2 3 5.7 3 5.1 2.9 4.7 2.8 4.3 2.9 3.8 2.8 3.4 2.7 2.9 2.8 2.5 2.7 2.1 2.8 1.7 2.7 1.3 2.7 .9 2.7 .5 2.7 .1 2.8-.3 2.7-.7 2.7-1.1 2.8-1.5 2.8-1.9 2.8-2.3 2.9-2.8 2.9-3.2 2.9-3.7 3-4.1 3-4.6 3.1-5 3.2-5.6 3.2-6.1 3.3-6.7 3.4-7.2 3.5-7.9 3.6-8.4 3.7-9.2 3.8-9.8 3.9-10.6 4.1-11.4 4.2-12.2 4.5-13.1 4.5-14.1 4.8-15.1 5-16.2 5.3-17.4 5.5-18.7 5.8-20.2 6.1-21.7 6.5-23.3 6.9-25.2 7.3-27.3 1-3.7M333.7 92l3 12.4 6.2 25.2 5.8 23.4 5.6 21.8 5.3 20.4 5 19 4.9 17.8 4.6 16.6 4.4 15.5 4.3 14.6 4.1 13.6 4 12.7 3.8 11.9 3.7 11.1 3.6 10.4 3.5 9.7 3.4 9 3.3 8.4 3.3 7.8 3.1 7.2 3.1 6.7 3.1 6.2 2.9 5.7 3 5.1 2.9 4.8 2.8 4.2 2.8 3.8 2.8 3.4 2.8 2.9 2.8 2.5 2.7 2.1 2.7 1.7 2.7 1.3 2.7 .9 2.7 .5 2.7 .1 2.8-.3 2.7-.7 2.7-1.1 2.8-1.5 2.8-1.9 2.8-2.4 2.8-2.7 2.9-3.2 3-3.7 2.9-4.1 3.1-4.6 3.1-5.1 3.1-5.5 3.2-6.2 3.3-6.6 3.4-7.2 3.5-7.9 3.6-8.4 3.7-9.2 3.8-9.8 3.9-10.6 4.1-11.4 4.2-12.2 4.4-13.1 4.6-14 4.8-15.1 5-16.2 5.2-17.4 5.5-18.7 5.8-20.2 6.1-21.6 6.5-23.3 6.8-25.2 7.3-27.2 .6-2.1M335 92l2.6 10.8 6.2 25.2 5.8 23.4 5.6 21.8 5.2 20.3 5 19 4.8 17.8 4.6 16.5 4.5 15.6 4.2 14.5 4.1 13.6 3.9 12.7 3.8 11.8 3.7 11.1 3.6 10.4 3.5 9.7 3.4 9 3.3 8.4 3.2 7.8 3.2 7.3 3 6.7 3.1 6.1 2.9 5.7 3 5.2 2.9 4.7 2.8 4.2 2.8 3.8 2.8 3.4 2.8 2.9 2.7 2.5 2.7 2.1 2.7 1.7 2.7 1.3 2.7 .9 2.7 .5 2.7 .1 2.8-.3 2.7-.7 2.7-1.1 2.8-1.5 2.8-1.9 2.8-2.4 2.8-2.7 2.9-3.3 2.9-3.6 3-4.1 3-4.6 3.1-5.1 3.1-5.6 3.3-6.1 3.3-6.6 3.3-7.3 3.5-7.8 3.6-8.5 3.7-9.1 3.8-9.8 3.9-10.6 4.1-11.3 4.2-12.2 4.4-13.1 4.6-14.1 4.7-15.1 5-16.2 5.2-17.4 5.5-18.6 5.8-20.1 6.1-21.6 6.4-23.3 6.9-25.1 7.2-27.2 .2-.5M336.4 92l2.2 9.3 6.1 25.1 5.8 23.4 5.5 21.7 5.2 20.3 5 19 4.8 17.7 4.6 16.6 4.4 15.5 4.2 14.5 4.1 13.6 3.9 12.7 3.8 11.8 3.7 11.1 3.5 10.4 3.5 9.7 3.4 9 3.2 8.4 3.3 7.8 3.1 7.2 3.1 6.7 3 6.2 3 5.6 2.9 5.2 2.8 4.7 2.9 4.2 2.8 3.8 2.8 3.4 2.7 2.9 2.7 2.5 2.8 2.1 2.7 1.7 2.7 1.3 2.7 .9 2.7 .5 2.7 .1 2.7-.3 2.7-.7 2.7-1.1 2.8-1.5 2.7-1.9 2.8-2.4 2.9-2.8 2.9-3.2 2.9-3.6 2.9-4.1 3.1-4.6 3-5.1 3.2-5.6 3.2-6.1 3.3-6.6 3.4-7.3 3.4-7.8 3.6-8.5 3.7-9.1 3.8-9.8 3.9-10.6 4-11.3 4.3-12.2 4.3-13.1 4.6-14 4.8-15.1 4.9-16.2 5.3-17.4 5.4-18.6 5.8-20.1 6.1-21.5 6.4-23.3 6.8-25.1 7-26M337.7 92l1.9 7.8 6 25.1 5.8 23.3 5.5 21.7 5.2 20.3 4.9 18.9 4.8 17.7 4.5 16.6 4.4 15.4 4.2 14.5 4 13.6 3.9 12.7 3.8 11.8 3.7 11.1 3.5 10.4 3.5 9.6 3.3 9 3.3 8.4 3.2 7.8 3.1 7.3 3.1 6.6 3 6.2 3 5.7 2.9 5.1 2.8 4.7 2.9 4.3 2.8 3.8 2.7 3.3 2.8 2.9 2.7 2.6 2.7 2.1 2.7 1.6 2.7 1.3 2.7 .9 2.7 .5 2.7 .1 2.7-.3 2.7-.7 2.7-1.1 2.7-1.5 2.8-1.9 2.8-2.4 2.8-2.7 2.9-3.3 2.9-3.6 3-4.1 3-4.6 3.1-5.1 3.1-5.6 3.2-6.1 3.3-6.6 3.4-7.3 3.4-7.8 3.6-8.4 3.7-9.2 3.7-9.8 4-10.5 4-11.4 4.2-12.2 4.4-13.1 4.6-14 4.7-15 5-16.2 5.2-17.3 5.4-18.7 5.8-20 6.1-21.5 6.4-23.3 6.8-25 6.5-24.4M339 92l1.5 6.3 6 25 5.8 23.3 5.4 21.7 5.2 20.2 4.9 18.9 4.7 17.7 4.6 16.5 4.3 15.5 4.2 14.5 4 13.5 3.9 12.7 3.8 11.8 3.6 11.1 3.5 10.3 3.5 9.7 3.3 9 3.3 8.4 3.2 7.8 3.1 7.2 3 6.7 3 6.1 3 5.7 2.9 5.2 2.8 4.7 2.8 4.2 2.8 3.8 2.8 3.3 2.7 3 2.7 2.5 2.7 2.1 2.7 1.7 2.7 1.3 2.7 .9 2.7 .4 2.7 .1 2.7-.3 2.7-.7 2.7-1.1 2.7-1.5 2.8-1.9 2.8-2.4 2.8-2.7 2.9-3.2 2.9-3.7 2.9-4.1 3.1-4.6 3-5.1 3.1-5.6 3.2-6.1 3.3-6.6 3.4-7.2 3.4-7.9 3.6-8.4 3.7-9.1 3.7-9.9 3.9-10.5 4.1-11.4 4.2-12.1 4.4-13.1 4.5-14 4.7-15.1 5-16.1 5.2-17.3 5.5-18.6 5.7-20 6-21.5 6.4-23.2 6.8-25 6.1-22.8M340.3 92l1.2 4.8 5.9 25 5.7 23.2 5.4 21.7 5.2 20.2 4.9 18.9 4.7 17.6 4.5 16.5 4.3 15.5 4.2 14.4 4 13.5 3.8 12.7 3.8 11.8 3.6 11.1 3.5 10.3 3.4 9.7 3.4 9 3.2 8.4 3.2 7.8 3.1 7.2 3 6.7 3 6.1 3 5.7 2.8 5.1 2.9 4.7 2.8 4.2 2.8 3.8 2.7 3.4 2.8 2.9 2.7 2.5 2.7 2.1 2.7 1.7 2.6 1.3 2.7 .9 2.7 .5 2.7 .1 2.6-.3 2.7-.7 2.8-1.1 2.7-1.6 2.8-1.9 2.7-2.3 2.9-2.8 2.8-3.2 2.9-3.7 3-4.1 3-4.6 3.1-5 3.1-5.6 3.2-6.1 3.2-6.7 3.4-7.2 3.4-7.8 3.6-8.5 3.7-9.1 3.7-9.8 3.9-10.6 4.1-11.3 4.2-12.2 4.3-13 4.6-14 4.7-15.1 4.9-16.1 5.2-17.3 5.5-18.6 5.7-19.9 6-21.5 6.4-23.2 6.7-24.9 5.7-21.2M341.6 92l.8 3.3 5.9 24.9 5.7 23.2 5.4 21.6 5.1 20.2 4.9 18.9 4.6 17.6 4.5 16.5 4.3 15.4 4.1 14.5 4 13.5 3.9 12.6 3.7 11.8 3.6 11.1 3.5 10.3 3.4 9.7 3.3 9 3.3 8.4 3.1 7.7 3.1 7.3 3.1 6.6 2.9 6.2 3 5.6 2.8 5.2 2.9 4.7 2.8 4.2 2.7 3.8 2.8 3.3 2.7 3 2.7 2.5 2.7 2.1 2.7 1.7 2.6 1.2 2.7 .9 2.7 .5 2.7 .1 2.6-.3 2.7-.7 2.7-1.1 2.8-1.5 2.7-2 2.8-2.3 2.8-2.8 2.9-3.2 2.9-3.6 2.9-4.2 3-4.5 3.1-5.1 3.1-5.6 3.2-6.1 3.3-6.7 3.3-7.2 3.5-7.8 3.5-8.5 3.6-9.1 3.8-9.8 3.9-10.5 4-11.3 4.2-12.2 4.4-13 4.5-14 4.7-15.1 5-16.1 5.1-17.2 5.5-18.6 5.7-19.9 6-21.5 6.3-23.1 6.8-24.9 5.2-19.6M342.9 92l.4 1.9 5.9 24.8 5.7 23.2 5.3 21.6 5.1 20.1 4.8 18.8 4.7 17.6 4.4 16.5 4.3 15.4 4.1 14.4 4 13.5 3.8 12.7 3.7 11.8 3.6 11 3.5 10.4 3.4 9.6 3.3 9 3.2 8.4 3.2 7.7 3.1 7.2 3 6.7 2.9 6.2 3 5.6 2.8 5.2 2.9 4.6 2.7 4.3 2.8 3.8 2.7 3.3 2.8 2.9 2.6 2.5 2.7 2.1 2.7 1.7 2.7 1.3 2.6 .9 2.7 .5 2.7 .1 2.6-.3 2.7-.8 2.7-1.1 2.7-1.5 2.8-1.9 2.8-2.4 2.8-2.7 2.8-3.2 2.9-3.7 3-4.1 3-4.6 3-5.1 3.1-5.6 3.2-6.1 3.3-6.6 3.3-7.2 3.5-7.9 3.5-8.4 3.6-9.1 3.8-9.8 3.9-10.6 4-11.3 4.2-12.1 4.3-13.1 4.5-13.9 4.8-15 4.9-16.1 5.1-17.3 5.5-18.5 5.7-19.9 6-21.5 6.3-23 6.7-24.9 4.8-18M344.2 92l.1 .4 5.8 24.8 5.6 23.1 5.3 21.6 5.1 20.1 4.8 18.8 4.6 17.6 4.4 16.4 4.3 15.4 4.1 14.4 3.9 13.5 3.9 12.6 3.6 11.8 3.6 11.1 3.5 10.3 3.4 9.6 3.3 9 3.2 8.4 3.1 7.7 3.1 7.2 3 6.7 2.9 6.1 2.9 5.7 2.9 5.1 2.8 4.7 2.8 4.2 2.8 3.8 2.7 3.4 2.7 2.9 2.7 2.5 2.7 2.1 2.6 1.7 2.7 1.3 2.6 .8 2.7 .5 2.6 .1 2.7-.3 2.7-.7 2.7-1.1 2.7-1.5 2.8-2 2.7-2.3 2.8-2.8 2.9-3.2 2.9-3.7 2.9-4.1 3-4.6 3-5 3.2-5.6 3.1-6.1 3.3-6.7 3.3-7.2 3.5-7.8 3.5-8.4 3.6-9.1 3.8-9.8 3.9-10.6 4-11.3 4.1-12.1 4.4-13.1 4.5-13.9 4.7-15 4.9-16.1 5.2-17.2 5.4-18.5 5.6-19.9 6-21.4 6.4-23 6.6-24.8 4.4-16.5M345.4 92l5.6 23.7 5.6 23.1 5.2 21.5 5.1 20.1 4.8 18.7 4.6 17.6 4.4 16.4 4.2 15.4 4.1 14.4 3.9 13.5 3.8 12.6 3.7 11.8 3.5 11 3.5 10.3 3.3 9.6 3.3 9 3.2 8.4 3.1 7.7 3.1 7.2 3 6.7 2.9 6.1 2.9 5.7 2.9 5.1 2.8 4.7 2.8 4.2 2.7 3.8 2.7 3.4 2.7 2.9 2.7 2.5 2.7 2.1 2.6 1.6 2.7 1.3 2.6 .9 2.7 .5 2.6 .1 2.7-.3 2.7-.7 2.7-1.2 2.7-1.5 2.7-1.9 2.8-2.3 2.8-2.8 2.8-3.2 2.9-3.7 3-4.1 2.9-4.6 3.1-5.1 3.1-5.5 3.2-6.2 3.2-6.6 3.3-7.2 3.5-7.8 3.5-8.5 3.6-9.1 3.8-9.8 3.8-10.5 4-11.3 4.2-12.1 4.3-13 4.5-14 4.7-15 4.9-16 5.2-17.3 5.4-18.4 5.6-19.9 6-21.4 6.3-22.9 6.7-24.8 3.9-14.9M346.7 92l5.2 22.2 5.5 23 5.2 21.5 5 20.1 4.8 18.7 4.6 17.6 4.4 16.4 4.2 15.3 4 14.4 3.9 13.4 3.8 12.6 3.7 11.8 3.5 11 3.5 10.3 3.3 9.7 3.3 8.9 3.2 8.4 3.1 7.7 3 7.2 3 6.7 2.9 6.1 2.9 5.7 2.9 5.1 2.8 4.7 2.7 4.2 2.8 3.8 2.7 3.3 2.7 3 2.6 2.5 2.7 2 2.7 1.7 2.6 1.3 2.6 .9 2.7 .5 2.6 .1 2.7-.4 2.7-.7 2.7-1.1 2.7-1.5 2.7-1.9 2.8-2.4 2.8-2.8 2.8-3.2 2.9-3.6 2.9-4.1 3-4.6 3-5.1 3.1-5.6 3.2-6.1 3.2-6.6 3.3-7.2 3.5-7.9 3.5-8.4 3.6-9.1 3.7-9.8 3.9-10.5 4-11.3 4.2-12.1 4.3-13 4.5-14 4.7-14.9 4.9-16.1 5.1-17.2 5.4-18.4 5.6-19.9 6-21.3 6.3-22.9 6.6-24.7 3.6-13.4M347.9 92l4.9 20.7 5.4 23 5.3 21.5 4.9 20 4.8 18.7 4.5 17.5 4.4 16.4 4.2 15.3 4 14.4 3.9 13.4 3.7 12.6 3.7 11.8 3.5 11 3.4 10.3 3.4 9.6 3.2 9 3.2 8.3 3.1 7.8 3 7.2 3 6.6 2.9 6.1 2.9 5.7 2.8 5.1 2.8 4.7 2.8 4.2 2.7 3.8 2.7 3.3 2.7 3 2.7 2.4 2.6 2.1 2.7 1.7 2.6 1.3 2.6 .9 2.7 .5 2.6 0 2.7-.3 2.6-.7 2.7-1.1 2.7-1.5 2.8-2 2.7-2.3 2.8-2.8 2.8-3.2 2.9-3.7 2.9-4.1 3-4.6 3-5 3.1-5.6 3.2-6.1 3.2-6.7 3.3-7.2 3.5-7.8 3.5-8.4 3.6-9.1 3.7-9.8 3.9-10.5 4-11.3 4.1-12.1 4.3-13 4.5-13.9 4.7-15 4.9-16 5.1-17.2 5.4-18.4 5.6-19.8 5.9-21.3 6.3-22.9 6.7-24.7 3.1-11.8M349.2 92l4.4 19.2 5.5 23 5.2 21.4 4.9 20 4.7 18.7 4.5 17.5 4.4 16.3 4.1 15.4 4.1 14.3 3.8 13.4 3.8 12.6 3.6 11.8 3.5 11 3.4 10.3 3.3 9.6 3.3 8.9 3.1 8.4 3.1 7.7 3 7.2 3 6.6 2.9 6.2 2.9 5.6 2.8 5.1 2.8 4.7 2.7 4.2 2.8 3.8 2.7 3.3 2.6 3 2.7 2.4 2.6 2.1 2.7 1.7 2.6 1.3 2.6 .9 2.7 .5 2.6 0 2.7-.3 2.6-.7 2.7-1.1 2.7-1.5 2.7-2 2.8-2.3 2.8-2.8 2.8-3.2 2.8-3.7 3-4.1 2.9-4.6 3.1-5 3-5.6 3.2-6.1 3.2-6.7 3.3-7.2 3.5-7.8 3.5-8.4 3.6-9.1 3.7-9.8 3.9-10.5 3.9-11.3 4.2-12.1 4.3-13 4.5-13.9 4.6-14.9 4.9-16 5.1-17.2 5.3-18.4 5.7-19.8 5.9-21.2 6.3-22.9 6.6-24.6 2.7-10.3M350.4 92l4.1 17.8 5.4 22.9 5.2 21.4 4.9 19.9 4.7 18.7 4.5 17.5 4.3 16.3 4.1 15.3 4 14.3 3.9 13.4 3.7 12.6 3.6 11.7 3.5 11 3.4 10.3 3.3 9.6 3.2 9 3.2 8.3 3 7.7 3.1 7.2 2.9 6.7 2.9 6.1 2.9 5.6 2.8 5.2 2.8 4.6 2.7 4.2 2.7 3.8 2.7 3.4 2.7 2.9 2.6 2.5 2.7 2 2.6 1.7 2.6 1.3 2.6 .9 2.7 .5 2.6 0 2.6-.3 2.7-.7 2.7-1.1 2.7-1.5 2.7-2 2.7-2.3 2.8-2.8 2.8-3.2 2.9-3.7 2.9-4.1 3-4.6 3-5 3.1-5.6 3.1-6.1 3.2-6.7 3.3-7.2 3.4-7.8 3.5-8.4 3.7-9.1 3.7-9.8 3.8-10.5 4-11.2 4.1-12.1 4.3-13 4.5-13.9 4.6-14.9 4.9-16 5.1-17.2 5.3-18.3 5.7-19.8 5.9-21.2 6.2-22.8 6.6-24.6 2.3-8.8M351.6 92l3.8 16.3 5.3 22.9 5.2 21.3 4.8 20 4.7 18.6 4.5 17.4 4.3 16.4 4.1 15.2 4 14.4 3.8 13.4 3.7 12.5 3.6 11.7 3.5 11 3.4 10.3 3.3 9.6 3.2 8.9 3.1 8.4 3.1 7.7 3 7.2 2.9 6.6 2.9 6.1 2.8 5.7 2.9 5.1 2.7 4.7 2.8 4.2 2.7 3.7 2.6 3.4 2.7 2.9 2.6 2.5 2.7 2.1 2.6 1.6 2.6 1.3 2.6 .9 2.7 .5 2.6 0 2.6-.3 2.7-.7 2.6-1.1 2.7-1.5 2.7-2 2.8-2.3 2.7-2.8 2.9-3.2 2.8-3.7 2.9-4.1 3-4.6 3-5 3.1-5.6 3.1-6.1 3.2-6.7 3.3-7.2 3.4-7.8 3.5-8.4 3.6-9.1 3.7-9.7 3.9-10.5 4-11.3 4.1-12.1 4.3-13 4.4-13.8 4.7-14.9 4.8-16 5.1-17.1 5.3-18.4 5.6-19.7 5.9-21.2 6.3-22.8 6.5-24.5 2-7.3M352.8 92l3.4 14.9 5.4 22.8 5 21.3 4.9 19.9 4.6 18.6 4.5 17.4 4.2 16.3 4.2 15.3 3.9 14.3 3.8 13.4 3.7 12.5 3.6 11.7 3.5 11 3.3 10.3 3.3 9.6 3.2 8.9 3.1 8.3 3.1 7.8 3 7.1 2.9 6.7 2.9 6.1 2.8 5.6 2.8 5.1 2.8 4.7 2.7 4.2 2.7 3.8 2.7 3.3 2.6 2.9 2.7 2.5 2.6 2.1 2.6 1.7 2.6 1.2 2.6 .9 2.6 .5 2.7 .1 2.6-.4 2.6-.7 2.7-1.1 2.7-1.5 2.7-2 2.7-2.3 2.8-2.8 2.8-3.2 2.9-3.7 2.9-4.1 2.9-4.6 3-5 3.1-5.6 3.1-6.1 3.2-6.6 3.3-7.3 3.4-7.7 3.5-8.5 3.6-9 3.7-9.8 3.9-10.5 3.9-11.3 4.1-12 4.3-13 4.5-13.9 4.6-14.8 4.8-16 5.1-17.1 5.3-18.3 5.6-19.7 5.9-21.2 6.2-22.7 6.6-24.5 1.5-5.8M354 92l3.1 13.4 5.3 22.8 5 21.3 4.9 19.9 4.6 18.6 4.4 17.3 4.2 16.3 4.1 15.3 4 14.2 3.8 13.4 3.6 12.5 3.6 11.8 3.4 10.9 3.4 10.3 3.3 9.5 3.1 9 3.2 8.3 3 7.7 3 7.2 2.9 6.6 2.9 6.1 2.8 5.6 2.8 5.2 2.7 4.6 2.7 4.2 2.7 3.8 2.7 3.3 2.7 2.9 2.6 2.5 2.6 2.1 2.6 1.7 2.6 1.3 2.6 .8 2.6 .5 2.6 .1 2.7-.3 2.6-.8 2.7-1.1 2.6-1.5 2.7-1.9 2.8-2.4 2.7-2.8 2.8-3.2 2.9-3.6 2.9-4.2 2.9-4.5 3-5.1 3.1-5.6 3.1-6.1 3.2-6.6 3.3-7.2 3.4-7.8 3.5-8.4 3.6-9.1 3.7-9.8 3.8-10.4 4-11.3 4.1-12.1 4.3-12.9 4.4-13.9 4.6-14.8 4.9-16 5-17.1 5.3-18.3 5.6-19.6 5.9-21.2 6.2-22.7 6.5-24.4 1.1-4.3M355.2 92l2.7 12 5.3 22.7 5 21.3 4.8 19.8 4.6 18.6 4.4 17.4 4.2 16.2 4.1 15.2 3.9 14.3 3.8 13.4 3.6 12.5 3.6 11.7 3.4 10.9 3.4 10.3 3.2 9.5 3.2 9 3.1 8.3 3 7.7 3 7.2 2.9 6.6 2.9 6.1 2.8 5.6 2.7 5.1 2.8 4.7 2.7 4.2 2.7 3.8 2.6 3.3 2.7 2.9 2.6 2.5 2.6 2.1 2.6 1.6 2.6 1.3 2.6 .9 2.6 .4 2.6 .1 2.6-.3 2.7-.7 2.6-1.1 2.7-1.6 2.7-1.9 2.7-2.4 2.8-2.7 2.8-3.3 2.8-3.6 2.9-4.1 2.9-4.6 3-5.1 3.1-5.6 3.1-6.1 3.2-6.6 3.3-7.2 3.4-7.8 3.5-8.4 3.6-9.1 3.7-9.7 3.8-10.5 3.9-11.2 4.1-12.1 4.3-12.9 4.4-13.9 4.6-14.8 4.9-15.9 5-17.1 5.3-18.3 5.6-19.6 5.8-21.1 6.2-22.7 6.5-24.4 .8-2.8M356.3 92l2.4 10.6 5.3 22.7 5 21.2 4.8 19.8 4.5 18.5 4.4 17.4 4.2 16.2 4 15.2 3.9 14.3 3.8 13.3 3.6 12.5 3.6 11.7 3.4 10.9 3.3 10.3 3.2 9.5 3.2 9 3.1 8.3 3 7.7 3 7.1 2.9 6.7 2.8 6.1 2.8 5.6 2.8 5.1 2.7 4.7 2.7 4.2 2.7 3.7 2.7 3.3 2.6 2.9 2.6 2.5 2.6 2.1 2.6 1.7 2.6 1.2 2.6 .9 2.6 .5 2.6 .1 2.6-.4 2.6-.7 2.7-1.1 2.6-1.5 2.7-2 2.8-2.3 2.7-2.8 2.8-3.2 2.8-3.7 2.9-4.1 3-4.6 3-5.1 3-5.5 3.1-6.1 3.2-6.6 3.3-7.2 3.4-7.8 3.5-8.4 3.5-9.1 3.7-9.7 3.8-10.5 4-11.3 4.1-12 4.2-12.9 4.5-13.9 4.6-14.8 4.8-15.9 5-17 5.3-18.3 5.5-19.6 5.9-21.1 6.1-22.6 6.6-24.4 .3-1.3M357.5 92l2.1 9.2 5.2 22.6 5 21.2 4.7 19.8 4.5 18.5 4.4 17.3 4.2 16.2 4 15.2 3.9 14.2 3.7 13.4 3.6 12.5 3.5 11.6 3.5 11 3.3 10.2 3.2 9.5 3.1 9 3.1 8.3 3 7.7 3 7.1 2.9 6.6 2.8 6.1 2.8 5.6 2.8 5.2 2.7 4.6 2.7 4.2 2.6 3.8 2.7 3.3 2.6 2.9 2.6 2.5 2.6 2.1 2.6 1.6 2.6 1.3 2.6 .9 2.6 .4 2.6 .1 2.6-.3 2.6-.7 2.6-1.2 2.7-1.5 2.7-1.9 2.7-2.4 2.8-2.8 2.7-3.2 2.9-3.6 2.9-4.2 2.9-4.5 3-5.1 3-5.6 3.1-6.1 3.2-6.6 3.3-7.2 3.4-7.8 3.5-8.4 3.5-9 3.7-9.8 3.8-10.4 3.9-11.3 4.1-12 4.3-12.9 4.4-13.8 4.6-14.9 4.8-15.8 5-17.1 5.3-18.2 5.5-19.6 5.8-21 6.2-22.6 6.5-24.2M358.6 92l1.8 7.8 5.2 22.6 4.9 21.1 4.7 19.8 4.6 18.4 4.3 17.3 4.1 16.2 4 15.2 3.9 14.2 3.7 13.3 3.6 12.5 3.5 11.7 3.4 10.9 3.3 10.2 3.2 9.6 3.2 8.9 3 8.3 3 7.7 3 7.1 2.8 6.6 2.9 6.1 2.8 5.6 2.7 5.1 2.7 4.7 2.7 4.2 2.7 3.7 2.6 3.4 2.6 2.9 2.6 2.5 2.6 2 2.6 1.7 2.6 1.3 2.6 .8 2.6 .5 2.5 .1 2.6-.4 2.7-.7 2.6-1.1 2.7-1.5 2.6-2 2.7-2.3 2.8-2.8 2.8-3.2 2.8-3.7 2.9-4.1 2.9-4.6 3-5.1 3-5.5 3.1-6.1 3.2-6.6 3.3-7.2 3.4-7.8 3.4-8.4 3.6-9.1 3.7-9.7 3.8-10.5 3.9-11.2 4.1-12 4.2-12.9 4.4-13.8 4.6-14.8 4.8-15.9 5-17 5.3-18.2 5.5-19.6 5.8-21 6.1-22.5 6.1-22.7M359.8 92l1.4 6.4 5.2 22.6 4.9 21 4.7 19.8 4.5 18.4 4.3 17.3 4.1 16.2 4 15.1 3.8 14.2 3.7 13.3 3.6 12.5 3.5 11.6 3.4 11 3.3 10.2 3.2 9.5 3.1 8.9 3 8.3 3 7.7 3 7.1 2.8 6.6 2.9 6.1 2.7 5.6 2.8 5.1 2.7 4.7 2.7 4.2 2.6 3.7 2.6 3.3 2.6 2.9 2.6 2.5 2.6 2.1 2.6 1.7 2.6 1.2 2.6 .9 2.5 .5 2.6 0 2.6-.3 2.6-.7 2.7-1.1 2.6-1.6 2.7-1.9 2.7-2.4 2.7-2.8 2.8-3.2 2.8-3.6 2.9-4.1 2.9-4.6 3-5.1 3-5.6 3.1-6 3.2-6.7 3.3-7.2 3.4-7.7 3.4-8.4 3.6-9.1 3.6-9.7 3.8-10.5 3.9-11.2 4.1-12 4.2-12.9 4.4-13.8 4.6-14.8 4.8-15.8 5-17 5.3-18.2 5.5-19.5 5.8-21 6.1-22.5 5.6-21.2M360.9 92l1.1 5 5.2 22.5 4.8 21.1 4.7 19.7 4.5 18.4 4.3 17.2 4.1 16.2 3.9 15.1 3.9 14.2 3.6 13.3 3.6 12.4 3.5 11.7 3.3 10.9 3.3 10.2 3.2 9.5 3.1 8.9 3.1 8.3 2.9 7.7 2.9 7.1 2.9 6.6 2.8 6.1 2.8 5.6 2.7 5.1 2.7 4.7 2.7 4.2 2.6 3.7 2.7 3.3 2.6 2.9 2.5 2.5 2.6 2.1 2.6 1.6 2.6 1.3 2.5 .9 2.6 .4 2.6 .1 2.6-.3 2.6-.7 2.6-1.2 2.7-1.5 2.6-1.9 2.7-2.4 2.8-2.8 2.7-3.2 2.9-3.7 2.8-4.1 2.9-4.6 3-5 3-5.6 3.1-6.1 3.2-6.6 3.3-7.2 3.3-7.8 3.5-8.4 3.5-9 3.7-9.7 3.8-10.5 3.9-11.2 4.1-12 4.2-12.8 4.4-13.8 4.5-14.8 4.8-15.8 5-17 5.2-18.2 5.5-19.5 5.8-20.9 6.1-22.5 5.3-19.7M362 92l.8 3.6 5.1 22.5 4.9 21 4.6 19.7 4.5 18.4 4.2 17.2 4.1 16.1 4 15.2 3.8 14.1 3.6 13.3 3.6 12.4 3.5 11.7 3.3 10.9 3.3 10.2 3.1 9.5 3.1 8.9 3.1 8.2 2.9 7.7 2.9 7.2 2.9 6.6 2.8 6 2.8 5.6 2.7 5.1 2.7 4.7 2.6 4.2 2.7 3.7 2.6 3.3 2.6 2.9 2.6 2.5 2.5 2.1 2.6 1.6 2.6 1.3 2.5 .8 2.6 .5 2.6 .1 2.5-.3 2.6-.8 2.7-1.1 2.6-1.5 2.7-2 2.7-2.3 2.7-2.8 2.8-3.2 2.8-3.7 2.8-4.1 2.9-4.6 3-5 3-5.6 3.1-6.1 3.2-6.6 3.3-7.2 3.3-7.8 3.5-8.4 3.5-9 3.7-9.7 3.7-10.4 3.9-11.2 4.1-12 4.2-12.9 4.4-13.8 4.6-14.7 4.7-15.8 5-17 5.2-18.1 5.5-19.5 5.8-20.9 6.1-22.5 4.8-18.2M363.2 92l.4 2.2 5.1 22.5 4.8 21 4.7 19.6 4.4 18.4 4.2 17.2 4.1 16.1 3.9 15.1 3.8 14.1 3.7 13.3 3.5 12.4 3.4 11.6 3.4 10.9 3.2 10.2 3.2 9.5 3.1 8.9 3 8.3 2.9 7.6 2.9 7.2 2.9 6.6 2.8 6.1 2.7 5.5 2.7 5.1 2.7 4.7 2.7 4.2 2.6 3.7 2.6 3.3 2.6 2.9 2.6 2.5 2.5 2.1 2.6 1.6 2.5 1.3 2.6 .8 2.6 .5 2.5 .1 2.6-.4 2.6-.7 2.6-1.1 2.6-1.5 2.7-2 2.7-2.3 2.7-2.8 2.8-3.2 2.8-3.7 2.8-4.1 3-4.6 2.9-5.1 3-5.5 3.1-6.1 3.2-6.6 3.3-7.2 3.3-7.8 3.4-8.4 3.6-9 3.6-9.7 3.8-10.4 3.9-11.2 4-12 4.2-12.9 4.4-13.7 4.6-14.8 4.7-15.7 5-17 5.2-18.1 5.5-19.4 5.7-20.9 6.1-22.4 4.5-16.8M364.3 92l.1 .9 5.1 22.4 4.8 20.9 4.6 19.6 4.4 18.4 4.2 17.2 4 16.1 3.9 15 3.8 14.2 3.6 13.2 3.6 12.4 3.4 11.6 3.3 10.9 3.2 10.2 3.2 9.5 3.1 8.8 3 8.3 2.9 7.7 2.9 7.1 2.8 6.6 2.8 6.1 2.8 5.6 2.7 5.1 2.6 4.6 2.7 4.2 2.6 3.7 2.6 3.3 2.6 2.9 2.6 2.5 2.5 2.1 2.6 1.6 2.5 1.3 2.6 .8 2.5 .5 2.6 .1 2.6-.4 2.6-.7 2.6-1.1 2.6-1.5 2.6-2 2.7-2.3 2.8-2.8 2.7-3.2 2.8-3.7 2.9-4.1 2.9-4.6 2.9-5.1 3-5.5 3.1-6.1 3.2-6.6 3.2-7.2 3.4-7.8 3.4-8.3 3.5-9.1 3.7-9.7 3.7-10.4 3.9-11.2 4.1-12 4.2-12.8 4.3-13.7 4.6-14.8 4.7-15.7 5-16.9 5.2-18.1 5.4-19.5 5.8-20.8 6-22.4 4.1-15.3M365.4 92l4.8 21.9 4.8 20.9 4.6 19.6 4.4 18.3 4.2 17.2 4 16 3.9 15.1 3.7 14.1 3.6 13.2 3.6 12.4 3.4 11.6 3.3 10.9 3.2 10.2 3.1 9.4 3.1 8.9 3 8.3 2.9 7.6 2.9 7.2 2.8 6.5 2.8 6.1 2.7 5.6 2.7 5.1 2.7 4.6 2.6 4.2 2.6 3.7 2.6 3.4 2.6 2.8 2.6 2.5 2.5 2.1 2.6 1.6 2.5 1.3 2.5 .8 2.6 .5 2.6 .1 2.5-.4 2.6-.7 2.6-1.1 2.6-1.5 2.7-2 2.7-2.3 2.7-2.8 2.7-3.2 2.8-3.7 2.9-4.1 2.9-4.6 2.9-5.1 3-5.5 3.1-6.1 3.2-6.6 3.2-7.2 3.4-7.8 3.4-8.3 3.5-9 3.6-9.7 3.8-10.5 3.9-11.1 4-12 4.2-12.8 4.4-13.8 4.5-14.7 4.7-15.7 5-16.9 5.2-18.1 5.4-19.4 5.7-20.8 6.1-22.3 3.7-13.9M366.4 92l4.6 20.5 4.8 20.9 4.5 19.5 4.3 18.3 4.2 17.2 4 16 3.9 15 3.7 14.1 3.6 13.3 3.5 12.3 3.4 11.6 3.3 10.9 3.2 10.1 3.1 9.5 3.1 8.9 3 8.2 2.9 7.7 2.9 7.1 2.8 6.6 2.7 6.1 2.8 5.5 2.7 5.1 2.6 4.7 2.6 4.1 2.6 3.8 2.6 3.3 2.6 2.9 2.6 2.4 2.5 2.1 2.5 1.6 2.6 1.3 2.5 .9 2.6 .4 2.5 .1 2.6-.3 2.6-.8 2.6-1.1 2.6-1.5 2.6-2 2.7-2.3 2.7-2.8 2.8-3.2 2.7-3.7 2.9-4.1 2.9-4.6 2.9-5.1 3-5.5 3.1-6.1 3.2-6.6 3.2-7.2 3.3-7.7 3.4-8.4 3.6-9 3.6-9.7 3.7-10.4 3.9-11.2 4.1-11.9 4.1-12.9 4.4-13.7 4.5-14.7 4.7-15.7 5-16.9 5.1-18 5.5-19.4 5.7-20.7 6-22.3 3.3-12.5M367.5 92l4.3 19.1 4.7 20.9 4.5 19.5 4.3 18.3 4.2 17.1 4 16 3.8 15 3.7 14.1 3.6 13.2 3.5 12.4 3.4 11.5 3.3 10.9 3.1 10.1 3.2 9.5 3 8.9 3 8.2 2.9 7.7 2.8 7.1 2.8 6.5 2.8 6.1 2.7 5.6 2.7 5.1 2.6 4.6 2.7 4.2 2.6 3.7 2.5 3.3 2.6 2.9 2.5 2.5 2.6 2 2.5 1.7 2.6 1.2 2.5 .9 2.5 .4 2.6 .1 2.5-.3 2.6-.8 2.6-1.1 2.6-1.5 2.7-2 2.6-2.3 2.7-2.8 2.8-3.2 2.8-3.7 2.8-4.1 2.9-4.6 2.9-5 3-5.6 3.1-6.1 3.2-6.6 3.2-7.1 3.3-7.8 3.4-8.4 3.5-9 3.6-9.7 3.8-10.4 3.9-11.1 4-12 4.2-12.8 4.3-13.7 4.5-14.7 4.7-15.7 5-16.8 5.1-18 5.4-19.4 5.7-20.7 6.1-22.3 2.9-11M368.6 92l3.9 17.8 4.7 20.8 4.5 19.5 4.3 18.2 4.1 17.1 4 16 3.8 15 3.7 14 3.6 13.2 3.5 12.4 3.3 11.6 3.3 10.8 3.2 10.1 3.1 9.5 3 8.8 3 8.3 2.9 7.6 2.8 7.1 2.8 6.6 2.7 6.1 2.8 5.5 2.6 5.1 2.7 4.6 2.6 4.2 2.6 3.7 2.5 3.4 2.6 2.8 2.5 2.5 2.6 2.1 2.5 1.6 2.5 1.3 2.6 .8 2.5 .5 2.5 0 2.6-.3 2.6-.7 2.5-1.2 2.6-1.5 2.7-1.9 2.7-2.4 2.7-2.8 2.7-3.2 2.8-3.7 2.8-4.1 2.9-4.5 2.9-5.1 3-5.6 3.1-6 3.1-6.6 3.3-7.2 3.3-7.8 3.4-8.3 3.5-9 3.6-9.7 3.7-10.4 3.9-11.1 4-12 4.2-12.8 4.3-13.7 4.5-14.6 4.7-15.7 4.9-16.8 5.2-18 5.4-19.4 5.7-20.7 6-22.2 2.5-9.6M369.7 92l3.6 16.4 4.6 20.8 4.5 19.4 4.3 18.2 4.1 17.1 3.9 16 3.9 15 3.6 14 3.6 13.2 3.4 12.3 3.4 11.6 3.2 10.8 3.2 10.1 3.1 9.5 3 8.8 3 8.3 2.8 7.6 2.9 7.1 2.8 6.6 2.7 6 2.7 5.6 2.7 5.1 2.6 4.6 2.6 4.2 2.6 3.7 2.6 3.3 2.5 2.9 2.5 2.4 2.6 2.1 2.5 1.6 2.5 1.3 2.5 .8 2.6 .5 2.5 .1 2.5-.4 2.6-.7 2.6-1.1 2.6-1.6 2.6-1.9 2.7-2.4 2.7-2.8 2.7-3.2 2.8-3.6 2.8-4.1 2.9-4.6 2.9-5.1 3-5.5 3.1-6.1 3.1-6.6 3.2-7.2 3.3-7.7 3.4-8.4 3.5-9 3.7-9.6 3.7-10.4 3.9-11.2 4-11.9 4.1-12.8 4.3-13.7 4.5-14.6 4.7-15.7 4.9-16.8 5.2-18 5.4-19.2 5.6-20.7 6-22.2 2.2-8.2M370.7 92l3.3 15 4.7 20.8 4.4 19.4 4.3 18.2 4 17 4 16 3.8 15 3.6 14 3.6 13.1 3.4 12.4 3.3 11.5 3.3 10.8 3.1 10.1 3.1 9.5 3 8.8 2.9 8.2 2.9 7.7 2.8 7.1 2.8 6.5 2.7 6.1 2.7 5.6 2.7 5 2.6 4.7 2.6 4.1 2.6 3.8 2.6 3.3 2.5 2.8 2.5 2.5 2.5 2 2.6 1.7 2.5 1.2 2.5 .9 2.5 .4 2.5 .1 2.6-.3 2.5-.8 2.6-1.1 2.6-1.5 2.6-2 2.7-2.3 2.7-2.8 2.7-3.2 2.8-3.7 2.8-4.1 2.9-4.6 2.9-5 3-5.6 3.1-6.1 3.1-6.6 3.2-7.1 3.3-7.8 3.4-8.3 3.5-9 3.6-9.7 3.7-10.3 3.9-11.2 4-11.9 4.1-12.8 4.3-13.6 4.5-14.7 4.7-15.6 4.9-16.8 5.2-18 5.3-19.2 5.7-20.6 6-22.2 1.8-6.8M371.8 92l3 13.7 4.6 20.7 4.4 19.4 4.2 18.1 4.1 17.1 3.9 15.9 3.8 15 3.6 14 3.6 13.1 3.4 12.3 3.3 11.6 3.2 10.8 3.1 10.1 3.1 9.4 3 8.8 2.9 8.2 2.9 7.7 2.8 7.1 2.8 6.5 2.7 6.1 2.7 5.5 2.6 5.1 2.6 4.6 2.6 4.2 2.6 3.7 2.6 3.3 2.5 2.9 2.5 2.4 2.5 2.1 2.5 1.6 2.5 1.3 2.6 .8 2.5 .5 2.5 .1 2.5-.4 2.6-.7 2.6-1.1 2.6-1.6 2.6-1.9 2.6-2.4 2.7-2.8 2.7-3.2 2.8-3.6 2.8-4.2 2.9-4.5 2.9-5.1 3-5.5 3.1-6.1 3.1-6.6 3.2-7.2 3.3-7.7 3.4-8.3 3.5-9 3.6-9.7 3.7-10.4 3.8-11.1 4-11.9 4.2-12.7 4.3-13.7 4.4-14.6 4.7-15.7 4.9-16.7 5.1-17.9 5.4-19.3 5.6-20.6 6-22.1 1.4-5.4M372.8 92l2.7 12.3 4.6 20.7 4.4 19.4 4.2 18.1 4 17 3.9 15.9 3.8 15 3.6 14 3.5 13.1 3.4 12.3 3.3 11.5 3.2 10.8 3.2 10.1 3 9.4 3 8.8 2.9 8.3 2.9 7.6 2.8 7.1 2.7 6.5 2.7 6.1 2.7 5.5 2.7 5.1 2.6 4.6 2.6 4.2 2.5 3.7 2.6 3.3 2.5 2.9 2.5 2.4 2.5 2.1 2.5 1.6 2.5 1.3 2.5 .8 2.5 .5 2.5 0 2.6-.3 2.5-.8 2.6-1.1 2.6-1.5 2.6-2 2.6-2.3 2.7-2.8 2.8-3.2 2.7-3.7 2.8-4.1 2.9-4.6 2.9-5 3-5.6 3-6 3.2-6.6 3.2-7.2 3.2-7.7 3.4-8.4 3.5-9 3.6-9.6 3.7-10.4 3.9-11.1 3.9-11.9 4.2-12.7 4.3-13.7 4.4-14.6 4.7-15.6 4.9-16.7 5.1-17.9 5.4-19.2 5.6-20.6 5.9-22.1 1.1-4M373.9 92l2.3 11 4.6 20.7 4.4 19.3 4.2 18.1 4 17 3.9 15.9 3.7 14.9 3.6 14 3.5 13.1 3.4 12.3 3.3 11.5 3.2 10.7 3.1 10.1 3 9.5 3 8.8 2.9 8.2 2.8 7.6 2.8 7.1 2.8 6.5 2.7 6.1 2.7 5.5 2.6 5.1 2.6 4.6 2.6 4.1 2.5 3.8 2.6 3.3 2.5 2.8 2.5 2.5 2.5 2 2.5 1.7 2.5 1.2 2.5 .9 2.5 .4 2.5 .1 2.5-.4 2.6-.7 2.5-1.1 2.6-1.6 2.6-1.9 2.7-2.4 2.6-2.8 2.8-3.2 2.7-3.6 2.8-4.1 2.9-4.6 2.9-5.1 3-5.5 3-6.1 3.1-6.6 3.2-7.1 3.3-7.7 3.4-8.4 3.5-9 3.6-9.6 3.7-10.4 3.8-11.1 4-11.9 4.1-12.7 4.3-13.6 4.4-14.6 4.7-15.6 4.9-16.7 5.1-17.9 5.3-19.2 5.6-20.5 6-22 .7-2.7M374.9 92l2.1 9.7 4.5 20.6 4.4 19.3 4.1 18.1 4 16.9 3.9 15.9 3.7 14.9 3.6 14 3.5 13.1 3.3 12.2 3.3 11.5 3.2 10.8 3.1 10.1 3 9.4 3 8.8 2.9 8.2 2.8 7.6 2.8 7.1 2.7 6.5 2.7 6.1 2.7 5.5 2.6 5.1 2.6 4.6 2.6 4.1 2.5 3.8 2.6 3.2 2.5 2.9 2.5 2.5 2.5 2 2.5 1.6 2.4 1.3 2.5 .8 2.5 .5 2.5 0 2.6-.3 2.5-.7 2.6-1.2 2.5-1.5 2.7-1.9 2.6-2.4 2.7-2.8 2.7-3.2 2.7-3.7 2.8-4.1 2.9-4.5 2.9-5.1 3-5.5 3-6.1 3.1-6.6 3.2-7.1 3.3-7.8 3.3-8.3 3.5-9 3.6-9.6 3.7-10.3 3.8-11.1 4-11.9 4.1-12.7 4.3-13.7 4.5-14.5 4.6-15.6 4.9-16.7 5-17.9 5.4-19.1 5.6-20.5 5.9-22 .3-1.3M375.9 92l1.8 8.4 4.5 20.6 4.3 19.2 4.2 18.1 4 16.9 3.8 15.8 3.7 14.9 3.6 14 3.4 13 3.4 12.3 3.2 11.5 3.2 10.8 3.1 10 3 9.4 3 8.8 2.9 8.2 2.8 7.6 2.8 7.1 2.7 6.5 2.7 6.1 2.6 5.5 2.6 5.1 2.6 4.6 2.6 4.1 2.5 3.7 2.5 3.3 2.6 2.9 2.5 2.4 2.4 2.1 2.5 1.6 2.5 1.3 2.5 .8 2.5 .5 2.5 0 2.5-.3 2.5-.8 2.6-1.1 2.6-1.5 2.6-2 2.6-2.3 2.7-2.8 2.7-3.2 2.7-3.7 2.8-4.1 2.9-4.6 2.9-5 2.9-5.6 3.1-6 3.1-6.6 3.2-7.1 3.2-7.8 3.4-8.3 3.5-9 3.5-9.6 3.7-10.3 3.9-11.1 3.9-11.9 4.1-12.7 4.3-13.6 4.5-14.5 4.6-15.6 4.8-16.7 5.1-17.8 5.3-19.1 5.6-20.5 5.9-21.9M376.9 92l1.5 7.1 4.5 20.5 4.3 19.2 4.1 18.1 4 16.9 3.8 15.8 3.7 14.9 3.5 13.9 3.5 13.1 3.3 12.2 3.3 11.5 3.1 10.7 3.1 10.1 3 9.4 3 8.8 2.8 8.2 2.8 7.6 2.8 7 2.7 6.6 2.7 6 2.6 5.5 2.7 5.1 2.5 4.6 2.6 4.1 2.5 3.7 2.5 3.3 2.5 2.9 2.5 2.4 2.5 2.1 2.5 1.6 2.5 1.3 2.5 .8 2.4 .5 2.5 0 2.6-.3 2.5-.8 2.5-1.1 2.6-1.5 2.6-2 2.6-2.4 2.7-2.7 2.7-3.2 2.7-3.7 2.8-4.1 2.9-4.6 2.9-5 2.9-5.6 3.1-6 3.1-6.6 3.1-7.1 3.3-7.8 3.4-8.3 3.4-8.9 3.6-9.7 3.7-10.3 3.8-11.1 3.9-11.8 4.1-12.7 4.3-13.6 4.5-14.6 4.6-15.5 4.8-16.6 5.1-17.9 5.3-19 5.6-20.5 5.5-20.5M377.9 92l1.2 5.8 4.5 20.5 4.3 19.2 4.1 18 3.9 16.8 3.8 15.9 3.7 14.8 3.5 13.9 3.5 13.1 3.3 12.2 3.2 11.5 3.2 10.7 3 10.1 3 9.4 2.9 8.7 2.9 8.2 2.8 7.6 2.8 7.1 2.7 6.5 2.6 6 2.7 5.5 2.6 5.1 2.5 4.6 2.6 4.1 2.5 3.8 2.5 3.2 2.5 2.9 2.5 2.4 2.5 2.1 2.5 1.6 2.4 1.3 2.5 .8 2.5 .4 2.5 .1 2.5-.3 2.5-.8 2.6-1.1 2.5-1.6 2.6-1.9 2.6-2.4 2.7-2.7 2.7-3.3 2.7-3.6 2.8-4.1 2.9-4.6 2.8-5 3-5.6 3-6 3.1-6.6 3.2-7.1 3.3-7.8 3.3-8.3 3.5-8.9 3.5-9.6 3.7-10.4 3.8-11 4-11.9 4.1-12.7 4.2-13.5 4.5-14.6 4.6-15.5 4.8-16.6 5.1-17.8 5.3-19 5.5-20.5 5.1-19.1M378.9 92l.9 4.5 4.5 20.4 4.2 19.2 4.1 18 3.9 16.8 3.8 15.8 3.7 14.8 3.5 13.9 3.4 13.1 3.3 12.2 3.2 11.5 3.2 10.7 3 10 3 9.4 2.9 8.8 2.9 8.2 2.8 7.6 2.7 7 2.7 6.5 2.7 6 2.6 5.6 2.6 5 2.6 4.6 2.5 4.2 2.5 3.7 2.5 3.2 2.5 2.9 2.5 2.4 2.5 2.1 2.4 1.6 2.5 1.3 2.5 .8 2.4 .4 2.5 .1 2.5-.3 2.5-.8 2.6-1.1 2.5-1.6 2.6-1.9 2.7-2.4 2.6-2.8 2.7-3.2 2.7-3.6 2.8-4.1 2.8-4.6 2.9-5 3-5.6 3-6 3.1-6.6 3.2-7.1 3.2-7.7 3.4-8.4 3.4-8.9 3.6-9.6 3.7-10.3 3.8-11.1 3.9-11.8 4.1-12.7 4.2-13.5 4.4-14.6 4.7-15.5 4.8-16.6 5-17.7 5.3-19 5.6-20.4 4.7-17.8M379.9 92l.7 3.2 4.4 20.4 4.2 19.2 4.1 17.9 3.9 16.8 3.7 15.8 3.7 14.8 3.5 13.9 3.4 13 3.3 12.2 3.2 11.5 3.1 10.7 3 10 3 9.4 2.9 8.8 2.8 8.1 2.8 7.6 2.8 7 2.7 6.6 2.6 6 2.6 5.5 2.6 5.1 2.6 4.5 2.5 4.2 2.5 3.7 2.5 3.3 2.5 2.8 2.5 2.5 2.4 2 2.5 1.6 2.5 1.3 2.4 .8 2.5 .5 2.5 0 2.5-.3 2.5-.8 2.5-1.1 2.6-1.6 2.5-1.9 2.7-2.4 2.6-2.7 2.7-3.3 2.7-3.6 2.8-4.1 2.8-4.6 2.9-5 3-5.6 3-6 3.1-6.6 3.1-7.1 3.3-7.7 3.3-8.3 3.5-9 3.5-9.6 3.7-10.3 3.8-11 3.9-11.8 4.1-12.7 4.2-13.6 4.4-14.4 4.6-15.5 4.9-16.6 5-17.8 5.3-18.9 5.5-20.4 4.4-16.4M380.9 92l.4 1.9 4.3 20.4 4.3 19.1 4 17.9 3.9 16.8 3.7 15.8 3.6 14.8 3.5 13.8 3.4 13 3.3 12.2 3.2 11.5 3.1 10.7 3 10 3 9.4 2.9 8.7 2.8 8.2 2.8 7.6 2.7 7 2.7 6.5 2.6 6 2.6 5.5 2.6 5.1 2.6 4.6 2.5 4.1 2.5 3.7 2.5 3.3 2.5 2.8 2.4 2.5 2.5 2 2.5 1.7 2.4 1.2 2.5 .8 2.4 .5 2.5 0 2.5-.3 2.5-.8 2.5-1.1 2.6-1.5 2.6-2 2.6-2.4 2.6-2.7 2.7-3.2 2.7-3.7 2.8-4.1 2.8-4.6 2.9-5 2.9-5.5 3.1-6.1 3-6.6 3.2-7.1 3.2-7.7 3.4-8.3 3.4-8.9 3.6-9.6 3.6-10.3 3.8-11.1 3.9-11.8 4.1-12.6 4.2-13.5 4.4-14.5 4.6-15.5 4.8-16.6 5.1-17.7 5.2-18.9 5.5-20.3 4.1-15.1M381.8 92l.2 .6 4.3 20.4 4.2 19.1 4 17.9 3.9 16.7 3.7 15.8 3.6 14.7 3.5 13.9 3.4 13 3.2 12.2 3.2 11.4 3.1 10.7 3 10 3 9.4 2.9 8.7 2.8 8.2 2.7 7.5 2.8 7.1 2.6 6.5 2.7 6 2.6 5.5 2.5 5 2.6 4.6 2.5 4.2 2.5 3.7 2.5 3.2 2.4 2.9 2.5 2.4 2.5 2 2.4 1.7 2.5 1.2 2.4 .8 2.5 .5 2.5 0 2.4-.3 2.5-.7 2.6-1.2 2.5-1.5 2.6-2 2.6-2.3 2.6-2.8 2.7-3.2 2.7-3.7 2.8-4.1 2.8-4.5 2.9-5.1 2.9-5.5 3-6.1 3.1-6.5 3.2-7.1 3.2-7.7 3.3-8.3 3.5-9 3.5-9.6 3.7-10.3 3.7-11 4-11.8 4-12.6 4.2-13.5 4.4-14.5 4.6-15.4 4.8-16.6 5-17.7 5.3-18.9 5.5-20.3 3.6-13.7M382.8 92l4.2 19.7 4.2 19 4 17.9 3.8 16.8 3.7 15.7 3.6 14.7 3.5 13.9 3.3 12.9 3.3 12.2 3.1 11.4 3.1 10.7 3 10 3 9.4 2.8 8.7 2.8 8.1 2.8 7.6 2.7 7 2.7 6.5 2.6 6 2.6 5.5 2.5 5.1 2.6 4.6 2.5 4.1 2.5 3.7 2.5 3.3 2.4 2.8 2.5 2.4 2.4 2.1 2.5 1.6 2.4 1.2 2.5 .9 2.4 .4 2.5 .1 2.5-.4 2.5-.7 2.5-1.2 2.5-1.5 2.6-2 2.6-2.3 2.6-2.8 2.7-3.2 2.7-3.7 2.8-4.1 2.8-4.5 2.9-5.1 2.9-5.5 3-6 3.1-6.6 3.1-7.1 3.3-7.7 3.3-8.3 3.4-8.9 3.5-9.6 3.7-10.3 3.8-11 3.9-11.8 4-12.6 4.2-13.5 4.4-14.5 4.6-15.4 4.8-16.5 5-17.7 5.2-18.9 5.5-20.2 3.3-12.4M383.8 92l3.9 18.4 4.1 19 4 17.9 3.8 16.7 3.7 15.7 3.6 14.7 3.4 13.8 3.4 13 3.2 12.1 3.2 11.4 3 10.7 3 10 2.9 9.4 2.9 8.7 2.8 8.1 2.7 7.6 2.7 7 2.7 6.5 2.6 6 2.6 5.5 2.6 5 2.5 4.6 2.5 4.1 2.5 3.7 2.4 3.3 2.5 2.9 2.4 2.4 2.5 2 2.4 1.6 2.5 1.3 2.4 .8 2.5 .5 2.4 0 2.5-.3 2.5-.8 2.5-1.1 2.5-1.6 2.6-1.9 2.6-2.4 2.6-2.8 2.7-3.2 2.7-3.6 2.8-4.1 2.8-4.6 2.8-5 3-5.5 3-6.1 3-6.5 3.2-7.2 3.2-7.6 3.3-8.3 3.4-8.9 3.6-9.6 3.6-10.3 3.8-11 3.9-11.8 4-12.6 4.2-13.5 4.4-14.4 4.6-15.4 4.8-16.5 4.9-17.7 5.3-18.8 5.5-20.3 2.9-11M384.7 92l3.6 17.1 4.2 19 3.9 17.8 3.8 16.7 3.7 15.7 3.5 14.7 3.5 13.8 3.3 12.9 3.2 12.2 3.2 11.4 3 10.6 3 10 2.9 9.4 2.9 8.7 2.8 8.1 2.7 7.6 2.7 7 2.6 6.5 2.6 6 2.6 5.5 2.6 5 2.5 4.6 2.5 4.1 2.5 3.7 2.4 3.3 2.5 2.8 2.4 2.4 2.4 2.1 2.5 1.6 2.4 1.2 2.5 .9 2.4 .4 2.5 0 2.4-.3 2.5-.8 2.5-1.1 2.6-1.5 2.5-2 2.6-2.3 2.6-2.8 2.7-3.2 2.7-3.7 2.8-4.1 2.8-4.5 2.8-5.1 2.9-5.5 3-6 3.1-6.6 3.1-7.1 3.3-7.7 3.3-8.3 3.4-8.9 3.5-9.5 3.6-10.3 3.8-11 3.9-11.8 4-12.6 4.2-13.5 4.4-14.4 4.6-15.4 4.7-16.4 5-17.7 5.2-18.8 5.5-20.2 2.6-9.7M385.7 92l3.3 15.8 4.1 19 3.9 17.8 3.8 16.7 3.7 15.6 3.5 14.7 3.4 13.8 3.3 12.9 3.3 12.1 3.1 11.4 3 10.7 3 10 2.9 9.3 2.8 8.7 2.8 8.1 2.7 7.6 2.7 7 2.7 6.5 2.6 6 2.5 5.5 2.6 5 2.5 4.5 2.5 4.2 2.4 3.7 2.5 3.2 2.4 2.9 2.5 2.4 2.4 2 2.4 1.6 2.5 1.3 2.4 .8 2.4 .4 2.5 .1 2.5-.4 2.4-.7 2.5-1.1 2.6-1.6 2.5-1.9 2.6-2.4 2.6-2.8 2.7-3.2 2.7-3.6 2.7-4.1 2.8-4.6 2.9-5 2.9-5.5 3-6.1 3.1-6.5 3.1-7.1 3.2-7.7 3.3-8.3 3.4-8.9 3.5-9.6 3.7-10.2 3.7-11 3.9-11.8 4-12.6 4.2-13.4 4.4-14.4 4.6-15.4 4.7-16.4 5-17.6 5.2-18.9 5.4-20.1 2.3-8.4M386.6 92l3.1 14.6 4 18.9 4 17.8 3.7 16.6 3.7 15.6 3.5 14.7 3.4 13.8 3.3 12.9 3.2 12.1 3.1 11.4 3 10.6 3 10 2.9 9.3 2.8 8.7 2.8 8.1 2.7 7.6 2.7 7 2.6 6.5 2.6 5.9 2.5 5.5 2.6 5.1 2.5 4.5 2.5 4.1 2.4 3.7 2.5 3.3 2.4 2.8 2.4 2.5 2.5 2 2.4 1.6 2.4 1.2 2.4 .9 2.5 .4 2.4 0 2.5-.3 2.5-.8 2.5-1.1 2.5-1.5 2.5-2 2.6-2.3 2.6-2.8 2.7-3.2 2.7-3.7 2.7-4.1 2.8-4.5 2.9-5.1 2.9-5.5 3-6 3-6.6 3.1-7.1 3.3-7.6 3.3-8.3 3.4-8.9 3.5-9.6 3.6-10.2 3.7-11 3.9-11.7 4.1-12.6 4.1-13.5 4.4-14.3 4.5-15.4 4.8-16.4 4.9-17.6 5.2-18.8 5.5-20.1 1.9-7.1M387.5 92l2.8 13.3 4.1 18.9 3.9 17.7 3.7 16.7 3.6 15.6 3.5 14.6 3.4 13.8 3.3 12.9 3.2 12.1 3.1 11.3 3 10.7 3 9.9 2.8 9.3 2.9 8.7 2.7 8.1 2.7 7.6 2.7 7 2.6 6.5 2.6 5.9 2.6 5.5 2.5 5 2.5 4.6 2.4 4.1 2.5 3.7 2.4 3.3 2.5 2.8 2.4 2.4 2.4 2 2.4 1.7 2.5 1.2 2.4 .8 2.4 .5 2.5 0 2.4-.4 2.5-.7 2.5-1.1 2.5-1.6 2.5-1.9 2.6-2.4 2.6-2.8 2.7-3.2 2.7-3.6 2.7-4.1 2.8-4.6 2.8-5 3-5.5 2.9-6 3.1-6.6 3.1-7.1 3.2-7.7 3.3-8.2 3.4-8.9 3.5-9.6 3.6-10.2 3.8-11 3.8-11.7 4.1-12.6 4.1-13.4 4.4-14.4 4.5-15.3 4.7-16.4 5-17.6 5.2-18.7 5.4-20.1 1.5-5.8M388.5 92l2.5 12 4 18.9 3.9 17.7 3.7 16.6 3.6 15.6 3.5 14.6 3.4 13.8 3.2 12.9 3.2 12.1 3.1 11.3 3 10.6 2.9 10 2.9 9.3 2.8 8.7 2.8 8.1 2.7 7.5 2.6 7 2.6 6.5 2.6 5.9 2.6 5.5 2.5 5 2.5 4.6 2.4 4.1 2.5 3.7 2.4 3.2 2.4 2.9 2.5 2.4 2.4 2 2.4 1.6 2.4 1.3 2.4 .8 2.4 .4 2.5 .1 2.4-.4 2.5-.7 2.5-1.2 2.5-1.5 2.5-2 2.6-2.3 2.6-2.8 2.7-3.2 2.7-3.7 2.7-4 2.8-4.6 2.8-5 2.9-5.5 3-6.1 3-6.5 3.2-7.1 3.2-7.7 3.2-8.2 3.4-8.9 3.5-9.6 3.6-10.2 3.8-10.9 3.9-11.8 4-12.5 4.1-13.4 4.4-14.4 4.5-15.3 4.7-16.4 4.9-17.5 5.2-18.8 5.4-20 1.2-4.5M389.4 92l2.2 10.8 4 18.8 3.9 17.7 3.7 16.6 3.6 15.6 3.5 14.6 3.3 13.7 3.3 12.9 3.1 12 3.1 11.4 3 10.6 2.9 9.9 2.9 9.3 2.8 8.7 2.7 8.1 2.7 7.5 2.7 7 2.6 6.5 2.5 5.9 2.6 5.5 2.5 5 2.5 4.6 2.4 4.1 2.5 3.7 2.4 3.2 2.4 2.9 2.4 2.4 2.4 2 2.4 1.6 2.4 1.2 2.5 .9 2.4 .4 2.4 0 2.5-.3 2.4-.8 2.5-1.1 2.5-1.5 2.5-2 2.6-2.4 2.6-2.7 2.7-3.2 2.6-3.7 2.8-4.1 2.7-4.5 2.9-5 2.9-5.6 3-6 3-6.5 3.1-7.1 3.2-7.7 3.3-8.2 3.4-8.9 3.5-9.5 3.6-10.3 3.7-10.9 3.9-11.7 4-12.6 4.1-13.4 4.4-14.3 4.5-15.3 4.7-16.4 4.9-17.5 5.2-18.7 5.4-20 .8-3.2M390.3 92l2 9.5 4 18.9 3.8 17.6 3.7 16.6 3.6 15.5 3.4 14.6 3.4 13.7 3.2 12.9 3.1 12 3.1 11.3 3 10.6 2.9 10 2.8 9.3 2.8 8.6 2.8 8.1 2.6 7.5 2.7 7 2.6 6.5 2.5 5.9 2.6 5.5 2.5 5 2.4 4.6 2.5 4.1 2.4 3.7 2.5 3.2 2.4 2.8 2.4 2.5 2.4 2 2.4 1.6 2.4 1.2 2.4 .8 2.4 .5 2.4 0 2.5-.3 2.4-.8 2.5-1.1 2.5-1.6 2.5-1.9 2.6-2.4 2.6-2.8 2.6-3.2 2.7-3.6 2.7-4.1 2.8-4.5 2.9-5.1 2.9-5.5 2.9-6 3-6.5 3.2-7.1 3.1-7.7 3.3-8.2 3.4-8.9 3.5-9.5 3.6-10.2 3.7-11 3.9-11.7 4-12.5 4.1-13.4 4.3-14.3 4.5-15.3 4.7-16.3 5-17.5 5.1-18.7 5.4-20 .5-1.9M391.2 92l1.7 8.3 4 18.8 3.8 17.6 3.7 16.5 3.5 15.6 3.5 14.5 3.3 13.7 3.2 12.9 3.1 12 3.1 11.3 3 10.6 2.9 9.9 2.8 9.3 2.8 8.7 2.7 8.1 2.7 7.5 2.6 7 2.6 6.4 2.5 6 2.6 5.4 2.5 5 2.4 4.6 2.5 4.1 2.4 3.7 2.4 3.2 2.4 2.8 2.4 2.5 2.4 2 2.4 1.6 2.4 1.2 2.4 .8 2.4 .5 2.5 0 2.4-.3 2.4-.8 2.5-1.1 2.5-1.6 2.5-1.9 2.6-2.4 2.6-2.8 2.6-3.2 2.7-3.6 2.7-4.1 2.8-4.5 2.8-5.1 2.9-5.5 3-6 3-6.5 3.1-7.1 3.2-7.7 3.3-8.2 3.3-8.9 3.5-9.5 3.6-10.2 3.7-10.9 3.9-11.7 4-12.5 4.1-13.4 4.3-14.3 4.5-15.3 4.7-16.3 4.9-17.4 5.2-18.7 5.3-20 .2-.6M392.1 92l1.4 7.1 4 18.7 3.8 17.6 3.7 16.5 3.5 15.5 3.4 14.6 3.3 13.7 3.2 12.8 3.2 12 3 11.3 3 10.6 2.8 9.9 2.9 9.3 2.7 8.6 2.7 8.1 2.7 7.5 2.6 7 2.6 6.4 2.6 6 2.5 5.5 2.5 5 2.4 4.5 2.5 4.1 2.4 3.7 2.4 3.2 2.4 2.8 2.4 2.5 2.4 2 2.4 1.6 2.4 1.2 2.4 .8 2.4 .5 2.4 0 2.4-.4 2.5-.7 2.4-1.1 2.5-1.6 2.5-1.9 2.6-2.4 2.6-2.8 2.6-3.2 2.7-3.6 2.7-4.1 2.8-4.6 2.8-5 2.9-5.5 2.9-6 3.1-6.5 3.1-7.1 3.1-7.6 3.3-8.3 3.4-8.8 3.4-9.6 3.6-10.2 3.7-10.9 3.9-11.7 4-12.5 4.1-13.3 4.3-14.3 4.5-15.2 4.7-16.3 4.9-17.5 5.1-18.6 5.2-19.3M393 92l1.2 5.8 3.9 18.8 3.8 17.5 3.6 16.5 3.6 15.5 3.4 14.6 3.3 13.6 3.2 12.8 3.1 12 3 11.3 2.9 10.6 2.9 9.9 2.8 9.2 2.8 8.7 2.7 8.1 2.6 7.5 2.7 6.9 2.5 6.5 2.6 5.9 2.5 5.5 2.4 5 2.5 4.5 2.4 4.1 2.5 3.7 2.4 3.2 2.4 2.9 2.3 2.4 2.4 2 2.4 1.6 2.4 1.2 2.4 .8 2.4 .5 2.4 0 2.4-.4 2.5-.7 2.4-1.1 2.5-1.6 2.5-1.9 2.6-2.4 2.6-2.8 2.6-3.2 2.7-3.6 2.7-4.1 2.7-4.5 2.9-5.1 2.8-5.5 3-6 3-6.5 3.1-7.1 3.2-7.6 3.2-8.3 3.4-8.8 3.5-9.5 3.6-10.2 3.7-10.9 3.8-11.7 4-12.5 4.1-13.3 4.3-14.3 4.5-15.2 4.6-16.3 4.9-17.4 5.1-18.6 4.9-18M393.9 92l.9 4.6 3.9 18.7 3.8 17.6 3.6 16.4 3.5 15.5 3.4 14.5 3.3 13.6 3.2 12.8 3.1 12.1 3 11.2 2.9 10.6 2.9 9.9 2.8 9.2 2.7 8.7 2.7 8 2.7 7.5 2.6 7 2.5 6.4 2.6 6 2.5 5.4 2.4 5 2.5 4.6 2.4 4.1 2.4 3.6 2.4 3.2 2.4 2.9 2.4 2.4 2.4 2 2.4 1.6 2.3 1.2 2.4 .8 2.4 .5 2.4 0 2.4-.4 2.5-.7 2.4-1.1 2.5-1.6 2.5-1.9 2.6-2.4 2.6-2.8 2.6-3.2 2.6-3.6 2.8-4.1 2.7-4.5 2.8-5.1 2.9-5.5 2.9-6 3.1-6.5 3-7.1 3.2-7.6 3.3-8.2 3.3-8.9 3.5-9.5 3.6-10.1 3.7-10.9 3.8-11.7 4-12.5 4.1-13.3 4.3-14.2 4.4-15.3 4.7-16.2 4.9-17.4 5.1-18.6 4.5-16.7M394.7 92l.7 3.4 3.9 18.7 3.8 17.5 3.6 16.4 3.5 15.5 3.3 14.5 3.3 13.6 3.2 12.8 3.1 12 3 11.2 2.9 10.6 2.8 9.9 2.8 9.2 2.8 8.6 2.7 8.1 2.6 7.5 2.6 6.9 2.5 6.5 2.6 5.9 2.5 5.5 2.4 5 2.5 4.5 2.4 4.1 2.4 3.6 2.4 3.3 2.4 2.8 2.3 2.4 2.4 2 2.4 1.6 2.4 1.2 2.3 .8 2.4 .5 2.4 0 2.5-.3 2.4-.8 2.4-1.1 2.5-1.6 2.5-1.9 2.6-2.4 2.6-2.8 2.6-3.2 2.6-3.6 2.7-4.1 2.8-4.5 2.8-5 2.9-5.5 2.9-6 3-6.6 3.1-7 3.2-7.7 3.2-8.2 3.4-8.8 3.4-9.5 3.6-10.2 3.7-10.9 3.8-11.6 4-12.5 4.1-13.3 4.3-14.2 4.4-15.2 4.7-16.3 4.8-17.3 5.1-18.6 4.2-15.4M395.6 92l.5 2.2 3.8 18.6 3.8 17.5 3.6 16.5 3.4 15.4 3.4 14.5 3.2 13.6 3.2 12.7 3.1 12 2.9 11.3 3 10.5 2.8 9.9 2.8 9.2 2.7 8.6 2.7 8.1 2.6 7.4 2.6 7 2.6 6.4 2.5 6 2.5 5.4 2.4 5 2.4 4.5 2.5 4.1 2.4 3.7 2.3 3.2 2.4 2.8 2.4 2.4 2.4 2 2.3 1.6 2.4 1.3 2.4 .8 2.4 .4 2.4 0 2.4-.3 2.4-.8 2.5-1.1 2.4-1.6 2.5-1.9 2.6-2.4 2.5-2.7 2.6-3.2 2.7-3.7 2.7-4.1 2.7-4.5 2.9-5 2.8-5.5 3-6 3-6.5 3-7.1 3.2-7.6 3.2-8.2 3.4-8.9 3.4-9.4 3.6-10.2 3.7-10.9 3.8-11.6 4-12.5 4.1-13.3 4.2-14.2 4.5-15.2 4.6-16.2 4.9-17.3 5.1-18.5 3.8-14.2M396.5 92l.2 1 3.8 18.6 3.8 17.5 3.5 16.4 3.5 15.4 3.3 14.4 3.3 13.6 3.1 12.8 3.1 11.9 2.9 11.3 2.9 10.5 2.9 9.9 2.7 9.2 2.8 8.6 2.6 8 2.6 7.5 2.6 7 2.6 6.4 2.5 5.9 2.4 5.5 2.5 4.9 2.4 4.6 2.4 4.1 2.4 3.6 2.4 3.2 2.4 2.9 2.3 2.4 2.4 2 2.4 1.6 2.3 1.2 2.4 .8 2.4 .4 2.4 .1 2.4-.4 2.4-.8 2.5-1.1 2.4-1.5 2.5-2 2.6-2.3 2.5-2.8 2.6-3.2 2.7-3.7 2.7-4 2.7-4.6 2.8-5 2.9-5.5 2.9-6 3-6.5 3.1-7 3.1-7.7 3.3-8.2 3.3-8.8 3.5-9.5 3.5-10.1 3.7-10.9 3.8-11.6 4-12.5 4.1-13.2 4.2-14.2 4.5-15.2 4.6-16.2 4.8-17.3 5.1-18.5 3.5-12.9M397.3 92l3.8 18.4 3.7 17.4 3.6 16.4 3.4 15.4 3.4 14.4 3.2 13.6 3.1 12.7 3 12 3 11.2 2.9 10.5 2.8 9.9 2.8 9.2 2.7 8.6 2.7 8 2.6 7.5 2.5 6.9 2.6 6.5 2.5 5.9 2.4 5.4 2.5 5 2.4 4.5 2.4 4.1 2.4 3.7 2.4 3.2 2.3 2.8 2.4 2.4 2.3 2 2.4 1.6 2.4 1.2 2.3 .8 2.4 .5 2.4 0 2.4-.4 2.4-.7 2.5-1.2 2.4-1.5 2.5-2 2.5-2.3 2.6-2.8 2.6-3.2 2.6-3.6 2.7-4.1 2.8-4.5 2.8-5 2.8-5.5 3-6 2.9-6.5 3.1-7.1 3.2-7.6 3.2-8.2 3.3-8.8 3.5-9.5 3.5-10.1 3.7-10.9 3.8-11.6 3.9-12.4 4.1-13.3 4.3-14.2 4.4-15.1 4.7-16.2 4.8-17.3 5-18.4 3.2-11.7M398.2 92l3.5 17.2 3.7 17.4 3.6 16.3 3.4 15.4 3.3 14.4 3.2 13.6 3.1 12.7 3 11.9 3 11.2 2.9 10.5 2.8 9.9 2.7 9.2 2.7 8.6 2.7 8 2.6 7.5 2.5 6.9 2.6 6.4 2.5 5.9 2.4 5.5 2.5 5 2.4 4.5 2.4 4.1 2.4 3.6 2.3 3.2 2.4 2.8 2.3 2.4 2.4 2 2.3 1.6 2.4 1.3 2.4 .8 2.3 .4 2.4 0 2.4-.3 2.4-.8 2.5-1.1 2.4-1.6 2.5-1.9 2.5-2.4 2.6-2.8 2.6-3.2 2.6-3.6 2.7-4.1 2.7-4.5 2.8-5 2.9-5.5 2.9-6 3-6.5 3.1-7 3.1-7.6 3.2-8.2 3.4-8.8 3.4-9.5 3.5-10.1 3.7-10.9 3.8-11.6 3.9-12.4 4.1-13.3 4.3-14.1 4.4-15.2 4.6-16.1 4.8-17.3 5.1-18.4 2.8-10.4M399.1 92l3.2 16 3.7 17.3 3.5 16.4 3.4 15.3 3.3 14.4 3.2 13.6 3.1 12.7 3 11.9 3 11.2 2.8 10.5 2.8 9.8 2.8 9.2 2.7 8.6 2.6 8 2.6 7.5 2.6 6.9 2.5 6.4 2.5 5.9 2.4 5.5 2.4 4.9 2.4 4.5 2.4 4.1 2.4 3.7 2.4 3.2 2.3 2.8 2.4 2.4 2.3 2 2.4 1.6 2.3 1.2 2.4 .8 2.3 .4 2.4 .1 2.4-.4 2.4-.7 2.5-1.2 2.4-1.5 2.5-2 2.5-2.3 2.6-2.8 2.6-3.2 2.6-3.6 2.7-4.1 2.7-4.5 2.8-5 2.8-5.5 3-6 2.9-6.5 3.1-7.1 3.1-7.6 3.3-8.2 3.3-8.8 3.4-9.4 3.6-10.1 3.6-10.9 3.8-11.6 3.9-12.4 4.1-13.2 4.2-14.2 4.5-15.1 4.6-16.1 4.8-17.2 5-18.4 2.5-9.2M399.9 92l3 14.7 3.7 17.4 3.5 16.3 3.4 15.3 3.2 14.4 3.2 13.5 3.1 12.7 3 12 2.9 11.1 2.9 10.5 2.8 9.8 2.7 9.2 2.7 8.6 2.6 8 2.6 7.5 2.6 6.9 2.5 6.4 2.4 5.9 2.5 5.4 2.4 5 2.4 4.5 2.4 4.1 2.4 3.6 2.3 3.2 2.4 2.9 2.3 2.4 2.4 1.9 2.3 1.6 2.3 1.2 2.4 .9 2.4 .4 2.3 0 2.4-.3 2.4-.8 2.4-1.1 2.5-1.6 2.5-1.9 2.5-2.4 2.5-2.8 2.6-3.2 2.7-3.6 2.6-4.1 2.8-4.5 2.8-5 2.8-5.5 2.9-6 3-6.5 3-7 3.2-7.6 3.2-8.2 3.3-8.8 3.4-9.4 3.6-10.1 3.6-10.9 3.8-11.6 3.9-12.3 4.1-13.3 4.2-14.1 4.4-15.1 4.6-16.1 4.8-17.2 5.1-18.4 2.1-7.9M400.8 92l2.7 13.5 3.6 17.4 3.5 16.3 3.4 15.3 3.3 14.3 3.1 13.5 3.1 12.7 3 11.9 2.9 11.2 2.9 10.5 2.7 9.8 2.8 9.2 2.6 8.5 2.7 8 2.5 7.5 2.6 6.9 2.5 6.4 2.4 5.9 2.5 5.4 2.4 5 2.4 4.5 2.4 4.1 2.3 3.6 2.4 3.2 2.3 2.8 2.4 2.4 2.3 2 2.3 1.6 2.4 1.2 2.3 .8 2.4 .4 2.3 .1 2.4-.4 2.4-.7 2.4-1.2 2.5-1.5 2.5-2 2.5-2.3 2.5-2.8 2.6-3.2 2.6-3.6 2.7-4.1 2.7-4.5 2.8-5 2.8-5.5 3-6 2.9-6.5 3.1-7 3.1-7.6 3.2-8.2 3.3-8.8 3.5-9.4 3.5-10.1 3.6-10.9 3.8-11.5 3.9-12.4 4.1-13.2 4.2-14.1 4.4-15.1 4.6-16.1 4.8-17.2 5-18.3 1.8-6.7M401.6 92l2.5 12.4 3.6 17.3 3.5 16.2 3.3 15.3 3.3 14.4 3.1 13.4 3.1 12.7 3 11.9 2.9 11.2 2.8 10.4 2.8 9.8 2.7 9.2 2.7 8.6 2.6 7.9 2.5 7.5 2.6 6.9 2.5 6.4 2.4 5.9 2.5 5.4 2.4 5 2.4 4.5 2.3 4 2.4 3.7 2.3 3.2 2.4 2.8 2.3 2.4 2.3 2 2.4 1.6 2.3 1.2 2.3 .8 2.4 .4 2.3 0 2.4-.3 2.4-.8 2.4-1.1 2.5-1.6 2.5-1.9 2.5-2.4 2.5-2.8 2.6-3.1 2.6-3.7 2.7-4 2.7-4.6 2.8-5 2.8-5.4 2.9-6 3-6.5 3-7 3.1-7.6 3.3-8.2 3.3-8.8 3.4-9.4 3.5-10.1 3.6-10.8 3.8-11.6 3.9-12.3 4.1-13.2 4.2-14.1 4.4-15.1 4.5-16 4.8-17.2 5-18.3 1.5-5.5M402.4 92l2.3 11.2 3.6 17.3 3.4 16.2 3.4 15.2 3.2 14.4 3.1 13.4 3.1 12.7 3 11.9 2.9 11.1 2.8 10.5 2.7 9.8 2.7 9.1 2.7 8.6 2.6 8 2.6 7.4 2.5 6.9 2.5 6.4 2.4 5.9 2.4 5.4 2.4 5 2.4 4.5 2.4 4 2.3 3.7 2.4 3.2 2.3 2.8 2.3 2.4 2.4 1.9 2.3 1.6 2.3 1.2 2.3 .8 2.4 .5 2.4 0 2.3-.4 2.4-.7 2.4-1.2 2.5-1.5 2.4-2 2.5-2.3 2.6-2.8 2.6-3.2 2.6-3.6 2.6-4.1 2.7-4.5 2.8-5 2.8-5.5 2.9-5.9 3-6.5 3-7 3.2-7.6 3.2-8.2 3.3-8.8 3.4-9.4 3.5-10.1 3.6-10.8 3.8-11.5 3.9-12.4 4-13.2 4.2-14 4.4-15.1 4.6-16 4.8-17.2 5-18.3 1.1-4.2M403.2 92l2.1 10 3.5 17.2 3.5 16.3 3.3 15.2 3.2 14.3 3.1 13.5 3.1 12.6 2.9 11.9 2.9 11.1 2.8 10.4 2.8 9.8 2.7 9.2 2.6 8.5 2.6 8 2.6 7.4 2.5 6.9 2.5 6.4 2.4 5.9 2.4 5.4 2.4 5 2.4 4.5 2.3 4 2.4 3.6 2.3 3.3 2.3 2.7 2.4 2.4 2.3 2 2.3 1.6 2.3 1.2 2.4 .8 2.3 .4 2.4 .1 2.3-.4 2.4-.7 2.4-1.2 2.5-1.5 2.4-2 2.5-2.3 2.6-2.8 2.5-3.2 2.6-3.6 2.7-4.1 2.7-4.5 2.8-5 2.8-5.5 2.9-5.9 2.9-6.5 3.1-7 3.1-7.6 3.2-8.2 3.3-8.8 3.4-9.4 3.5-10.1 3.6-10.7 3.8-11.6 3.9-12.3 4-13.2 4.2-14 4.4-15.1 4.6-16 4.7-17.1 5-18.3 .8-3M404.1 92l1.7 8.8 3.6 17.2 3.4 16.2 3.3 15.3 3.2 14.2 3.1 13.5 3.1 12.6 2.9 11.9 2.9 11.1 2.8 10.4 2.7 9.8 2.7 9.1 2.6 8.6 2.6 7.9 2.6 7.4 2.5 6.9 2.4 6.4 2.5 5.9 2.4 5.4 2.4 5 2.4 4.5 2.3 4 2.3 3.6 2.4 3.2 2.3 2.8 2.3 2.4 2.3 2 2.3 1.6 2.4 1.2 2.3 .8 2.3 .4 2.4 0 2.3-.3 2.4-.8 2.4-1.1 2.4-1.6 2.5-1.9 2.5-2.4 2.5-2.7 2.6-3.2 2.6-3.6 2.7-4.1 2.7-4.5 2.7-5 2.8-5.5 2.9-5.9 3-6.5 3-7 3.1-7.6 3.2-8.2 3.3-8.7 3.4-9.4 3.5-10.1 3.6-10.8 3.8-11.5 3.9-12.3 4-13.2 4.2-14 4.4-15 4.5-16 4.8-17.1 4.9-18.3 .5-1.8M404.9 92l1.5 7.6 3.5 17.2 3.4 16.2 3.3 15.2 3.2 14.3 3.1 13.4 3.1 12.6 2.9 11.8 2.8 11.2 2.8 10.4 2.8 9.7 2.6 9.2 2.7 8.5 2.5 8 2.6 7.4 2.5 6.9 2.4 6.3 2.5 5.9 2.4 5.4 2.4 5 2.3 4.5 2.4 4 2.3 3.6 2.3 3.2 2.3 2.8 2.3 2.4 2.3 2 2.4 1.6 2.3 1.2 2.3 .8 2.3 .4 2.4 0 2.3-.3 2.4-.8 2.4-1.1 2.4-1.6 2.5-1.9 2.5-2.4 2.5-2.7 2.6-3.2 2.6-3.7 2.6-4 2.7-4.5 2.8-5 2.8-5.5 2.9-5.9 2.9-6.5 3-7 3.2-7.6 3.1-8.2 3.3-8.7 3.4-9.4 3.5-10.1 3.6-10.7 3.8-11.6 3.9-12.3 4-13.1 4.2-14 4.3-15 4.6-16 4.7-17.1 5-18.2 .1-.6M405.7 92l1.3 6.5 3.5 17.2 3.4 16.1 3.3 15.2 3.1 14.2 3.1 13.4 3 12.6 3 11.9 2.8 11 2.8 10.5 2.7 9.7 2.7 9.1 2.6 8.6 2.6 7.9 2.5 7.4 2.5 6.9 2.4 6.4 2.4 5.8 2.4 5.4 2.4 5 2.4 4.5 2.3 4 2.3 3.6 2.4 3.2 2.3 2.8 2.3 2.4 2.3 2 2.3 1.6 2.3 1.2 2.3 .8 2.3 .4 2.4 0 2.3-.3 2.4-.8 2.4-1.1 2.4-1.6 2.5-1.9 2.5-2.4 2.5-2.8 2.5-3.1 2.6-3.7 2.7-4 2.7-4.5 2.7-5 2.8-5.5 2.9-5.9 3-6.5 3-7 3.1-7.6 3.2-8.1 3.2-8.8 3.4-9.4 3.5-10 3.6-10.8 3.8-11.5 3.8-12.3 4.1-13.1 4.1-14 4.4-15 4.5-15.9 4.7-17.1 4.8-17.6M406.5 92l1 5.3 3.5 17.2 3.4 16.1 3.3 15.2 3.2 14.2 3 13.4 3 12.6 2.9 11.8 2.9 11 2.7 10.4 2.7 9.8 2.7 9.1 2.6 8.5 2.6 8 2.5 7.4 2.5 6.8 2.4 6.4 2.4 5.9 2.4 5.4 2.4 4.9 2.3 4.5 2.4 4 2.3 3.7 2.3 3.2 2.3 2.7 2.3 2.4 2.3 2 2.3 1.6 2.3 1.2 2.3 .8 2.3 .4 2.4 0 2.3-.3 2.4-.8 2.4-1.2 2.4-1.5 2.4-1.9 2.5-2.4 2.5-2.8 2.6-3.1 2.6-3.7 2.6-4 2.7-4.5 2.8-5 2.8-5.5 2.9-5.9 2.9-6.5 3-7 3.1-7.6 3.2-8.1 3.3-8.7 3.3-9.4 3.5-10.1 3.6-10.7 3.8-11.5 3.8-12.3 4-13.1 4.2-14 4.3-14.9 4.6-16 4.7-17 4.5-16.4M407.3 92l.8 4.2 3.5 17.1 3.4 16.1 3.2 15.1 3.2 14.3 3 13.3 3 12.6 2.9 11.8 2.8 11.1 2.8 10.3 2.7 9.8 2.6 9.1 2.6 8.5 2.6 7.9 2.5 7.4 2.5 6.9 2.4 6.3 2.4 5.9 2.4 5.4 2.4 4.9 2.3 4.5 2.3 4.1 2.3 3.6 2.3 3.2 2.3 2.7 2.3 2.4 2.3 2 2.3 1.6 2.3 1.2 2.3 .8 2.3 .4 2.4 0 2.3-.3 2.4-.8 2.4-1.2 2.4-1.5 2.4-1.9 2.5-2.4 2.5-2.8 2.6-3.1 2.6-3.7 2.6-4 2.7-4.5 2.7-5 2.8-5.5 2.9-5.9 2.9-6.5 3-7 3.1-7.5 3.2-8.2 3.3-8.7 3.3-9.4 3.5-10 3.6-10.7 3.7-11.5 3.9-12.3 4-13.1 4.2-14 4.3-14.9 4.5-15.9 4.7-17 4.2-15.2M408.1 92l.6 3 3.4 17.1 3.4 16.1 3.2 15.1 3.2 14.2 3 13.4 3 12.5 2.9 11.8 2.8 11.1 2.7 10.3 2.7 9.8 2.7 9.1 2.5 8.5 2.6 7.9 2.5 7.4 2.4 6.8 2.5 6.4 2.4 5.9 2.4 5.3 2.3 5 2.3 4.4 2.4 4.1 2.3 3.6 2.3 3.2 2.3 2.8 2.3 2.3 2.2 2 2.3 1.6 2.3 1.2 2.3 .8 2.3 .4 2.4 0 2.3-.3 2.4-.8 2.4-1.1 2.4-1.6 2.4-1.9 2.5-2.4 2.5-2.8 2.5-3.1 2.6-3.7 2.6-4 2.7-4.5 2.8-5 2.8-5.4 2.8-6 3-6.4 3-7 3.1-7.6 3.1-8.1 3.3-8.7 3.4-9.4 3.4-10 3.6-10.8 3.7-11.4 3.9-12.3 4-13.1 4.1-13.9 4.4-14.9 4.5-15.9 4.7-17 3.8-14M408.9 92l.3 1.9 3.5 17.1 3.3 16 3.2 15.1 3.2 14.2 3 13.3 2.9 12.6 2.9 11.7 2.8 11.1 2.8 10.3 2.6 9.7 2.7 9.1 2.6 8.5 2.5 8 2.5 7.3 2.4 6.9 2.5 6.3 2.4 5.9 2.3 5.4 2.4 4.9 2.3 4.5 2.3 4 2.3 3.6 2.3 3.2 2.3 2.8 2.3 2.4 2.3 1.9 2.2 1.6 2.3 1.2 2.3 .8 2.3 .4 2.4 0 2.3-.3 2.4-.8 2.3-1.1 2.4-1.6 2.5-1.9 2.4-2.4 2.5-2.7 2.6-3.2 2.6-3.6 2.6-4.1 2.7-4.5 2.7-5 2.8-5.4 2.9-6 2.9-6.4 3-7 3.1-7.5 3.1-8.2 3.3-8.7 3.4-9.3 3.4-10.1 3.6-10.7 3.7-11.4 3.9-12.3 4-13 4.1-14 4.3-14.9 4.5-15.8 4.7-17 3.5-12.8M409.6 92l.2 .7 3.4 17.1 3.3 16 3.2 15.1 3.2 14.2 3 13.3 2.9 12.5 2.9 11.8 2.8 11 2.7 10.3 2.7 9.7 2.6 9.1 2.6 8.5 2.5 7.9 2.5 7.4 2.4 6.9 2.4 6.3 2.4 5.8 2.4 5.4 2.3 4.9 2.4 4.5 2.3 4 2.3 3.7 2.2 3.1 2.3 2.8 2.3 2.4 2.3 2 2.3 1.5 2.2 1.2 2.3 .8 2.3 .4 2.4 .1 2.3-.4 2.3-.8 2.4-1.1 2.4-1.6 2.5-1.9 2.4-2.4 2.5-2.7 2.5-3.2 2.6-3.6 2.7-4.1 2.6-4.5 2.8-4.9 2.7-5.5 2.9-5.9 2.9-6.5 3-7 3.1-7.5 3.2-8.1 3.2-8.7 3.4-9.4 3.4-10 3.6-10.7 3.7-11.4 3.8-12.3 4-13 4.2-13.9 4.3-14.9 4.5-15.9 4.6-16.9 3.2-11.6M410.4 92l3.4 16.6 3.3 16.1 3.2 15 3.1 14.2 3 13.3 2.9 12.5 2.8 11.7 2.8 11 2.7 10.4 2.7 9.7 2.6 9 2.6 8.5 2.5 7.9 2.5 7.4 2.4 6.8 2.4 6.4 2.4 5.8 2.4 5.4 2.3 4.9 2.3 4.5 2.3 4 2.3 3.6 2.3 3.2 2.3 2.8 2.2 2.3 2.3 2 2.3 1.6 2.3 1.2 2.2 .7 2.3 .5 2.4 0 2.3-.4 2.3-.7 2.4-1.2 2.4-1.5 2.4-2 2.5-2.3 2.5-2.8 2.5-3.2 2.6-3.6 2.6-4 2.7-4.5 2.7-5 2.8-5.4 2.8-6 3-6.4 2.9-7 3.1-7.5 3.2-8.1 3.2-8.8 3.4-9.3 3.4-10 3.6-10.7 3.7-11.4 3.8-12.2 4-13.1 4.1-13.9 4.3-14.8 4.5-15.9 4.7-16.9 2.8-10.4M411.2 92l3.1 15.5 3.3 16 3.2 15 3 14.1 3 13.3 3 12.5 2.8 11.7 2.8 11.1 2.7 10.3 2.6 9.7 2.6 9 2.6 8.5 2.5 7.9 2.5 7.4 2.4 6.8 2.4 6.3 2.4 5.9 2.3 5.3 2.3 4.9 2.4 4.5 2.3 4 2.2 3.6 2.3 3.2 2.3 2.8 2.3 2.4 2.2 1.9 2.3 1.6 2.3 1.2 2.2 .8 2.3 .4 2.3 0 2.4-.4 2.3-.7 2.4-1.2 2.4-1.5 2.4-2 2.5-2.3 2.4-2.8 2.6-3.1 2.5-3.7 2.7-4 2.6-4.5 2.7-5 2.8-5.4 2.9-5.9 2.9-6.5 3-6.9 3-7.6 3.2-8.1 3.2-8.7 3.4-9.3 3.4-10 3.6-10.7 3.7-11.4 3.8-12.2 4-13 4.1-13.9 4.3-14.9 4.5-15.8 4.6-16.8 2.5-9.3M412 92l2.8 14.3 3.3 16 3.2 15 3 14.1 3 13.3 2.9 12.5 2.9 11.7 2.7 11 2.7 10.3 2.7 9.7 2.5 9 2.6 8.5 2.5 7.9 2.4 7.3 2.5 6.9 2.4 6.3 2.3 5.8 2.4 5.4 2.3 4.9 2.3 4.5 2.3 4 2.3 3.6 2.2 3.2 2.3 2.7 2.3 2.4 2.2 2 2.3 1.5 2.3 1.2 2.2 .8 2.3 .4 2.3 0 2.4-.3 2.3-.8 2.4-1.1 2.4-1.6 2.4-1.9 2.4-2.4 2.5-2.7 2.5-3.2 2.6-3.6 2.6-4.1 2.7-4.5 2.7-4.9 2.8-5.4 2.8-6 2.9-6.4 3-7 3.1-7.5 3.1-8.1 3.2-8.7 3.4-9.3 3.4-10 3.6-10.7 3.7-11.4 3.8-12.2 3.9-13 4.2-13.9 4.2-14.8 4.5-15.8 4.7-16.8 2.2-8.1M412.7 92l2.6 13.2 3.3 16 3.2 14.9 3 14.1 3 13.3 2.9 12.4 2.8 11.7 2.8 11 2.6 10.3 2.7 9.7 2.6 9 2.5 8.5 2.5 7.9 2.4 7.3 2.5 6.9 2.3 6.3 2.4 5.8 2.3 5.4 2.4 4.9 2.3 4.4 2.2 4 2.3 3.6 2.3 3.2 2.2 2.8 2.3 2.3 2.3 2 2.2 1.6 2.3 1.2 2.2 .8 2.3 .4 2.3 0 2.3-.4 2.4-.7 2.3-1.2 2.4-1.5 2.4-2 2.5-2.3 2.5-2.8 2.5-3.2 2.5-3.6 2.7-4 2.6-4.5 2.7-5 2.8-5.4 2.8-5.9 2.9-6.5 3-6.9 3.1-7.5 3.1-8.1 3.2-8.7 3.4-9.3 3.4-10 3.6-10.7 3.7-11.4 3.8-12.1 3.9-13 4.1-13.9 4.3-14.8 4.4-15.8 4.7-16.8 1.9-6.9M413.5 92l2.4 12.1 3.2 15.9 3.2 15 3 14 3 13.3 2.8 12.4 2.9 11.7 2.7 11 2.7 10.3 2.6 9.6 2.6 9.1 2.5 8.4 2.5 7.9 2.4 7.3 2.4 6.9 2.4 6.3 2.4 5.8 2.3 5.3 2.3 4.9 2.3 4.5 2.3 4 2.2 3.6 2.3 3.2 2.3 2.7 2.2 2.4 2.3 2 2.2 1.5 2.3 1.2 2.2 .8 2.3 .4 2.3 0 2.3-.3 2.4-.8 2.3-1.1 2.4-1.6 2.4-1.9 2.4-2.4 2.5-2.7 2.5-3.2 2.6-3.6 2.6-4.1 2.7-4.5 2.7-4.9 2.7-5.4 2.9-6 2.9-6.4 2.9-6.9 3.1-7.6 3.1-8 3.3-8.7 3.3-9.3 3.4-10 3.6-10.7 3.6-11.3 3.8-12.2 4-13 4.1-13.8 4.2-14.8 4.5-15.7 4.6-16.8 1.6-5.8M414.2 92l2.2 11 3.2 15.8 3.2 15 3 14.1 2.9 13.2 2.9 12.4 2.8 11.7 2.7 10.9 2.7 10.3 2.6 9.7 2.6 9 2.5 8.4 2.5 7.9 2.4 7.3 2.4 6.8 2.4 6.4 2.3 5.8 2.4 5.3 2.3 4.9 2.2 4.5 2.3 4 2.3 3.6 2.2 3.1 2.3 2.8 2.2 2.4 2.3 1.9 2.2 1.6 2.3 1.2 2.2 .8 2.3 .4 2.3 0 2.3-.4 2.3-.7 2.4-1.2 2.4-1.5 2.4-2 2.4-2.3 2.5-2.8 2.5-3.2 2.5-3.6 2.6-4 2.7-4.5 2.7-4.9 2.8-5.5 2.8-5.9 2.9-6.4 3-7 3-7.5 3.1-8 3.3-8.7 3.3-9.3 3.4-10 3.6-10.6 3.6-11.4 3.8-12.2 4-12.9 4-13.8 4.3-14.8 4.4-15.7 4.7-16.8 1.2-4.6M415 92l1.9 9.8 3.2 15.9 3.1 14.9 3.1 14.1 2.9 13.2 2.9 12.4 2.7 11.6 2.8 11 2.6 10.3 2.6 9.6 2.6 9 2.5 8.5 2.5 7.8 2.4 7.3 2.4 6.9 2.4 6.3 2.3 5.8 2.3 5.3 2.3 4.9 2.3 4.4 2.3 4.1 2.2 3.5 2.3 3.2 2.2 2.8 2.2 2.3 2.3 2 2.2 1.6 2.3 1.1 2.2 .8 2.3 .4 2.3 0 2.3-.3 2.3-.8 2.4-1.1 2.3-1.6 2.4-1.9 2.5-2.4 2.4-2.7 2.5-3.2 2.6-3.6 2.6-4 2.6-4.5 2.7-5 2.8-5.4 2.8-5.9 2.9-6.4 3-7 3-7.5 3.1-8 3.3-8.7 3.3-9.3 3.4-10 3.5-10.6 3.7-11.4 3.8-12.1 3.9-12.9 4.1-13.9 4.3-14.7 4.4-15.7 4.6-16.7 .9-3.5M415.7 92l1.7 8.7 3.2 15.9 3.1 14.9 3 14 3 13.2 2.8 12.4 2.8 11.6 2.7 11 2.7 10.2 2.5 9.6 2.6 9.1 2.5 8.4 2.5 7.8 2.4 7.4 2.4 6.8 2.3 6.3 2.4 5.8 2.3 5.3 2.3 4.9 2.2 4.4 2.3 4 2.2 3.6 2.3 3.2 2.2 2.7 2.3 2.4 2.2 2 2.2 1.5 2.3 1.2 2.2 .8 2.3 .4 2.3 0 2.3-.4 2.3-.7 2.3-1.2 2.4-1.5 2.4-2 2.4-2.3 2.5-2.8 2.5-3.1 2.5-3.6 2.6-4.1 2.7-4.5 2.7-4.9 2.7-5.4 2.8-5.9 2.9-6.4 3-7 3-7.5 3.2-8 3.2-8.7 3.3-9.3 3.4-9.9 3.5-10.7 3.7-11.3 3.8-12.1 3.9-13 4.1-13.8 4.2-14.7 4.4-15.7 4.6-16.7 .7-2.3M416.5 92l1.5 7.6 3.1 15.8 3.1 14.9 3 14 2.9 13.2 2.9 12.4 2.7 11.6 2.7 10.9 2.7 10.3 2.6 9.6 2.5 9 2.5 8.4 2.4 7.9 2.5 7.3 2.3 6.8 2.4 6.3 2.3 5.8 2.3 5.3 2.3 4.9 2.3 4.4 2.2 4 2.3 3.6 2.2 3.2 2.2 2.7 2.3 2.4 2.2 1.9 2.2 1.6 2.3 1.2 2.2 .8 2.3 .4 2.3 0 2.3-.4 2.3-.8 2.3-1.1 2.4-1.6 2.4-1.9 2.4-2.3 2.5-2.8 2.5-3.2 2.5-3.6 2.6-4 2.6-4.5 2.7-4.9 2.8-5.4 2.8-5.9 2.9-6.5 2.9-6.9 3-7.5 3.2-8 3.2-8.7 3.3-9.3 3.4-9.9 3.5-10.6 3.7-11.4 3.7-12.1 4-12.9 4-13.8 4.3-14.7 4.4-15.6 4.6-16.7 .3-1.2M417.2 92l1.3 6.5 3.1 15.8 3.1 14.9 3 14 2.9 13.1 2.8 12.4 2.8 11.6 2.7 10.9 2.6 10.3 2.6 9.6 2.5 8.9 2.5 8.4 2.4 7.9 2.4 7.3 2.4 6.8 2.4 6.3 2.3 5.8 2.3 5.3 2.2 4.9 2.3 4.4 2.3 4 2.2 3.6 2.2 3.2 2.3 2.7 2.2 2.4 2.2 1.9 2.2 1.6 2.3 1.1 2.2 .8 2.3 .4 2.3 0 2.2-.3 2.4-.8 2.3-1.1 2.3-1.6 2.4-1.9 2.5-2.4 2.4-2.7 2.5-3.2 2.5-3.6 2.6-4 2.7-4.5 2.6-4.9 2.8-5.4 2.8-5.9 2.9-6.5 2.9-6.9 3.1-7.5 3.1-8 3.2-8.7 3.3-9.2 3.4-10 3.5-10.6 3.6-11.3 3.8-12.1 3.9-12.9 4.1-13.8 4.2-14.6 4.4-15.7 4.6-16.7M417.9 92l1.1 5.4 3.1 15.8 3.1 14.8 3 14 2.9 13.1 2.8 12.4 2.7 11.6 2.7 10.9 2.6 10.2 2.6 9.6 2.5 9 2.5 8.4 2.4 7.8 2.4 7.3 2.4 6.8 2.3 6.3 2.3 5.8 2.3 5.3 2.3 4.9 2.2 4.4 2.3 4 2.2 3.6 2.3 3.1 2.2 2.8 2.2 2.3 2.2 2 2.2 1.6 2.3 1.1 2.2 .8 2.3 .4 2.2 0 2.3-.4 2.3-.7 2.4-1.2 2.3-1.5 2.4-1.9 2.4-2.4 2.5-2.7 2.5-3.2 2.5-3.6 2.6-4 2.6-4.5 2.7-4.9 2.7-5.5 2.8-5.9 2.9-6.4 2.9-6.9 3.1-7.5 3.1-8 3.2-8.6 3.3-9.3 3.4-9.9 3.5-10.6 3.6-11.3 3.8-12.1 3.9-12.9 4-13.7 4.3-14.7 4.3-15.6 4.3-15.6M418.7 92l.8 4.3 3.1 15.8 3.1 14.8 2.9 13.9 2.9 13.2 2.8 12.3 2.7 11.6 2.7 10.9 2.6 10.2 2.6 9.6 2.5 9 2.5 8.3 2.4 7.9 2.4 7.3 2.3 6.7 2.4 6.3 2.3 5.8 2.3 5.3 2.2 4.9 2.3 4.4 2.2 4 2.3 3.6 2.2 3.1 2.2 2.8 2.2 2.3 2.2 2 2.2 1.5 2.3 1.2 2.2 .8 2.3 .4 2.2 0 2.3-.4 2.3-.7 2.3-1.2 2.4-1.5 2.4-2 2.4-2.3 2.4-2.8 2.5-3.1 2.5-3.6 2.6-4 2.6-4.5 2.7-4.9 2.7-5.5 2.8-5.8 2.9-6.4 3-7 3-7.4 3.1-8.1 3.2-8.6 3.3-9.3 3.4-9.9 3.5-10.6 3.6-11.3 3.8-12 3.8-12.9 4.1-13.7 4.2-14.7 4.4-15.6 4-14.4M419.4 92l.6 3.2 3.1 15.7 3.1 14.9 2.9 13.9 2.9 13.1 2.8 12.3 2.7 11.6 2.6 10.9 2.6 10.2 2.6 9.5 2.5 9 2.5 8.4 2.4 7.8 2.4 7.3 2.3 6.8 2.3 6.2 2.3 5.8 2.3 5.3 2.3 4.9 2.2 4.4 2.3 4 2.2 3.6 2.2 3.1 2.2 2.8 2.2 2.3 2.2 2 2.2 1.5 2.3 1.2 2.2 .8 2.2 .4 2.3 0 2.3-.4 2.3-.7 2.3-1.2 2.3-1.5 2.4-2 2.4-2.3 2.5-2.8 2.5-3.1 2.5-3.6 2.5-4 2.7-4.5 2.6-4.9 2.8-5.4 2.8-5.9 2.8-6.4 3-7 3-7.4 3.1-8.1 3.2-8.6 3.3-9.2 3.3-9.9 3.5-10.6 3.7-11.3 3.7-12 3.9-12.9 4.1-13.7 4.2-14.6 4.3-15.6 3.7-13.3M420.1 92l.4 2.1 3.1 15.7 3 14.8 3 13.9 2.8 13.1 2.8 12.3 2.7 11.6 2.7 10.9 2.6 10.2 2.5 9.5 2.5 9 2.4 8.4 2.5 7.8 2.3 7.2 2.4 6.8 2.3 6.3 2.3 5.8 2.3 5.3 2.2 4.8 2.3 4.4 2.2 4 2.2 3.6 2.2 3.1 2.2 2.8 2.2 2.3 2.2 2 2.2 1.5 2.3 1.2 2.2 .8 2.2 .4 2.3 0 2.3-.4 2.2-.7 2.4-1.2 2.3-1.5 2.4-2 2.4-2.3 2.4-2.8 2.5-3.1 2.5-3.6 2.6-4 2.6-4.5 2.7-4.9 2.7-5.4 2.8-5.9 2.9-6.4 2.9-6.9 3-7.5 3.1-8 3.2-8.6 3.3-9.3 3.3-9.8 3.5-10.6 3.6-11.3 3.8-12 3.9-12.9 4-13.7 4.2-14.6 4.4-15.5 3.3-12.2" fill="none" stroke="#000" stroke-width="0.7"/>
<path d="M34.1 108.1l20.3-16.1M62.3 166.5l79.9-74.5M87.4 218.2l118-126.2M109.9 264.1l143.1-172.1M130.1 305.2l160.1-213.2M148.5 342.1l171.5-250.1M165.2 375.5l179.3-283.5M180.5 405.7l184.5-313.7M194.5 433.1l187.8-341.1M207.5 458.2l189.7-366.2M219.5 481.2l190.6-389.2M230.7 502.2l189.8-408.1M241.1 521.5l182.5-411.7M250.9 539.3l175.7-414.7M260 555.7l169.6-417.2M268.6 570.9l163.8-419.3M276.8 584.9l158.4-421M284.4 597.9l153.5-422.4M291.7 610l148.9-423.6M298.6 621.1l144.6-424.5M305.2 631.4l140.5-425.3M311.5 641l136.7-425.9M317.5 649.9l133.1-426.4M323.2 658.1l129.9-426.8M328.7 665.6l126.7-427.1M334 672.7l123.8-427.4M339.1 679.1l121-427.5M344.1 685.1l118.3-427.7M348.9 690.5l115.8-427.8M353.5 695.5l113.4-428M358 700l111.2-428.1M362.3 704.1l109.1-428.2M366.6 707.8l107-428.3M370.7 711.1l105.1-428.5M374.8 714l103.2-428.6M378.8 716.5l101.4-428.8M382.7 718.7l99.7-429M386.5 720.5l98.1-429.3M390.3 721.9l96.6-429.5M394 723l95.1-429.8M397.7 723.7l93.6-430.1M401.3 724.1l92.3-430.5M404.9 724.1l91-430.9M408.5 723.8l89.6-431.3M412.1 723.1l88.4-431.8M415.7 722.1l87.1-432.3M419.3 720.7l85.9-432.9M422.8 719l84.8-433.5M426.4 716.8l83.6-434.1M430 714.3l82.5-434.7M433.7 711.3l81.3-435.3M437.4 708l80.2-436M441.1 704.2l79.1-436.7M444.9 699.9l78-437.3M448.7 695.2l76.9-438M452.6 690l75.8-438.7M456.7 684.2l74.6-439.3M460.8 677.9l73.4-439.9M465 670.9l72.2-440.4M469.3 663.4l71-440.9M473.8 655.1l69.7-441.2M478.5 646.1l68.3-441.5M483.3 636.4l66.8-441.6M488.3 625.7l65.3-441.5M493.6 614.1l63.6-441.2M499.1 601.5l61.9-440.6M504.8 587.8l60.1-439.8M510.9 572.8l58-438.5M517.4 556.4l55.7-436.7M524.3 538.5l53.2-434.3M531.6 518.9l49.9-426.9M539.4 497.3l44.9-405.3M547.9 473.6l39.6-381.6M557 447.4l34.1-355.4M566.9 418.3l28.4-326.3M577.7 386l22.5-294M589.6 349.8l16.4-257.8M602.8 309.2l10.4-217.2M617.5 263.3l4.8-171.3M633.9 211.1l.3-119.1M652.6 151.2l-2-59.2" fill="none" stroke="#000" stroke-width="0.8"/>
<g clip-path="url(#sf)"><path d="M589.2 60l-1.5 6-1.6 6-1.6 6-1.6 6-1.6 6-1.7 6-1.7 6-1.6 6-1.7 6-1.7 6-1.7 6-1.7 6-1.9 6-1.7 6-1.8 6-1.8 6-1.9 6-1.9 6-1.8 6-1.9 6-1.9 6-2.1 6-2 6-2 6-2.2 6-2.1 6-2.3 6-2.2 6-2.5 6-2.5 6-2.5 6-2.8 6-2.8 6-3.1 6-3.4 6-3.9 6-4.5 6-1.8 6-.7 6-.7 6-.7 6-.6 6-.7 6-.6 6-.7 6-.5 6-.6 6-.6 6-.5 6-.5 6-.5 6-.5 6-.5 6-.4 6-.4 6-.3 6-.3 6-.3 6-.2 6-.2 6-.1 6-.1 6 0 6 .2 6 .1 6 .4 6 .6 6 .8 6 1.2 6 2.3 6 10.7 0 4.8-6 3.4-6 3.2-6 2.8-6 2.7-6 2.6-6 2.6-6 2.2-6 2.2-6 2.3-6 2.2-6 2.2-6 2.1-6 2.1-6 1.9-6 1.9-6 2-6 2-6 1.7-6 2-6 1.7-6 2.1-6 1.8-6 1.7-6 1.9-6 1.8-6 1.5-6 1.8-6 1.9-6 1.5-6 1.9-6 1.6-6 1.6-6 1.9-6 1.6-6 1.6-6 1.6-6 1.6-6 1.7-6 1.6-6 1.7-6 1.7-6 1.2-6 1.7-6 1.7-6 1.8-6 1.3-6 1.7-6 1.3-6 1.8-6 1.8-6 1.3-6 1.3-6 1.9-6 1.3-6 1.9-6 1.3-6 1.4-6 1.3-6 2-6 1.4-6 1.3-6 1.4-6 2.1-6 1.4-6 1.4-6 1.5-6 1.4-6 1.4-6 1.5-6z" fill="#000" opacity=".35" filter="url(#bl2)"/><path d="M589.2 60l-1.5 6-1.6 6-1.6 6-1.6 6-1.6 6-1.7 6-1.7 6-1.6 6-1.7 6-1.7 6-1.7 6-1.7 6-1.9 6-1.7 6-1.8 6-1.8 6-1.9 6-1.9 6-1.8 6-1.9 6-1.9 6-2.1 6-2 6-2 6-2.2 6-2.1 6-2.3 6-2.2 6-2.5 6-2.5 6-2.5 6-2.8 6-2.8 6-3.1 6-3.4 6-3.4 6-.6 6-.5 6-.6 6-.5 6-.5 6-.5 6-.4 6-.4 6-.4 6-.3 6-.3 6-.3 6-.1 6-.1 6-.1 6 0 6 .2 6 .2 6 .6 6 .6 6 1.2 6 2.3 6 8.9 0 4.2-6 3.8-6 3-6 2.8-6 2.5-6 2.4-6 2.4-6 2.1-6 2.3-6 2.1-6 1.9-6 2.3-6 1.9-6 1.8-6 2.1-6 1.8-6 2-6 1.9-6 1.6-6 1.9-6 1.9-6 1.6-6 1.7-6 2-6 1.4-6 2-6 1.4-6 1.8-6 1.7-6 1.8-6 1.5-6 1.7-6 1.5-6 1.8-6 1.6-6 1.4-6 1.5-6 1.6-6 1.9-6 1.5-6 1.6-6 1.6-6 1.6-6 1.1-6 1.6-6 1.6-6 1.7-6 1.6-6 1.2-6 1.7-6 1.7-6 1.2-6 1.7-6 1.2-6 1.8-6 1.2-6 1.8-6 1.2-6z" fill="#000" opacity=".92" filter="url(#bl)"/></g>
<path d="M455.5 90V455" stroke="#404040" stroke-width="3" fill="none"/>
<path d="M456 455L490 295" stroke="#303830" stroke-width="1.6" fill="none"/>
</g></svg>

<span class="b" style="left:19px;top:45px">f(x,y)=</span>
<div style="left:65px;top:42px;width:184px;height:20px;border:1px solid #e3e9ef;border-top-color:#abadb3;border-left-color:#dbdfe6;background:#fff"></div>
<span class="b" style="left:68px;top:45px">x*x</span>
<div class="btn" style="left:256px;top:43px;width:90px;height:21px">Нарисовать</div>
<span class="b" style="left:404px;top:45px">Шаг</span>
<div style="left:394px;top:62px;width:49px;height:21px;border:1px solid #e3e9ef;border-top-color:#abadb3;border-left-color:#c8ccd4;background:#fff"></div>
<span style="left:397px;top:66px;font-size:11px;line-height:13px">100</span>
<div style="left:427px;top:64px;width:14px;height:9px;border:1px solid #b8b8c8;border-radius:2px 2px 0 0;background:linear-gradient(180deg,#f6f6f8,#dcdce4)"></div>
<div style="left:427px;top:73px;width:14px;height:9px;border:1px solid #b8b8c8;border-radius:0 0 2px 2px;background:linear-gradient(180deg,#f6f6f8,#dcdce4)"></div>
<svg style="position:absolute;left:427px;top:64px" width="14" height="18" viewBox="0 0 14 18"><path d="M4 6.2L7 3l3 3.2z" fill="#5a6690"/><path d="M4 11.8L7 15l3-3.2z" fill="#5a6690"/></svg>
<div class="btn" style="left:450px;top:40px;width:42px;height:20px;line-height:20px">25</div>
<div class="btn" style="left:450px;top:61px;width:42px;height:20px;line-height:20px">50</div>
<div class="btn f" style="left:450px;top:82px;width:42px;height:20px;line-height:20px">100</div>
<span class="b" style="left:523px;top:53px">X(5град)</span>
<span class="b" style="left:609px;top:40px">Вращение</span>
<span class="b" style="left:630px;top:53px">Y(0град)</span>
<span class="b" style="left:720px;top:53px">Z(-9град)</span>
<div class="track" style="left:507px;top:74px;width:86px"></div>
<div class="track" style="left:616px;top:74px;width:86px"></div>
<div class="track" style="left:712px;top:74px;width:86px"></div>
<svg style="position:absolute;left:500px;top:66px" width="310" height="22" viewBox="0 0 310 22"><defs><linearGradient id="tg" x1="0" x2="1" y1="0" y2="0"><stop offset="0" stop-color="#f4f4f4"/><stop offset=".5" stop-color="#dcdcdc"/><stop offset="1" stop-color="#c4c4c4"/></linearGradient></defs>
<path d="M46.5 3.5q0-1 1-1h7q1 0 1 1v11l-4.5 5-4.5-5z" fill="url(#tg)" stroke="#8a8a8a" stroke-width="1"/>
<path d="M154 3.5q0-1 1-1h7q1 0 1 1v11l-4.5 5-4.5-5z" fill="url(#tg)" stroke="#8a8a8a" stroke-width="1"/>
<path d="M249 3.5q0-1 1-1h7q1 0 1 1v11l-4.5 5-4.5-5z" fill="url(#tg)" stroke="#8a8a8a" stroke-width="1"/></svg>
<div class="btn" style="left:805px;top:40px;width:88px;height:21px">Справка</div>
<div class="btn" style="left:805px;top:66px;width:88px;height:21px">Центрировать</div>
</body></html>
